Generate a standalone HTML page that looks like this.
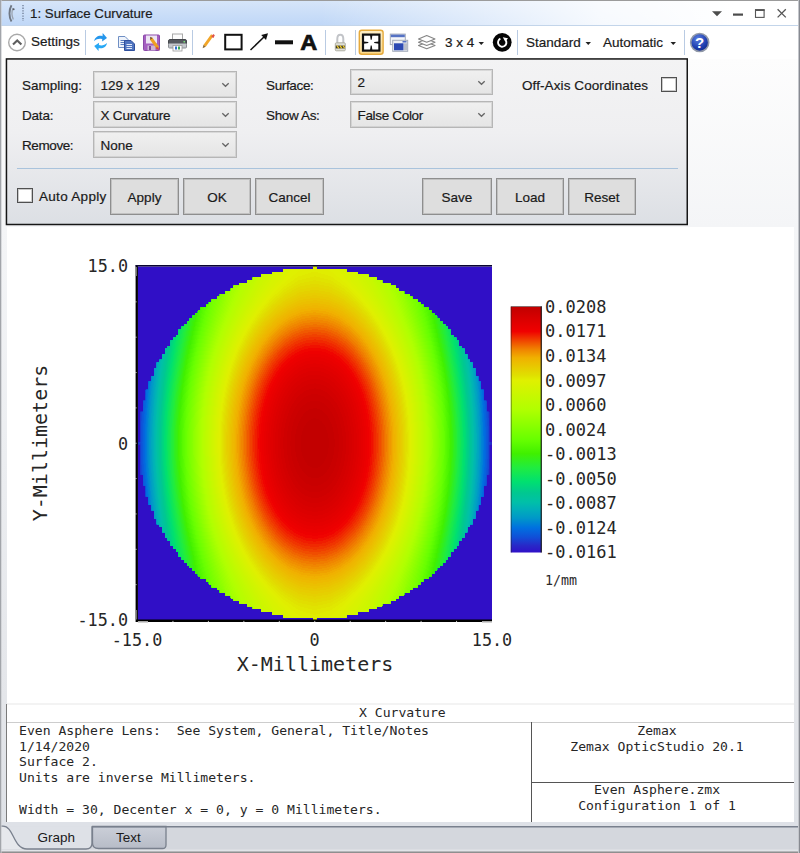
<!DOCTYPE html>
<html>
<head>
<meta charset="utf-8">
<title>1: Surface Curvature</title>
<style>
html,body{margin:0;padding:0;background:#fff;}
body{width:800px;height:853px;position:relative;overflow:hidden;font-family:"Liberation Sans",sans-serif;font-size:13.5px;color:#1a1a1a;-webkit-text-stroke:0.2px #1a1a1a;}
.abs{position:absolute;}
#win{position:absolute;left:0;top:0;width:800px;height:853px;background:#fff;overflow:hidden;}
#titlebar{left:1px;top:1px;width:797px;height:25px;background:linear-gradient(90deg,rgba(255,255,255,0) 0%,rgba(255,255,255,0) 40%,rgba(255,255,255,0.85) 75%,#ffffff 92%),linear-gradient(180deg,#d6e5f9 0%,#c9ddf8 55%,#bfd7f7 100%);}
#titleline{left:1px;top:25px;width:797px;height:1px;background:#c3d5ea;}
#title{left:30px;top:5.5px;line-height:16px;font-size:13.3px;color:#1e1e1e;white-space:nowrap;}
#toolbar{left:1px;top:26px;width:797px;height:32px;background:#fff;}
.tsep{position:absolute;width:1px;top:30px;height:25px;background:#b9cbe3;}
.tb{position:absolute;white-space:nowrap;font-size:13.5px;color:#1a1a1a;}
#sideband{left:1px;top:59px;width:798px;height:763px;background:linear-gradient(180deg,#fdfdfd 0px,#f4f5f7 168px,#eceef1 400px,#e4e6ea 640px,#dfe2e7 763px);}
#panel{left:6px;top:58px;width:682px;height:167px;background:linear-gradient(180deg,#f3f3f4 0%,#efeff1 45%,#dcdfe4 100%);}
.lbl{position:absolute;white-space:nowrap;font-size:13.5px;color:#1a1a1a;line-height:16px;}
.combo{position:absolute;height:27px;border:1px solid #b6b6b6;box-shadow:inset 0 0 0 1px rgba(175,175,175,.35);background:linear-gradient(180deg,#f0f0f0,#e5e5e5);box-sizing:border-box;font-size:13.5px;}
.combo span{position:absolute;left:6.5px;top:5.5px;line-height:16px;white-space:nowrap;}
.combo svg{position:absolute;right:6px;top:10px;}
.btn{position:absolute;height:37px;border:1px solid #8e8e8e;box-shadow:inset 0 0 0 1px rgba(140,140,140,.35);background:#dedede;box-sizing:border-box;font-size:13.5px;text-align:center;line-height:38px;}
.chk{position:absolute;width:14px;height:13px;border:1px solid #505050;box-shadow:inset 0 0 0 1px rgba(80,80,80,.3);background:#fff;box-sizing:content-box;}
#hr{left:17px;top:168px;width:661px;height:1px;background:#a9c3dc;}
#plot{left:7px;top:227px;width:787px;height:595px;background:#fff;}
.mono{font-family:"DejaVu Sans Mono","Liberation Mono",monospace;}
.info{font-size:13.1px;line-height:15.9px;white-space:pre;color:#262626;-webkit-text-stroke:0;}
#tabstrip{left:1px;top:822px;width:797px;height:31px;background:#d3d6dc;}
</style>
</head>
<body>
<div id="win">
  <div class="abs" id="titlebar"></div>
  <div class="abs" id="titleline"></div>
  <div class="abs" id="title">1: Surface Curvature</div>
  <div class="abs" id="toolbar"></div>
  <div class="abs" id="sideband"></div>
  <div class="abs" id="plot"></div>
<!--PLOT-->
<svg class="abs" style="left:0;top:225px" width="800" height="500" viewBox="0 225 800 500" shape-rendering="auto">
<defs>
<linearGradient id="cbg" x1="0" y1="0" x2="0" y2="1"><stop offset="0.000" stop-color="#c00000"/><stop offset="0.047" stop-color="#d80000"/><stop offset="0.101" stop-color="#f00000"/><stop offset="0.136" stop-color="#f04000"/><stop offset="0.172" stop-color="#f08000"/><stop offset="0.208" stop-color="#f0b000"/><stop offset="0.244" stop-color="#e8c800"/><stop offset="0.280" stop-color="#e0e000"/><stop offset="0.300" stop-color="#e0f000"/><stop offset="0.420" stop-color="#b0ff00"/><stop offset="0.540" stop-color="#68ff00"/><stop offset="0.598" stop-color="#40f000"/><stop offset="0.655" stop-color="#20ec40"/><stop offset="0.712" stop-color="#00e070"/><stop offset="0.757" stop-color="#00c890"/><stop offset="0.795" stop-color="#00c0a8"/><stop offset="0.823" stop-color="#00b0b8"/><stop offset="0.860" stop-color="#0098c8"/><stop offset="0.900" stop-color="#0070e0"/><stop offset="0.937" stop-color="#1050d8"/><stop offset="0.972" stop-color="#2828c8"/><stop offset="1.000" stop-color="#3010c8"/></linearGradient>
<clipPath id="circ"><path d="M313.38 266.50H316.12V269.29H313.38ZM283.15 269.24H346.35V272.03H283.15ZM272.16 271.98H357.34V274.77H272.16ZM261.16 274.72H368.34V277.51H261.16ZM252.92 277.46H376.58V280.25H252.92ZM247.42 280.20H382.08V282.99H247.42ZM239.18 282.94H390.32V285.73H239.18ZM233.68 285.68H395.82V288.47H233.68ZM230.93 288.42H398.57V291.21H230.93ZM225.44 291.16H404.06V293.95H225.44ZM219.94 293.90H409.56V296.69H219.94ZM217.19 296.64H412.31V299.43H217.19ZM211.70 299.38H417.80V302.17H211.70ZM208.95 302.12H420.55V304.91H208.95ZM206.20 304.86H423.30V307.65H206.20ZM200.71 307.60H428.79V310.39H200.71ZM197.96 310.34H431.54V313.14H197.96ZM195.21 313.09H434.29V315.88H195.21ZM192.46 315.83H437.04V318.62H192.46ZM189.71 318.57H439.79V321.36H189.71ZM186.97 321.31H442.53V324.10H186.97ZM184.22 324.05H445.28V326.84H184.22ZM181.47 326.79H448.03V329.58H181.47ZM178.72 329.53H450.78V332.32H178.72ZM178.72 332.27H450.78V335.06H178.72ZM175.97 335.01H453.53V337.80H175.97ZM173.22 337.75H456.28V340.54H173.22ZM170.48 340.49H459.02V343.28H170.48ZM170.48 343.23H459.02V346.02H170.48ZM167.73 345.97H461.77V348.76H167.73ZM164.98 348.71H464.52V351.50H164.98ZM164.98 351.45H464.52V354.24H164.98ZM162.23 354.19H467.27V356.98H162.23ZM162.23 356.93H467.27V359.72H162.23ZM159.48 359.67H470.02V362.46H159.48ZM156.74 362.41H472.76V365.20H156.74ZM156.74 365.15H472.76V367.94H156.74ZM153.99 367.89H475.51V370.68H153.99ZM153.99 370.63H475.51V373.42H153.99ZM153.99 373.37H475.51V376.16H153.99ZM151.24 376.11H478.26V378.90H151.24ZM151.24 378.85H478.26V381.64H151.24ZM148.49 381.59H481.01V384.38H148.49ZM148.49 384.33H481.01V387.12H148.49ZM148.49 387.07H481.01V389.86H148.49ZM145.74 389.81H483.76V392.60H145.74ZM145.74 392.55H483.76V395.34H145.74ZM145.74 395.29H483.76V398.08H145.74ZM145.74 398.03H483.76V400.83H145.74ZM143.00 400.78H486.50V403.57H143.00ZM143.00 403.52H486.50V406.31H143.00ZM143.00 406.26H486.50V409.05H143.00ZM143.00 409.00H486.50V411.79H143.00ZM140.25 411.74H489.25V414.53H140.25ZM140.25 414.48H489.25V417.27H140.25ZM140.25 417.22H489.25V420.01H140.25ZM140.25 419.96H489.25V422.75H140.25ZM140.25 422.70H489.25V425.49H140.25ZM140.25 425.44H489.25V428.23H140.25ZM140.25 428.18H489.25V430.97H140.25ZM140.25 430.92H489.25V433.71H140.25ZM140.25 433.66H489.25V436.45H140.25ZM140.25 436.40H489.25V439.19H140.25ZM140.25 439.14H489.25V441.93H140.25ZM137.50 441.88H492.00V444.67H137.50ZM140.25 444.62H489.25V447.41H140.25ZM140.25 447.36H489.25V450.15H140.25ZM140.25 450.10H489.25V452.89H140.25ZM140.25 452.84H489.25V455.63H140.25ZM140.25 455.58H489.25V458.37H140.25ZM140.25 458.32H489.25V461.11H140.25ZM140.25 461.06H489.25V463.85H140.25ZM140.25 463.80H489.25V466.59H140.25ZM140.25 466.54H489.25V469.33H140.25ZM140.25 469.28H489.25V472.07H140.25ZM140.25 472.02H489.25V474.81H140.25ZM143.00 474.76H486.50V477.55H143.00ZM143.00 477.50H486.50V480.29H143.00ZM143.00 480.24H486.50V483.03H143.00ZM143.00 482.98H486.50V485.77H143.00ZM145.74 485.72H483.76V488.52H145.74ZM145.74 488.47H483.76V491.26H145.74ZM145.74 491.21H483.76V494.00H145.74ZM145.74 493.95H483.76V496.74H145.74ZM148.49 496.69H481.01V499.48H148.49ZM148.49 499.43H481.01V502.22H148.49ZM148.49 502.17H481.01V504.96H148.49ZM151.24 504.91H478.26V507.70H151.24ZM151.24 507.65H478.26V510.44H151.24ZM153.99 510.39H475.51V513.18H153.99ZM153.99 513.13H475.51V515.92H153.99ZM153.99 515.87H475.51V518.66H153.99ZM156.74 518.61H472.76V521.40H156.74ZM156.74 521.35H472.76V524.14H156.74ZM159.48 524.09H470.02V526.88H159.48ZM162.23 526.83H467.27V529.62H162.23ZM162.23 529.57H467.27V532.36H162.23ZM164.98 532.31H464.52V535.10H164.98ZM164.98 535.05H464.52V537.84H164.98ZM167.73 537.79H461.77V540.58H167.73ZM170.48 540.53H459.02V543.32H170.48ZM170.48 543.27H459.02V546.06H170.48ZM173.22 546.01H456.28V548.80H173.22ZM175.97 548.75H453.53V551.54H175.97ZM178.72 551.49H450.78V554.28H178.72ZM178.72 554.23H450.78V557.02H178.72ZM181.47 556.97H448.03V559.76H181.47ZM184.22 559.71H445.28V562.50H184.22ZM186.97 562.45H442.53V565.24H186.97ZM189.71 565.19H439.79V567.98H189.71ZM192.46 567.93H437.04V570.72H192.46ZM195.21 570.67H434.29V573.46H195.21ZM197.96 573.41H431.54V576.21H197.96ZM200.71 576.16H428.79V578.95H200.71ZM206.20 578.90H423.30V581.69H206.20ZM208.95 581.64H420.55V584.43H208.95ZM211.70 584.38H417.80V587.17H211.70ZM217.19 587.12H412.31V589.91H217.19ZM219.94 589.86H409.56V592.65H219.94ZM225.44 592.60H404.06V595.39H225.44ZM230.93 595.34H398.57V598.13H230.93ZM233.68 598.08H395.82V600.87H233.68ZM239.18 600.82H390.32V603.61H239.18ZM247.42 603.56H382.08V606.35H247.42ZM252.92 606.30H376.58V609.09H252.92ZM261.16 609.04H368.34V611.83H261.16ZM272.16 611.78H357.34V614.57H272.16ZM283.15 614.52H346.35V617.31H283.15ZM313.38 617.26H316.12V620.05H313.38Z"/></clipPath>
</defs>
<rect x="137.5" y="266.5" width="354.5" height="353.5" fill="#300fc6"/>
<g clip-path="url(#circ)" shape-rendering="crispEdges">
<path d="M494.4 443.2L494.2 425.6L493.2 407.8L488.9 390.6L482.9 373.8L475.2 357.7L466.1 342.4L455.4 328.1L443.4 314.9L430.2 303.0L415.9 292.4L400.5 283.2L384.4 275.6L367.6 269.6L350.3 265.3L332.6 262.7L314.8 261.8L296.9 262.7L279.2 265.3L261.9 269.6L245.1 275.6L229.0 283.2L213.6 292.4L199.3 303.0L186.1 314.9L174.1 328.1L163.4 342.4L154.3 357.7L146.6 373.8L140.6 390.6L136.3 407.8L135.3 425.6L135.1 443.2L135.3 460.9L136.3 478.7L140.6 495.9L146.6 512.7L154.3 528.8L163.4 544.1L174.1 558.4L186.1 571.6L199.3 583.5L213.6 594.1L229.0 603.3L245.1 610.9L261.9 616.9L279.2 621.2L296.9 623.8L314.7 624.7L332.6 623.8L350.3 621.2L367.6 616.9L384.4 610.9L400.5 603.3L415.9 594.1L430.2 583.5L443.4 571.6L455.4 558.4L466.1 544.1L475.2 528.8L482.9 512.7L488.9 495.9L493.2 478.7L494.2 460.9Z" fill="#2f13c8"/>
<path d="M493.7 443.2L493.5 425.7L492.9 407.9L488.9 390.6L482.9 373.8L475.2 357.7L466.1 342.4L455.4 328.1L443.4 314.9L430.2 303.0L415.9 292.4L400.5 283.2L384.4 275.6L367.6 269.6L350.3 265.3L332.6 262.7L314.8 261.8L296.9 262.7L279.2 265.3L261.9 269.6L245.1 275.6L229.0 283.2L213.6 292.4L199.3 303.0L186.1 314.9L174.1 328.1L163.4 342.4L154.3 357.7L146.6 373.8L140.6 390.6L136.6 407.9L136.0 425.7L135.8 443.2L136.0 460.8L136.6 478.6L140.6 495.9L146.6 512.7L154.3 528.8L163.4 544.1L174.1 558.4L186.1 571.6L199.3 583.5L213.6 594.1L229.0 603.3L245.1 610.9L261.9 616.9L279.2 621.2L296.9 623.8L314.7 624.7L332.6 623.8L350.3 621.2L367.6 616.9L384.4 610.9L400.5 603.3L415.9 594.1L430.2 583.5L443.4 571.6L455.4 558.4L466.1 544.1L475.2 528.8L482.9 512.7L488.9 495.9L492.9 478.6L493.5 460.8Z" fill="#2d19c8"/>
<path d="M493.1 443.2L492.9 425.8L492.3 408.0L488.9 390.6L482.9 373.8L475.2 357.7L466.1 342.4L455.4 328.1L443.4 314.9L430.2 303.0L415.9 292.4L400.5 283.2L384.4 275.6L367.6 269.6L350.3 265.3L332.6 262.7L314.8 261.8L296.9 262.7L279.2 265.3L261.9 269.6L245.1 275.6L229.0 283.2L213.6 292.4L199.3 303.0L186.1 314.9L174.1 328.1L163.4 342.4L154.3 357.7L146.6 373.8L140.6 390.6L137.2 408.0L136.6 425.8L136.4 443.2L136.6 460.7L137.2 478.5L140.6 495.9L146.6 512.7L154.3 528.8L163.4 544.1L174.1 558.4L186.1 571.6L199.3 583.5L213.6 594.1L229.0 603.3L245.1 610.9L261.9 616.9L279.2 621.2L296.9 623.8L314.7 624.7L332.6 623.8L350.3 621.2L367.6 616.9L384.4 610.9L400.5 603.3L415.9 594.1L430.2 583.5L443.4 571.6L455.4 558.4L466.1 544.1L475.2 528.8L482.9 512.7L488.9 495.9L492.3 478.5L492.9 460.7Z" fill="#2b1ec8"/>
<path d="M492.4 443.2L492.2 425.8L491.6 408.2L488.9 390.6L482.9 373.8L475.2 357.7L466.1 342.4L455.4 328.1L443.4 314.9L430.2 303.0L415.9 292.4L400.5 283.2L384.4 275.6L367.6 269.6L350.3 265.3L332.6 262.7L314.8 261.8L296.9 262.7L279.2 265.3L261.9 269.6L245.1 275.6L229.0 283.2L213.6 292.4L199.3 303.0L186.1 314.9L174.1 328.1L163.4 342.4L154.3 357.7L146.6 373.8L140.6 390.6L137.9 408.2L137.3 425.8L137.1 443.2L137.3 460.7L137.9 478.3L140.6 495.9L146.6 512.7L154.3 528.8L163.4 544.1L174.1 558.4L186.1 571.6L199.3 583.5L213.6 594.1L229.0 603.3L245.1 610.9L261.9 616.9L279.2 621.2L296.9 623.8L314.7 624.7L332.6 623.8L350.3 621.2L367.6 616.9L384.4 610.9L400.5 603.3L415.9 594.1L430.2 583.5L443.4 571.6L455.4 558.4L466.1 544.1L475.2 528.8L482.9 512.7L488.9 495.9L491.6 478.3L492.2 460.7Z" fill="#2924c8"/>
<path d="M491.7 443.2L491.5 425.9L490.9 408.3L488.9 390.6L482.9 373.8L475.2 357.7L466.1 342.4L455.4 328.1L443.4 314.9L430.2 303.0L415.9 292.4L400.5 283.2L384.4 275.6L367.6 269.6L350.3 265.3L332.6 262.7L314.8 261.8L296.9 262.7L279.2 265.3L261.9 269.6L245.1 275.6L229.0 283.2L213.6 292.4L199.3 303.0L186.1 314.9L174.1 328.1L163.4 342.4L154.3 357.7L146.6 373.8L140.6 390.6L138.6 408.3L138.0 425.9L137.8 443.2L138.0 460.6L138.6 478.2L140.6 495.9L146.6 512.7L154.3 528.8L163.4 544.1L174.1 558.4L186.1 571.6L199.3 583.5L213.6 594.1L229.0 603.3L245.1 610.9L261.9 616.9L279.2 621.2L296.9 623.8L314.7 624.7L332.6 623.8L350.3 621.2L367.6 616.9L384.4 610.9L400.5 603.3L415.9 594.1L430.2 583.5L443.4 571.6L455.4 558.4L466.1 544.1L475.2 528.8L482.9 512.7L488.9 495.9L490.9 478.2L491.5 460.6Z" fill="#272ac9"/>
<path d="M491.1 443.2L490.9 426.0L490.3 408.4L488.9 390.6L482.9 373.8L475.2 357.7L466.1 342.4L455.4 328.1L443.4 314.9L430.2 303.0L415.9 292.4L400.5 283.2L384.4 275.6L367.6 269.6L350.3 265.3L332.6 262.7L314.8 261.8L296.9 262.7L279.2 265.3L261.9 269.6L245.1 275.6L229.0 283.2L213.6 292.4L199.3 303.0L186.1 314.9L174.1 328.1L163.4 342.4L154.3 357.7L146.6 373.8L140.6 390.6L139.2 408.4L138.6 426.0L138.4 443.2L138.6 460.5L139.2 478.1L140.6 495.9L146.6 512.7L154.3 528.8L163.4 544.1L174.1 558.4L186.1 571.6L199.3 583.5L213.6 594.1L229.0 603.3L245.1 610.9L261.9 616.9L279.2 621.2L296.9 623.8L314.7 624.7L332.6 623.8L350.3 621.2L367.6 616.9L384.4 610.9L400.5 603.3L415.9 594.1L430.2 583.5L443.4 571.6L455.4 558.4L466.1 544.1L475.2 528.8L482.9 512.7L488.9 495.9L490.3 478.1L490.9 460.5Z" fill="#2232cc"/>
<path d="M490.4 443.2L490.2 426.0L489.6 408.6L488.6 390.7L482.9 373.8L475.2 357.7L466.1 342.4L455.4 328.1L443.4 314.9L430.2 303.0L415.9 292.4L400.5 283.2L384.4 275.6L367.6 269.6L350.3 265.3L332.6 262.7L314.8 261.8L296.9 262.7L279.2 265.3L261.9 269.6L245.1 275.6L229.0 283.2L213.6 292.4L199.3 303.0L186.1 314.9L174.1 328.1L163.4 342.4L154.3 357.7L146.6 373.8L140.9 390.7L139.9 408.6L139.3 426.0L139.1 443.2L139.3 460.5L139.9 477.9L140.9 495.8L146.6 512.7L154.3 528.8L163.4 544.1L174.1 558.4L186.1 571.6L199.3 583.5L213.6 594.1L229.0 603.3L245.1 610.9L261.9 616.9L279.2 621.2L296.9 623.8L314.7 624.7L332.6 623.8L350.3 621.2L367.6 616.9L384.4 610.9L400.5 603.3L415.9 594.1L430.2 583.5L443.4 571.6L455.4 558.4L466.1 544.1L475.2 528.8L482.9 512.7L488.6 495.8L489.6 477.9L490.2 460.5Z" fill="#1d3acf"/>
<path d="M489.7 443.2L489.5 426.1L488.9 408.7L487.9 390.9L482.9 373.8L475.2 357.7L466.1 342.4L455.4 328.1L443.4 314.9L430.2 303.0L415.9 292.4L400.5 283.2L384.4 275.6L367.6 269.6L350.3 265.3L332.6 262.7L314.8 261.8L296.9 262.7L279.2 265.3L261.9 269.6L245.1 275.6L229.0 283.2L213.6 292.4L199.3 303.0L186.1 314.9L174.1 328.1L163.4 342.4L154.3 357.7L146.6 373.8L141.6 390.9L140.6 408.7L140.0 426.1L139.8 443.2L140.0 460.4L140.6 477.8L141.6 495.6L146.6 512.7L154.3 528.8L163.4 544.1L174.1 558.4L186.1 571.6L199.3 583.5L213.6 594.1L229.0 603.3L245.1 610.9L261.9 616.9L279.2 621.2L296.9 623.8L314.7 624.7L332.6 623.8L350.3 621.2L367.6 616.9L384.4 610.9L400.5 603.3L415.9 594.1L430.2 583.5L443.4 571.6L455.4 558.4L466.1 544.1L475.2 528.8L482.9 512.7L487.9 495.6L488.9 477.8L489.5 460.4Z" fill="#1941d2"/>
<path d="M489.0 443.2L488.8 426.2L488.2 408.8L487.2 391.1L482.9 373.8L475.2 357.7L466.1 342.4L455.4 328.1L443.4 314.9L430.2 303.0L415.9 292.4L400.5 283.2L384.4 275.6L367.6 269.6L350.3 265.3L332.6 262.7L314.8 261.8L296.9 262.7L279.2 265.3L261.9 269.6L245.1 275.6L229.0 283.2L213.6 292.4L199.3 303.0L186.1 314.9L174.1 328.1L163.4 342.4L154.3 357.7L146.6 373.8L142.3 391.1L141.3 408.8L140.7 426.2L140.5 443.2L140.7 460.3L141.3 477.7L142.3 495.4L146.6 512.7L154.3 528.8L163.4 544.1L174.1 558.4L186.1 571.6L199.3 583.5L213.6 594.1L229.0 603.3L245.1 610.9L261.9 616.9L279.2 621.2L296.9 623.8L314.7 624.7L332.6 623.8L350.3 621.2L367.6 616.9L384.4 610.9L400.5 603.3L415.9 594.1L430.2 583.5L443.4 571.6L455.4 558.4L466.1 544.1L475.2 528.8L482.9 512.7L487.2 495.4L488.2 477.7L488.8 460.3Z" fill="#1449d5"/>
<path d="M488.4 443.2L488.2 426.2L487.5 409.0L486.5 391.3L482.9 373.8L475.2 357.7L466.1 342.4L455.4 328.1L443.4 314.9L430.2 303.0L415.9 292.4L400.5 283.2L384.4 275.6L367.6 269.6L350.3 265.3L332.6 262.7L314.8 261.8L296.9 262.7L279.2 265.3L261.9 269.6L245.1 275.6L229.0 283.2L213.6 292.4L199.3 303.0L186.1 314.9L174.1 328.1L163.4 342.4L154.3 357.7L146.6 373.8L143.0 391.3L142.0 409.0L141.3 426.2L141.1 443.2L141.3 460.3L142.0 477.5L143.0 495.2L146.6 512.7L154.3 528.8L163.4 544.1L174.1 558.4L186.1 571.6L199.3 583.5L213.6 594.1L229.0 603.3L245.1 610.9L261.9 616.9L279.2 621.2L296.9 623.8L314.7 624.7L332.6 623.8L350.3 621.2L367.6 616.9L384.4 610.9L400.5 603.3L415.9 594.1L430.2 583.5L443.4 571.6L455.4 558.4L466.1 544.1L475.2 528.8L482.9 512.7L486.5 495.2L487.5 477.5L488.2 460.3Z" fill="#1050d8"/>
<path d="M487.7 443.2L487.5 426.3L486.9 409.1L485.9 391.5L482.9 373.8L475.2 357.7L466.1 342.4L455.4 328.1L443.4 314.9L430.2 303.0L415.9 292.4L400.5 283.2L384.4 275.6L367.6 269.6L350.3 265.3L332.6 262.7L314.8 261.8L296.9 262.7L279.2 265.3L261.9 269.6L245.1 275.6L229.0 283.2L213.6 292.4L199.3 303.0L186.1 314.9L174.1 328.1L163.4 342.4L154.3 357.7L146.6 373.8L143.6 391.5L142.6 409.1L142.0 426.3L141.8 443.2L142.0 460.2L142.6 477.4L143.6 495.0L146.6 512.7L154.3 528.8L163.4 544.1L174.1 558.4L186.1 571.6L199.3 583.5L213.6 594.1L229.0 603.3L245.1 610.9L261.9 616.9L279.2 621.2L296.9 623.8L314.7 624.7L332.6 623.8L350.3 621.2L367.6 616.9L384.4 610.9L400.5 603.3L415.9 594.1L430.2 583.5L443.4 571.6L455.4 558.4L466.1 544.1L475.2 528.8L482.9 512.7L485.9 495.0L486.9 477.4L487.5 460.2Z" fill="#0d56da"/>
<path d="M487.0 443.2L486.8 426.4L486.2 409.2L485.2 391.7L482.9 373.8L475.2 357.7L466.1 342.4L455.4 328.1L443.4 314.9L430.2 303.0L415.9 292.4L400.5 283.2L384.4 275.6L367.6 269.6L350.3 265.3L332.6 262.7L314.8 261.8L296.9 262.7L279.2 265.3L261.9 269.6L245.1 275.6L229.0 283.2L213.6 292.4L199.3 303.0L186.1 314.9L174.1 328.1L163.4 342.4L154.3 357.7L146.6 373.8L144.3 391.7L143.3 409.2L142.7 426.4L142.5 443.2L142.7 460.1L143.3 477.3L144.3 494.8L146.6 512.7L154.3 528.8L163.4 544.1L174.1 558.4L186.1 571.6L199.3 583.5L213.6 594.1L229.0 603.3L245.1 610.9L261.9 616.9L279.2 621.2L296.9 623.8L314.7 624.7L332.6 623.8L350.3 621.2L367.6 616.9L384.4 610.9L400.5 603.3L415.9 594.1L430.2 583.5L443.4 571.6L455.4 558.4L466.1 544.1L475.2 528.8L482.9 512.7L485.2 494.8L486.2 477.3L486.8 460.1Z" fill="#0a5cdb"/>
<path d="M486.3 443.2L486.1 426.4L485.5 409.4L484.5 391.9L482.9 373.8L475.2 357.7L466.1 342.4L455.4 328.1L443.4 314.9L430.2 303.0L415.9 292.4L400.5 283.2L384.4 275.6L367.6 269.6L350.3 265.3L332.6 262.7L314.8 261.8L296.9 262.7L279.2 265.3L261.9 269.6L245.1 275.6L229.0 283.2L213.6 292.4L199.3 303.0L186.1 314.9L174.1 328.1L163.4 342.4L154.3 357.7L146.6 373.8L145.0 391.9L144.0 409.4L143.4 426.4L143.2 443.2L143.4 460.1L144.0 477.1L145.0 494.6L146.6 512.7L154.3 528.8L163.4 544.1L174.1 558.4L186.1 571.6L199.3 583.5L213.6 594.1L229.0 603.3L245.1 610.9L261.9 616.9L279.2 621.2L296.9 623.8L314.7 624.7L332.6 623.8L350.3 621.2L367.6 616.9L384.4 610.9L400.5 603.3L415.9 594.1L430.2 583.5L443.4 571.6L455.4 558.4L466.1 544.1L475.2 528.8L482.9 512.7L484.5 494.6L485.5 477.1L486.1 460.1Z" fill="#0762dc"/>
<path d="M485.7 443.2L485.5 426.5L484.8 409.5L483.8 392.1L482.4 374.0L475.2 357.7L466.1 342.4L455.4 328.1L443.4 314.9L430.2 303.0L415.9 292.4L400.5 283.2L384.4 275.6L367.6 269.6L350.3 265.3L332.6 262.7L314.8 261.8L296.9 262.7L279.2 265.3L261.9 269.6L245.1 275.6L229.0 283.2L213.6 292.4L199.3 303.0L186.1 314.9L174.1 328.1L163.4 342.4L154.3 357.7L147.1 374.0L145.7 392.1L144.7 409.5L144.0 426.5L143.8 443.2L144.0 460.0L144.7 477.0L145.7 494.4L147.1 512.5L154.3 528.8L163.4 544.1L174.1 558.4L186.1 571.6L199.3 583.5L213.6 594.1L229.0 603.3L245.1 610.9L261.9 616.9L279.2 621.2L296.9 623.8L314.7 624.7L332.6 623.8L350.3 621.2L367.6 616.9L384.4 610.9L400.5 603.3L415.9 594.1L430.2 583.5L443.4 571.6L455.4 558.4L466.1 544.1L475.2 528.8L482.4 512.5L483.8 494.4L484.8 477.0L485.5 460.0Z" fill="#0467de"/>
<path d="M485.0 443.2L484.8 426.6L484.1 409.7L483.1 392.3L481.7 374.3L475.2 357.7L466.1 342.4L455.4 328.1L443.4 314.9L430.2 303.0L415.9 292.4L400.5 283.2L384.4 275.6L367.6 269.6L350.3 265.3L332.6 262.7L314.8 261.8L296.9 262.7L279.2 265.3L261.9 269.6L245.1 275.6L229.0 283.2L213.6 292.4L199.3 303.0L186.1 314.9L174.1 328.1L163.4 342.4L154.3 357.7L147.8 374.3L146.4 392.3L145.4 409.7L144.7 426.6L144.5 443.2L144.7 459.9L145.4 476.8L146.4 494.2L147.8 512.2L154.3 528.8L163.4 544.1L174.1 558.4L186.1 571.6L199.3 583.5L213.6 594.1L229.0 603.3L245.1 610.9L261.9 616.9L279.2 621.2L296.9 623.8L314.7 624.7L332.6 623.8L350.3 621.2L367.6 616.9L384.4 610.9L400.5 603.3L415.9 594.1L430.2 583.5L443.4 571.6L455.4 558.4L466.1 544.1L475.2 528.8L481.7 512.2L483.1 494.2L484.1 476.8L484.8 459.9Z" fill="#016ddf"/>
<path d="M484.3 443.2L484.1 426.6L483.4 409.8L482.4 392.5L481.0 374.6L475.2 357.7L466.1 342.4L455.4 328.1L443.4 314.9L430.2 303.0L415.9 292.4L400.5 283.2L384.4 275.6L367.6 269.6L350.3 265.3L332.6 262.7L314.8 261.8L296.9 262.7L279.2 265.3L261.9 269.6L245.1 275.6L229.0 283.2L213.6 292.4L199.3 303.0L186.1 314.9L174.1 328.1L163.4 342.4L154.3 357.7L148.5 374.6L147.1 392.5L146.1 409.8L145.4 426.6L145.2 443.2L145.4 459.9L146.1 476.7L147.1 494.0L148.5 511.9L154.3 528.8L163.4 544.1L174.1 558.4L186.1 571.6L199.3 583.5L213.6 594.1L229.0 603.3L245.1 610.9L261.9 616.9L279.2 621.2L296.9 623.8L314.7 624.7L332.6 623.8L350.3 621.2L367.6 616.9L384.4 610.9L400.5 603.3L415.9 594.1L430.2 583.5L443.4 571.6L455.4 558.4L466.1 544.1L475.2 528.8L481.0 511.9L482.4 494.0L483.4 476.7L484.1 459.9Z" fill="#0073de"/>
<path d="M483.6 443.2L483.4 426.7L482.8 409.9L481.7 392.7L480.3 374.9L475.2 357.7L466.1 342.4L455.4 328.1L443.4 314.9L430.2 303.0L415.9 292.4L400.5 283.2L384.4 275.6L367.6 269.6L350.3 265.3L332.6 262.7L314.8 261.8L296.9 262.7L279.2 265.3L261.9 269.6L245.1 275.6L229.0 283.2L213.6 292.4L199.3 303.0L186.1 314.9L174.1 328.1L163.4 342.4L154.3 357.7L149.2 374.9L147.8 392.7L146.7 409.9L146.1 426.7L145.9 443.2L146.1 459.8L146.7 476.6L147.8 493.8L149.2 511.6L154.3 528.8L163.4 544.1L174.1 558.4L186.1 571.6L199.3 583.5L213.6 594.1L229.0 603.3L245.1 610.9L261.9 616.9L279.2 621.2L296.9 623.8L314.7 624.7L332.6 623.8L350.3 621.2L367.6 616.9L384.4 610.9L400.5 603.3L415.9 594.1L430.2 583.5L443.4 571.6L455.4 558.4L466.1 544.1L475.2 528.8L480.3 511.6L481.7 493.8L482.8 476.6L483.4 459.8Z" fill="#007ada"/>
<path d="M482.9 443.2L482.7 426.8L482.1 410.1L481.0 393.0L479.6 375.2L475.2 357.7L466.1 342.4L455.4 328.1L443.4 314.9L430.2 303.0L415.9 292.4L400.5 283.2L384.4 275.6L367.6 269.6L350.3 265.3L332.6 262.7L314.8 261.8L296.9 262.7L279.2 265.3L261.9 269.6L245.1 275.6L229.0 283.2L213.6 292.4L199.3 303.0L186.1 314.9L174.1 328.1L163.4 342.4L154.3 357.7L149.9 375.2L148.5 393.0L147.4 410.1L146.8 426.8L146.6 443.2L146.8 459.7L147.4 476.4L148.5 493.5L149.9 511.3L154.3 528.8L163.4 544.1L174.1 558.4L186.1 571.6L199.3 583.5L213.6 594.1L229.0 603.3L245.1 610.9L261.9 616.9L279.2 621.2L296.9 623.8L314.7 624.7L332.6 623.8L350.3 621.2L367.6 616.9L384.4 610.9L400.5 603.3L415.9 594.1L430.2 583.5L443.4 571.6L455.4 558.4L466.1 544.1L475.2 528.8L479.6 511.3L481.0 493.5L482.1 476.4L482.7 459.7Z" fill="#0081d6"/>
<path d="M482.2 443.2L482.0 426.8L481.4 410.2L480.3 393.2L478.9 375.5L475.2 357.7L466.1 342.4L455.4 328.1L443.4 314.9L430.2 303.0L415.9 292.4L400.5 283.2L384.4 275.6L367.6 269.6L350.3 265.3L332.6 262.7L314.8 261.8L296.9 262.7L279.2 265.3L261.9 269.6L245.1 275.6L229.0 283.2L213.6 292.4L199.3 303.0L186.1 314.9L174.1 328.1L163.4 342.4L154.3 357.7L150.6 375.5L149.2 393.2L148.1 410.2L147.5 426.8L147.3 443.2L147.5 459.7L148.1 476.3L149.2 493.3L150.6 511.0L154.3 528.8L163.4 544.1L174.1 558.4L186.1 571.6L199.3 583.5L213.6 594.1L229.0 603.3L245.1 610.9L261.9 616.9L279.2 621.2L296.9 623.8L314.7 624.7L332.6 623.8L350.3 621.2L367.6 616.9L384.4 610.9L400.5 603.3L415.9 594.1L430.2 583.5L443.4 571.6L455.4 558.4L466.1 544.1L475.2 528.8L478.9 511.0L480.3 493.3L481.4 476.3L482.0 459.7Z" fill="#0087d2"/>
<path d="M481.5 443.2L481.3 426.9L480.7 410.3L479.6 393.4L478.1 375.8L475.2 357.7L466.1 342.4L455.4 328.1L443.4 314.9L430.2 303.0L415.9 292.4L400.5 283.2L384.4 275.6L367.6 269.6L350.3 265.3L332.6 262.7L314.8 261.8L296.9 262.7L279.2 265.3L261.9 269.6L245.1 275.6L229.0 283.2L213.6 292.4L199.3 303.0L186.1 314.9L174.1 328.1L163.4 342.4L154.3 357.7L151.4 375.8L149.9 393.4L148.8 410.3L148.2 426.9L148.0 443.2L148.2 459.6L148.8 476.2L149.9 493.1L151.4 510.7L154.3 528.8L163.4 544.1L174.1 558.4L186.1 571.6L199.3 583.5L213.6 594.1L229.0 603.3L245.1 610.9L261.9 616.9L279.2 621.2L296.9 623.8L314.7 624.7L332.6 623.8L350.3 621.2L367.6 616.9L384.4 610.9L400.5 603.3L415.9 594.1L430.2 583.5L443.4 571.6L455.4 558.4L466.1 544.1L475.2 528.8L478.1 510.7L479.6 493.1L480.7 476.2L481.3 459.6Z" fill="#008ece"/>
<path d="M480.9 443.2L480.6 427.0L480.0 410.5L478.9 393.6L477.4 376.1L475.2 357.7L466.1 342.4L455.4 328.1L443.4 314.9L430.2 303.0L415.9 292.4L400.5 283.2L384.4 275.6L367.6 269.6L350.3 265.3L332.6 262.7L314.8 261.8L296.9 262.7L279.2 265.3L261.9 269.6L245.1 275.6L229.0 283.2L213.6 292.4L199.3 303.0L186.1 314.9L174.1 328.1L163.4 342.4L154.3 357.7L152.1 376.1L150.6 393.6L149.5 410.5L148.9 427.0L148.6 443.2L148.9 459.5L149.5 476.0L150.6 492.9L152.1 510.4L154.3 528.8L163.4 544.1L174.1 558.4L186.1 571.6L199.3 583.5L213.6 594.1L229.0 603.3L245.1 610.9L261.9 616.9L279.2 621.2L296.9 623.8L314.7 624.7L332.6 623.8L350.3 621.2L367.6 616.9L384.4 610.9L400.5 603.3L415.9 594.1L430.2 583.5L443.4 571.6L455.4 558.4L466.1 544.1L475.2 528.8L477.4 510.4L478.9 492.9L480.0 476.0L480.6 459.5Z" fill="#0095ca"/>
<path d="M480.2 443.2L479.9 427.0L479.3 410.6L478.2 393.8L476.7 376.4L474.9 357.9L466.1 342.4L455.4 328.1L443.4 314.9L430.2 303.0L415.9 292.4L400.5 283.2L384.4 275.6L367.6 269.6L350.3 265.3L332.6 262.7L314.8 261.8L296.9 262.7L279.2 265.3L261.9 269.6L245.1 275.6L229.0 283.2L213.6 292.4L199.3 303.0L186.1 314.9L174.1 328.1L163.4 342.4L154.6 357.9L152.8 376.4L151.3 393.8L150.2 410.6L149.6 427.0L149.3 443.2L149.6 459.5L150.2 475.9L151.3 492.7L152.8 510.1L154.6 528.6L163.4 544.1L174.1 558.4L186.1 571.6L199.3 583.5L213.6 594.1L229.0 603.3L245.1 610.9L261.9 616.9L279.2 621.2L296.9 623.8L314.7 624.7L332.6 623.8L350.3 621.2L367.6 616.9L384.4 610.9L400.5 603.3L415.9 594.1L430.2 583.5L443.4 571.6L455.4 558.4L466.1 544.1L474.9 528.6L476.7 510.1L478.2 492.7L479.3 475.9L479.9 459.5Z" fill="#009ac7"/>
<path d="M479.5 443.2L479.2 427.1L478.6 410.8L477.5 394.0L476.0 376.6L474.2 358.3L466.1 342.4L455.4 328.1L443.4 314.9L430.2 303.0L415.9 292.4L400.5 283.2L384.4 275.6L367.6 269.6L350.3 265.3L332.6 262.7L314.8 261.8L296.9 262.7L279.2 265.3L261.9 269.6L245.1 275.6L229.0 283.2L213.6 292.4L199.3 303.0L186.1 314.9L174.1 328.1L163.4 342.4L155.3 358.3L153.5 376.6L152.0 394.0L150.9 410.8L150.3 427.1L150.0 443.2L150.3 459.4L150.9 475.7L152.0 492.5L153.5 509.9L155.3 528.2L163.4 544.1L174.1 558.4L186.1 571.6L199.3 583.5L213.6 594.1L229.0 603.3L245.1 610.9L261.9 616.9L279.2 621.2L296.9 623.8L314.7 624.7L332.6 623.8L350.3 621.2L367.6 616.9L384.4 610.9L400.5 603.3L415.9 594.1L430.2 583.5L443.4 571.6L455.4 558.4L466.1 544.1L474.2 528.2L476.0 509.9L477.5 492.5L478.6 475.7L479.2 459.4Z" fill="#009ec4"/>
<path d="M478.8 443.2L478.5 427.2L477.9 410.9L476.8 394.2L475.3 376.9L473.4 358.7L466.1 342.4L455.4 328.1L443.4 314.9L430.2 303.0L415.9 292.4L400.5 283.2L384.4 275.6L367.6 269.6L350.3 265.3L332.6 262.7L314.8 261.8L296.9 262.7L279.2 265.3L261.9 269.6L245.1 275.6L229.0 283.2L213.6 292.4L199.3 303.0L186.1 314.9L174.1 328.1L163.4 342.4L156.1 358.7L154.2 376.9L152.7 394.2L151.6 410.9L151.0 427.2L150.7 443.2L151.0 459.3L151.6 475.6L152.7 492.3L154.2 509.6L156.1 527.8L163.4 544.1L174.1 558.4L186.1 571.6L199.3 583.5L213.6 594.1L229.0 603.3L245.1 610.9L261.9 616.9L279.2 621.2L296.9 623.8L314.7 624.7L332.6 623.8L350.3 621.2L367.6 616.9L384.4 610.9L400.5 603.3L415.9 594.1L430.2 583.5L443.4 571.6L455.4 558.4L466.1 544.1L473.4 527.8L475.3 509.6L476.8 492.3L477.9 475.6L478.5 459.3Z" fill="#00a3c1"/>
<path d="M478.1 443.2L477.8 427.2L477.2 411.0L476.1 394.4L474.6 377.2L472.7 359.1L466.1 342.4L455.4 328.1L443.4 314.9L430.2 303.0L415.9 292.4L400.5 283.2L384.4 275.6L367.6 269.6L350.3 265.3L332.6 262.7L314.8 261.8L296.9 262.7L279.2 265.3L261.9 269.6L245.1 275.6L229.0 283.2L213.6 292.4L199.3 303.0L186.1 314.9L174.1 328.1L163.4 342.4L156.8 359.1L154.9 377.2L153.4 394.4L152.3 411.0L151.7 427.2L151.4 443.2L151.7 459.3L152.3 475.5L153.4 492.1L154.9 509.3L156.8 527.4L163.4 544.1L174.1 558.4L186.1 571.6L199.3 583.5L213.6 594.1L229.0 603.3L245.1 610.9L261.9 616.9L279.2 621.2L296.9 623.8L314.7 624.7L332.6 623.8L350.3 621.2L367.6 616.9L384.4 610.9L400.5 603.3L415.9 594.1L430.2 583.5L443.4 571.6L455.4 558.4L466.1 544.1L472.7 527.4L474.6 509.3L476.1 492.1L477.2 475.5L477.8 459.3Z" fill="#00a7be"/>
<path d="M477.4 443.2L477.1 427.3L476.5 411.2L475.4 394.7L473.8 377.5L472.0 359.5L466.1 342.4L455.4 328.1L443.4 314.9L430.2 303.0L415.9 292.4L400.5 283.2L384.4 275.6L367.6 269.6L350.3 265.3L332.6 262.7L314.8 261.8L296.9 262.7L279.2 265.3L261.9 269.6L245.1 275.6L229.0 283.2L213.6 292.4L199.3 303.0L186.1 314.9L174.1 328.1L163.4 342.4L157.5 359.5L155.7 377.5L154.1 394.7L153.0 411.2L152.4 427.3L152.1 443.2L152.4 459.2L153.0 475.3L154.1 491.8L155.7 509.0L157.5 527.0L163.4 544.1L174.1 558.4L186.1 571.6L199.3 583.5L213.6 594.1L229.0 603.3L245.1 610.9L261.9 616.9L279.2 621.2L296.9 623.8L314.7 624.7L332.6 623.8L350.3 621.2L367.6 616.9L384.4 610.9L400.5 603.3L415.9 594.1L430.2 583.5L443.4 571.6L455.4 558.4L466.1 544.1L472.0 527.0L473.8 509.0L475.4 491.8L476.5 475.3L477.1 459.2Z" fill="#00abbb"/>
<path d="M476.7 443.2L476.4 427.4L475.8 411.3L474.7 394.9L473.1 377.8L471.2 359.9L466.1 342.4L455.4 328.1L443.4 314.9L430.2 303.0L415.9 292.4L400.5 283.2L384.4 275.6L367.6 269.6L350.3 265.3L332.6 262.7L314.8 261.8L296.9 262.7L279.2 265.3L261.9 269.6L245.1 275.6L229.0 283.2L213.6 292.4L199.3 303.0L186.1 314.9L174.1 328.1L163.4 342.4L158.3 359.9L156.4 377.8L154.8 394.9L153.7 411.3L153.1 427.4L152.8 443.2L153.1 459.1L153.7 475.2L154.8 491.6L156.4 508.7L158.3 526.6L163.4 544.1L174.1 558.4L186.1 571.6L199.3 583.5L213.6 594.1L229.0 603.3L245.1 610.9L261.9 616.9L279.2 621.2L296.9 623.8L314.7 624.7L332.6 623.8L350.3 621.2L367.6 616.9L384.4 610.9L400.5 603.3L415.9 594.1L430.2 583.5L443.4 571.6L455.4 558.4L466.1 544.1L471.2 526.6L473.1 508.7L474.7 491.6L475.8 475.2L476.4 459.1Z" fill="#00b0b8"/>
<path d="M475.9 443.2L475.7 427.4L475.1 411.5L474.0 395.1L472.4 378.1L470.5 360.2L466.1 342.4L455.4 328.1L443.4 314.9L430.2 303.0L415.9 292.4L400.5 283.2L384.4 275.6L367.6 269.6L350.3 265.3L332.6 262.7L314.8 261.8L296.9 262.7L279.2 265.3L261.9 269.6L245.1 275.6L229.0 283.2L213.6 292.4L199.3 303.0L186.1 314.9L174.1 328.1L163.4 342.4L159.0 360.2L157.1 378.1L155.5 395.1L154.4 411.5L153.8 427.4L153.6 443.2L153.8 459.1L154.4 475.0L155.5 491.4L157.1 508.4L159.0 526.3L163.4 544.1L174.1 558.4L186.1 571.6L199.3 583.5L213.6 594.1L229.0 603.3L245.1 610.9L261.9 616.9L279.2 621.2L296.9 623.8L314.7 624.7L332.6 623.8L350.3 621.2L367.6 616.9L384.4 610.9L400.5 603.3L415.9 594.1L430.2 583.5L443.4 571.6L455.4 558.4L466.1 544.1L470.5 526.3L472.4 508.4L474.0 491.4L475.1 475.0L475.7 459.1Z" fill="#00b4b4"/>
<path d="M475.2 443.2L475.0 427.5L474.4 411.6L473.2 395.3L471.7 378.4L469.7 360.6L466.1 342.4L455.4 328.1L443.4 314.9L430.2 303.0L415.9 292.4L400.5 283.2L384.4 275.6L367.6 269.6L350.3 265.3L332.6 262.7L314.8 261.8L296.9 262.7L279.2 265.3L261.9 269.6L245.1 275.6L229.0 283.2L213.6 292.4L199.3 303.0L186.1 314.9L174.1 328.1L163.4 342.4L159.8 360.6L157.8 378.4L156.3 395.3L155.1 411.6L154.5 427.5L154.3 443.2L154.5 459.0L155.1 474.9L156.3 491.2L157.8 508.1L159.8 525.9L163.4 544.1L174.1 558.4L186.1 571.6L199.3 583.5L213.6 594.1L229.0 603.3L245.1 610.9L261.9 616.9L279.2 621.2L296.9 623.8L314.7 624.7L332.6 623.8L350.3 621.2L367.6 616.9L384.4 610.9L400.5 603.3L415.9 594.1L430.2 583.5L443.4 571.6L455.4 558.4L466.1 544.1L469.7 525.9L471.7 508.1L473.2 491.2L474.4 474.9L475.0 459.0Z" fill="#00b7b1"/>
<path d="M474.5 443.2L474.3 427.6L473.6 411.7L472.5 395.5L471.0 378.7L469.0 361.0L466.1 342.4L455.4 328.1L443.4 314.9L430.2 303.0L415.9 292.4L400.5 283.2L384.4 275.6L367.6 269.6L350.3 265.3L332.6 262.7L314.8 261.8L296.9 262.7L279.2 265.3L261.9 269.6L245.1 275.6L229.0 283.2L213.6 292.4L199.3 303.0L186.1 314.9L174.1 328.1L163.4 342.4L160.5 361.0L158.5 378.7L157.0 395.5L155.9 411.7L155.2 427.6L155.0 443.2L155.2 458.9L155.9 474.8L157.0 491.0L158.5 507.8L160.5 525.5L163.4 544.1L174.1 558.4L186.1 571.6L199.3 583.5L213.6 594.1L229.0 603.3L245.1 610.9L261.9 616.9L279.2 621.2L296.9 623.8L314.7 624.7L332.6 623.8L350.3 621.2L367.6 616.9L384.4 610.9L400.5 603.3L415.9 594.1L430.2 583.5L443.4 571.6L455.4 558.4L466.1 544.1L469.0 525.5L471.0 507.8L472.5 491.0L473.6 474.8L474.3 458.9Z" fill="#00bbad"/>
<path d="M473.8 443.2L473.6 427.6L472.9 411.9L471.8 395.7L470.2 379.0L468.2 361.4L466.0 342.5L455.4 328.1L443.4 314.9L430.2 303.0L415.9 292.4L400.5 283.2L384.4 275.6L367.6 269.6L350.3 265.3L332.6 262.7L314.8 261.8L296.9 262.7L279.2 265.3L261.9 269.6L245.1 275.6L229.0 283.2L213.6 292.4L199.3 303.0L186.1 314.9L174.1 328.1L163.5 342.5L161.3 361.4L159.3 379.0L157.7 395.7L156.6 411.9L155.9 427.6L155.7 443.2L155.9 458.9L156.6 474.6L157.7 490.8L159.3 507.5L161.3 525.1L163.5 544.0L174.1 558.4L186.1 571.6L199.3 583.5L213.6 594.1L229.0 603.3L245.1 610.9L261.9 616.9L279.2 621.2L296.9 623.8L314.7 624.7L332.6 623.8L350.3 621.2L367.6 616.9L384.4 610.9L400.5 603.3L415.9 594.1L430.2 583.5L443.4 571.6L455.4 558.4L466.0 544.0L468.2 525.1L470.2 507.5L471.8 490.8L472.9 474.6L473.6 458.9Z" fill="#00bfa9"/>
<path d="M473.1 443.2L472.9 427.7L472.2 412.0L471.1 396.0L469.5 379.3L467.5 361.8L465.2 343.0L455.4 328.1L443.4 314.9L430.2 303.0L415.9 292.4L400.5 283.2L384.4 275.6L367.6 269.6L350.3 265.3L332.6 262.7L314.8 261.8L296.9 262.7L279.2 265.3L261.9 269.6L245.1 275.6L229.0 283.2L213.6 292.4L199.3 303.0L186.1 314.9L174.1 328.1L164.3 343.0L162.0 361.8L160.0 379.3L158.4 396.0L157.3 412.0L156.6 427.7L156.4 443.2L156.6 458.8L157.3 474.5L158.4 490.5L160.0 507.2L162.0 524.7L164.3 543.5L174.1 558.4L186.1 571.6L199.3 583.5L213.6 594.1L229.0 603.3L245.1 610.9L261.9 616.9L279.2 621.2L296.9 623.8L314.7 624.7L332.6 623.8L350.3 621.2L367.6 616.9L384.4 610.9L400.5 603.3L415.9 594.1L430.2 583.5L443.4 571.6L455.4 558.4L465.2 543.5L467.5 524.7L469.5 507.2L471.1 490.5L472.2 474.5L472.9 458.8Z" fill="#00c1a5"/>
<path d="M472.4 443.2L472.2 427.8L471.5 412.2L470.4 396.2L468.8 379.6L466.8 362.2L464.5 343.5L455.4 328.1L443.4 314.9L430.2 303.0L415.9 292.4L400.5 283.2L384.4 275.6L367.6 269.6L350.3 265.3L332.6 262.7L314.8 261.8L296.9 262.7L279.2 265.3L261.9 269.6L245.1 275.6L229.0 283.2L213.6 292.4L199.3 303.0L186.1 314.9L174.1 328.1L165.0 343.5L162.7 362.2L160.7 379.6L159.1 396.2L158.0 412.2L157.3 427.8L157.1 443.2L157.3 458.7L158.0 474.3L159.1 490.3L160.7 506.9L162.7 524.3L165.0 543.0L174.1 558.4L186.1 571.6L199.3 583.5L213.6 594.1L229.0 603.3L245.1 610.9L261.9 616.9L279.2 621.2L296.9 623.8L314.7 624.7L332.6 623.8L350.3 621.2L367.6 616.9L384.4 610.9L400.5 603.3L415.9 594.1L430.2 583.5L443.4 571.6L455.4 558.4L464.5 543.0L466.8 524.3L468.8 506.9L470.4 490.3L471.5 474.3L472.2 458.7Z" fill="#00c2a1"/>
<path d="M471.7 443.2L471.4 427.9L470.8 412.3L469.6 396.4L468.1 379.9L466.0 362.6L463.7 344.0L455.4 328.1L443.4 314.9L430.2 303.0L415.9 292.4L400.5 283.2L384.4 275.6L367.6 269.6L350.3 265.3L332.6 262.7L314.8 261.8L296.9 262.7L279.2 265.3L261.9 269.6L245.1 275.6L229.0 283.2L213.6 292.4L199.3 303.0L186.1 314.9L174.1 328.1L165.8 344.0L163.5 362.6L161.4 379.9L159.9 396.4L158.7 412.3L158.1 427.9L157.8 443.2L158.1 458.6L158.7 474.2L159.9 490.1L161.4 506.6L163.5 523.9L165.8 542.5L174.1 558.4L186.1 571.6L199.3 583.5L213.6 594.1L229.0 603.3L245.1 610.9L261.9 616.9L279.2 621.2L296.9 623.8L314.7 624.7L332.6 623.8L350.3 621.2L367.6 616.9L384.4 610.9L400.5 603.3L415.9 594.1L430.2 583.5L443.4 571.6L455.4 558.4L463.7 542.5L466.0 523.9L468.1 506.6L469.6 490.1L470.8 474.2L471.4 458.6Z" fill="#00c49c"/>
<path d="M470.9 443.2L470.7 427.9L470.0 412.4L468.9 396.6L467.3 380.2L465.3 363.0L462.9 344.5L455.4 328.1L443.4 314.9L430.2 303.0L415.9 292.4L400.5 283.2L384.4 275.6L367.6 269.6L350.3 265.3L332.6 262.7L314.8 261.8L296.9 262.7L279.2 265.3L261.9 269.6L245.1 275.6L229.0 283.2L213.6 292.4L199.3 303.0L186.1 314.9L174.1 328.1L166.6 344.5L164.2 363.0L162.2 380.2L160.6 396.6L159.5 412.4L158.8 427.9L158.6 443.2L158.8 458.6L159.5 474.1L160.6 489.9L162.2 506.3L164.2 523.5L166.6 542.0L174.1 558.4L186.1 571.6L199.3 583.5L213.6 594.1L229.0 603.3L245.1 610.9L261.9 616.9L279.2 621.2L296.9 623.8L314.7 624.7L332.6 623.8L350.3 621.2L367.6 616.9L384.4 610.9L400.5 603.3L415.9 594.1L430.2 583.5L443.4 571.6L455.4 558.4L462.9 542.0L465.3 523.5L467.3 506.3L468.9 489.9L470.0 474.1L470.7 458.6Z" fill="#00c598"/>
<path d="M470.2 443.2L470.0 428.0L469.3 412.6L468.2 396.8L466.6 380.5L464.5 363.4L462.1 345.1L455.4 328.1L443.4 314.9L430.2 303.0L415.9 292.4L400.5 283.2L384.4 275.6L367.6 269.6L350.3 265.3L332.6 262.7L314.8 261.8L296.9 262.7L279.2 265.3L261.9 269.6L245.1 275.6L229.0 283.2L213.6 292.4L199.3 303.0L186.1 314.9L174.1 328.1L167.4 345.1L165.0 363.4L162.9 380.5L161.3 396.8L160.2 412.6L159.5 428.0L159.3 443.2L159.5 458.5L160.2 473.9L161.3 489.7L162.9 506.0L165.0 523.1L167.4 541.4L174.1 558.4L186.1 571.6L199.3 583.5L213.6 594.1L229.0 603.3L245.1 610.9L261.9 616.9L279.2 621.2L296.9 623.8L314.7 624.7L332.6 623.8L350.3 621.2L367.6 616.9L384.4 610.9L400.5 603.3L415.9 594.1L430.2 583.5L443.4 571.6L455.4 558.4L462.1 541.4L464.5 523.1L466.6 506.0L468.2 489.7L469.3 473.9L470.0 458.5Z" fill="#00c794"/>
<path d="M469.5 443.2L469.3 428.1L468.6 412.7L467.5 397.1L465.9 380.8L463.8 363.8L461.3 345.6L455.4 328.1L443.4 314.9L430.2 303.0L415.9 292.4L400.5 283.2L384.4 275.6L367.6 269.6L350.3 265.3L332.6 262.7L314.8 261.8L296.9 262.7L279.2 265.3L261.9 269.6L245.1 275.6L229.0 283.2L213.6 292.4L199.3 303.0L186.1 314.9L174.1 328.1L168.2 345.6L165.7 363.8L163.6 380.8L162.0 397.1L160.9 412.7L160.2 428.1L160.0 443.2L160.2 458.4L160.9 473.8L162.0 489.4L163.6 505.7L165.7 522.7L168.2 540.9L174.1 558.4L186.1 571.6L199.3 583.5L213.6 594.1L229.0 603.3L245.1 610.9L261.9 616.9L279.2 621.2L296.9 623.8L314.7 624.7L332.6 623.8L350.3 621.2L367.6 616.9L384.4 610.9L400.5 603.3L415.9 594.1L430.2 583.5L443.4 571.6L455.4 558.4L461.3 540.9L463.8 522.7L465.9 505.7L467.5 489.4L468.6 473.8L469.3 458.4Z" fill="#00c890"/>
<path d="M468.8 443.2L468.5 428.1L467.9 412.9L466.7 397.3L465.1 381.1L463.0 364.2L460.6 346.1L455.4 328.1L443.4 314.9L430.2 303.0L415.9 292.4L400.5 283.2L384.4 275.6L367.6 269.6L350.3 265.3L332.6 262.7L314.8 261.8L296.9 262.7L279.2 265.3L261.9 269.6L245.1 275.6L229.0 283.2L213.6 292.4L199.3 303.0L186.1 314.9L174.1 328.1L168.9 346.1L166.5 364.2L164.4 381.1L162.8 397.3L161.6 412.9L161.0 428.1L160.7 443.2L161.0 458.4L161.6 473.6L162.8 489.2L164.4 505.4L166.5 522.3L168.9 540.4L174.1 558.4L186.1 571.6L199.3 583.5L213.6 594.1L229.0 603.3L245.1 610.9L261.9 616.9L279.2 621.2L296.9 623.8L314.7 624.7L332.6 623.8L350.3 621.2L367.6 616.9L384.4 610.9L400.5 603.3L415.9 594.1L430.2 583.5L443.4 571.6L455.4 558.4L460.6 540.4L463.0 522.3L465.1 505.4L466.7 489.2L467.9 473.6L468.5 458.4Z" fill="#00cc8b"/>
<path d="M468.0 443.2L467.8 428.2L467.1 413.0L466.0 397.5L464.4 381.4L462.3 364.6L459.8 346.6L455.4 328.1L443.4 314.9L430.2 303.0L415.9 292.4L400.5 283.2L384.4 275.6L367.6 269.6L350.3 265.3L332.6 262.7L314.8 261.8L296.9 262.7L279.2 265.3L261.9 269.6L245.1 275.6L229.0 283.2L213.6 292.4L199.3 303.0L186.1 314.9L174.1 328.1L169.7 346.6L167.2 364.6L165.1 381.4L163.5 397.5L162.4 413.0L161.7 428.2L161.5 443.2L161.7 458.3L162.4 473.5L163.5 489.0L165.1 505.1L167.2 521.9L169.7 539.9L174.1 558.4L186.1 571.6L199.3 583.5L213.6 594.1L229.0 603.3L245.1 610.9L261.9 616.9L279.2 621.2L296.9 623.8L314.7 624.7L332.6 623.8L350.3 621.2L367.6 616.9L384.4 610.9L400.5 603.3L415.9 594.1L430.2 583.5L443.4 571.6L455.4 558.4L459.8 539.9L462.3 521.9L464.4 505.1L466.0 489.0L467.1 473.5L467.8 458.3Z" fill="#00cf86"/>
<path d="M467.3 443.2L467.1 428.3L466.4 413.2L465.3 397.7L463.6 381.7L461.5 365.0L459.0 347.1L455.4 328.1L443.4 314.9L430.2 303.0L415.9 292.4L400.5 283.2L384.4 275.6L367.6 269.6L350.3 265.3L332.6 262.7L314.8 261.8L296.9 262.7L279.2 265.3L261.9 269.6L245.1 275.6L229.0 283.2L213.6 292.4L199.3 303.0L186.1 314.9L174.1 328.1L170.5 347.1L168.0 365.0L165.9 381.7L164.2 397.7L163.1 413.2L162.4 428.3L162.2 443.2L162.4 458.2L163.1 473.3L164.2 488.8L165.9 504.8L168.0 521.5L170.5 539.4L174.1 558.4L186.1 571.6L199.3 583.5L213.6 594.1L229.0 603.3L245.1 610.9L261.9 616.9L279.2 621.2L296.9 623.8L314.7 624.7L332.6 623.8L350.3 621.2L367.6 616.9L384.4 610.9L400.5 603.3L415.9 594.1L430.2 583.5L443.4 571.6L455.4 558.4L459.0 539.4L461.5 521.5L463.6 504.8L465.3 488.8L466.4 473.3L467.1 458.2Z" fill="#00d382"/>
<path d="M466.6 443.2L466.3 428.4L465.7 413.3L464.5 397.9L462.9 382.1L460.8 365.4L458.2 347.6L455.4 328.1L443.4 314.9L430.2 303.0L415.9 292.4L400.5 283.2L384.4 275.6L367.6 269.6L350.3 265.3L332.6 262.7L314.8 261.8L296.9 262.7L279.2 265.3L261.9 269.6L245.1 275.6L229.0 283.2L213.6 292.4L199.3 303.0L186.1 314.9L174.1 328.1L171.3 347.6L168.7 365.4L166.6 382.1L165.0 397.9L163.8 413.3L163.2 428.4L162.9 443.2L163.2 458.1L163.8 473.2L165.0 488.6L166.6 504.4L168.7 521.1L171.3 538.9L174.1 558.4L186.1 571.6L199.3 583.5L213.6 594.1L229.0 603.3L245.1 610.9L261.9 616.9L279.2 621.2L296.9 623.8L314.7 624.7L332.6 623.8L350.3 621.2L367.6 616.9L384.4 610.9L400.5 603.3L415.9 594.1L430.2 583.5L443.4 571.6L455.4 558.4L458.2 538.9L460.8 521.1L462.9 504.4L464.5 488.6L465.7 473.2L466.3 458.1Z" fill="#00d67d"/>
<path d="M465.8 443.2L465.6 428.4L464.9 413.5L463.8 398.2L462.2 382.4L460.0 365.8L457.5 348.2L454.7 328.7L443.4 314.9L430.2 303.0L415.9 292.4L400.5 283.2L384.4 275.6L367.6 269.6L350.3 265.3L332.6 262.7L314.8 261.8L296.9 262.7L279.2 265.3L261.9 269.6L245.1 275.6L229.0 283.2L213.6 292.4L199.3 303.0L186.1 314.9L174.8 328.7L172.0 348.2L169.5 365.8L167.3 382.4L165.7 398.2L164.6 413.5L163.9 428.4L163.7 443.2L163.9 458.1L164.6 473.0L165.7 488.3L167.3 504.1L169.5 520.7L172.0 538.3L174.8 557.8L186.1 571.6L199.3 583.5L213.6 594.1L229.0 603.3L245.1 610.9L261.9 616.9L279.2 621.2L296.9 623.8L314.7 624.7L332.6 623.8L350.3 621.2L367.6 616.9L384.4 610.9L400.5 603.3L415.9 594.1L430.2 583.5L443.4 571.6L454.7 557.8L457.5 538.3L460.0 520.7L462.2 504.1L463.8 488.3L464.9 473.0L465.6 458.1Z" fill="#00da78"/>
<path d="M465.1 443.2L464.9 428.5L464.2 413.6L463.0 398.4L461.4 382.7L459.3 366.2L456.7 348.7L453.9 329.4L443.4 314.9L430.2 303.0L415.9 292.4L400.5 283.2L384.4 275.6L367.6 269.6L350.3 265.3L332.6 262.7L314.8 261.8L296.9 262.7L279.2 265.3L261.9 269.6L245.1 275.6L229.0 283.2L213.6 292.4L199.3 303.0L186.1 314.9L175.6 329.4L172.8 348.7L170.2 366.2L168.1 382.7L166.5 398.4L165.3 413.6L164.6 428.5L164.4 443.2L164.6 458.0L165.3 472.9L166.5 488.1L168.1 503.8L170.2 520.3L172.8 537.8L175.6 557.1L186.1 571.6L199.3 583.5L213.6 594.1L229.0 603.3L245.1 610.9L261.9 616.9L279.2 621.2L296.9 623.8L314.7 624.7L332.6 623.8L350.3 621.2L367.6 616.9L384.4 610.9L400.5 603.3L415.9 594.1L430.2 583.5L443.4 571.6L453.9 557.1L456.7 537.8L459.3 520.3L461.4 503.8L463.0 488.1L464.2 472.9L464.9 458.0Z" fill="#00de73"/>
<path d="M464.3 443.2L464.1 428.6L463.4 413.8L462.3 398.6L460.7 383.0L458.5 366.6L455.9 349.2L453.0 330.1L443.4 314.9L430.2 303.0L415.9 292.4L400.5 283.2L384.4 275.6L367.6 269.6L350.3 265.3L332.6 262.7L314.8 261.8L296.9 262.7L279.2 265.3L261.9 269.6L245.1 275.6L229.0 283.2L213.6 292.4L199.3 303.0L186.1 314.9L176.5 330.1L173.6 349.2L171.0 366.6L168.8 383.0L167.2 398.6L166.1 413.8L165.4 428.6L165.2 443.2L165.4 457.9L166.1 472.7L167.2 487.9L168.8 503.5L171.0 519.9L173.6 537.3L176.5 556.4L186.1 571.6L199.3 583.5L213.6 594.1L229.0 603.3L245.1 610.9L261.9 616.9L279.2 621.2L296.9 623.8L314.7 624.7L332.6 623.8L350.3 621.2L367.6 616.9L384.4 610.9L400.5 603.3L415.9 594.1L430.2 583.5L443.4 571.6L453.0 556.4L455.9 537.3L458.5 519.9L460.7 503.5L462.3 487.9L463.4 472.7L464.1 457.9Z" fill="#01e06e"/>
<path d="M463.6 443.2L463.4 428.7L462.7 413.9L461.6 398.8L459.9 383.3L457.8 367.0L455.1 349.7L452.2 330.8L443.4 314.9L430.2 303.0L415.9 292.4L400.5 283.2L384.4 275.6L367.6 269.6L350.3 265.3L332.6 262.7L314.8 261.8L296.9 262.7L279.2 265.3L261.9 269.6L245.1 275.6L229.0 283.2L213.6 292.4L199.3 303.0L186.1 314.9L177.3 330.8L174.4 349.7L171.7 367.0L169.6 383.3L167.9 398.8L166.8 413.9L166.1 428.7L165.9 443.2L166.1 457.8L166.8 472.6L167.9 487.7L169.6 503.2L171.7 519.5L174.4 536.8L177.3 555.7L186.1 571.6L199.3 583.5L213.6 594.1L229.0 603.3L245.1 610.9L261.9 616.9L279.2 621.2L296.9 623.8L314.7 624.7L332.6 623.8L350.3 621.2L367.6 616.9L384.4 610.9L400.5 603.3L415.9 594.1L430.2 583.5L443.4 571.6L452.2 555.7L455.1 536.8L457.8 519.5L459.9 503.2L461.6 487.7L462.7 472.6L463.4 457.8Z" fill="#05e269"/>
<path d="M462.8 443.2L462.6 428.7L461.9 414.1L460.8 399.1L459.2 383.6L457.0 367.4L454.4 350.2L451.4 331.4L443.4 314.9L430.2 303.0L415.9 292.4L400.5 283.2L384.4 275.6L367.6 269.6L350.3 265.3L332.6 262.7L314.8 261.8L296.9 262.7L279.2 265.3L261.9 269.6L245.1 275.6L229.0 283.2L213.6 292.4L199.3 303.0L186.1 314.9L178.1 331.4L175.1 350.2L172.5 367.4L170.3 383.6L168.7 399.1L167.6 414.1L166.9 428.7L166.7 443.2L166.9 457.8L167.6 472.4L168.7 487.4L170.3 502.9L172.5 519.1L175.1 536.3L178.1 555.1L186.1 571.6L199.3 583.5L213.6 594.1L229.0 603.3L245.1 610.9L261.9 616.9L279.2 621.2L296.9 623.8L314.7 624.7L332.6 623.8L350.3 621.2L367.6 616.9L384.4 610.9L400.5 603.3L415.9 594.1L430.2 583.5L443.4 571.6L451.4 555.1L454.4 536.3L457.0 519.1L459.2 502.9L460.8 487.4L461.9 472.4L462.6 457.8Z" fill="#09e363"/>
<path d="M462.1 443.2L461.9 428.8L461.2 414.2L460.1 399.3L458.4 383.9L456.3 367.8L453.6 350.7L450.6 332.1L443.4 314.9L430.2 303.0L415.9 292.4L400.5 283.2L384.4 275.6L367.6 269.6L350.3 265.3L332.6 262.7L314.8 261.8L296.9 262.7L279.2 265.3L261.9 269.6L245.1 275.6L229.0 283.2L213.6 292.4L199.3 303.0L186.1 314.9L178.9 332.1L175.9 350.7L173.2 367.8L171.1 383.9L169.4 399.3L168.3 414.2L167.6 428.8L167.4 443.2L167.6 457.7L168.3 472.3L169.4 487.2L171.1 502.6L173.2 518.7L175.9 535.8L178.9 554.4L186.1 571.6L199.3 583.5L213.6 594.1L229.0 603.3L245.1 610.9L261.9 616.9L279.2 621.2L296.9 623.8L314.7 624.7L332.6 623.8L350.3 621.2L367.6 616.9L384.4 610.9L400.5 603.3L415.9 594.1L430.2 583.5L443.4 571.6L450.6 554.4L453.6 535.8L456.3 518.7L458.4 502.6L460.1 487.2L461.2 472.3L461.9 457.7Z" fill="#0ce55d"/>
<path d="M461.3 443.2L461.1 428.9L460.4 414.4L459.3 399.5L457.7 384.2L455.5 368.2L452.8 351.3L449.7 332.8L443.4 314.9L430.2 303.0L415.9 292.4L400.5 283.2L384.4 275.6L367.6 269.6L350.3 265.3L332.6 262.7L314.8 261.8L296.9 262.7L279.2 265.3L261.9 269.6L245.1 275.6L229.0 283.2L213.6 292.4L199.3 303.0L186.1 314.9L179.8 332.8L176.7 351.3L174.0 368.2L171.8 384.2L170.2 399.5L169.1 414.4L168.4 428.9L168.2 443.2L168.4 457.6L169.1 472.1L170.2 487.0L171.8 502.3L174.0 518.3L176.7 535.2L179.8 553.7L186.1 571.6L199.3 583.5L213.6 594.1L229.0 603.3L245.1 610.9L261.9 616.9L279.2 621.2L296.9 623.8L314.7 624.7L332.6 623.8L350.3 621.2L367.6 616.9L384.4 610.9L400.5 603.3L415.9 594.1L430.2 583.5L443.4 571.6L449.7 553.7L452.8 535.2L455.5 518.3L457.7 502.3L459.3 487.0L460.4 472.1L461.1 457.6Z" fill="#10e658"/>
<path d="M460.6 443.2L460.3 429.0L459.7 414.5L458.5 399.8L456.9 384.5L454.7 368.6L452.0 351.8L448.9 333.4L443.4 314.9L430.2 303.0L415.9 292.4L400.5 283.2L384.4 275.6L367.6 269.6L350.3 265.3L332.6 262.7L314.8 261.8L296.9 262.7L279.2 265.3L261.9 269.6L245.1 275.6L229.0 283.2L213.6 292.4L199.3 303.0L186.1 314.9L180.6 333.4L177.5 351.8L174.8 368.6L172.6 384.5L171.0 399.8L169.8 414.5L169.2 429.0L168.9 443.2L169.2 457.5L169.8 472.0L171.0 486.7L172.6 502.0L174.8 517.9L177.5 534.7L180.6 553.1L186.1 571.6L199.3 583.5L213.6 594.1L229.0 603.3L245.1 610.9L261.9 616.9L279.2 621.2L296.9 623.8L314.7 624.7L332.6 623.8L350.3 621.2L367.6 616.9L384.4 610.9L400.5 603.3L415.9 594.1L430.2 583.5L443.4 571.6L448.9 553.1L452.0 534.7L454.7 517.9L456.9 502.0L458.5 486.7L459.7 472.0L460.3 457.5Z" fill="#14e752"/>
<path d="M459.8 443.2L459.6 429.0L458.9 414.7L457.8 400.0L456.2 384.8L454.0 369.0L451.3 352.3L448.1 334.1L443.4 314.9L430.2 303.0L415.9 292.4L400.5 283.2L384.4 275.6L367.6 269.6L350.3 265.3L332.6 262.7L314.8 261.8L296.9 262.7L279.2 265.3L261.9 269.6L245.1 275.6L229.0 283.2L213.6 292.4L199.3 303.0L186.1 314.9L181.4 334.1L178.2 352.3L175.5 369.0L173.3 384.8L171.7 400.0L170.6 414.7L169.9 429.0L169.7 443.2L169.9 457.5L170.6 471.8L171.7 486.5L173.3 501.7L175.5 517.5L178.2 534.2L181.4 552.4L186.1 571.6L199.3 583.5L213.6 594.1L229.0 603.3L245.1 610.9L261.9 616.9L279.2 621.2L296.9 623.8L314.7 624.7L332.6 623.8L350.3 621.2L367.6 616.9L384.4 610.9L400.5 603.3L415.9 594.1L430.2 583.5L443.4 571.6L448.1 552.4L451.3 534.2L454.0 517.5L456.2 501.7L457.8 486.5L458.9 471.8L459.6 457.5Z" fill="#18e94d"/>
<path d="M459.0 443.2L458.8 429.1L458.2 414.8L457.0 400.2L455.4 385.2L453.2 369.4L450.5 352.8L447.3 334.8L443.4 314.9L430.2 303.0L415.9 292.4L400.5 283.2L384.4 275.6L367.6 269.6L350.3 265.3L332.6 262.7L314.8 261.8L296.9 262.7L279.2 265.3L261.9 269.6L245.1 275.6L229.0 283.2L213.6 292.4L199.3 303.0L186.1 314.9L182.2 334.8L179.0 352.8L176.3 369.4L174.1 385.2L172.5 400.2L171.3 414.8L170.7 429.1L170.5 443.2L170.7 457.4L171.3 471.7L172.5 486.3L174.1 501.3L176.3 517.1L179.0 533.7L182.2 551.7L186.1 571.6L199.3 583.5L213.6 594.1L229.0 603.3L245.1 610.9L261.9 616.9L279.2 621.2L296.9 623.8L314.7 624.7L332.6 623.8L350.3 621.2L367.6 616.9L384.4 610.9L400.5 603.3L415.9 594.1L430.2 583.5L443.4 571.6L447.3 551.7L450.5 533.7L453.2 517.1L455.4 501.3L457.0 486.3L458.2 471.7L458.8 457.4Z" fill="#1bea47"/>
<path d="M458.3 443.2L458.1 429.2L457.4 415.0L456.3 400.4L454.6 385.5L452.5 369.9L449.7 353.3L446.5 335.4L443.2 315.2L430.2 303.0L415.9 292.4L400.5 283.2L384.4 275.6L367.6 269.6L350.3 265.3L332.6 262.7L314.8 261.8L296.9 262.7L279.2 265.3L261.9 269.6L245.1 275.6L229.0 283.2L213.6 292.4L199.3 303.0L186.3 315.2L183.0 335.4L179.8 353.3L177.0 369.9L174.9 385.5L173.2 400.4L172.1 415.0L171.4 429.2L171.2 443.2L171.4 457.3L172.1 471.5L173.2 486.1L174.9 501.0L177.0 516.6L179.8 533.2L183.0 551.1L186.3 571.3L199.3 583.5L213.6 594.1L229.0 603.3L245.1 610.9L261.9 616.9L279.2 621.2L296.9 623.8L314.7 624.7L332.6 623.8L350.3 621.2L367.6 616.9L384.4 610.9L400.5 603.3L415.9 594.1L430.2 583.5L443.2 571.3L446.5 551.1L449.7 533.2L452.5 516.6L454.6 501.0L456.3 486.1L457.4 471.5L458.1 457.3Z" fill="#1fec41"/>
<path d="M457.5 443.2L457.3 429.3L456.6 415.1L455.5 400.7L453.9 385.8L451.7 370.3L448.9 353.8L445.7 336.1L442.3 316.1L430.2 303.0L415.9 292.4L400.5 283.2L384.4 275.6L367.6 269.6L350.3 265.3L332.6 262.7L314.8 261.8L296.9 262.7L279.2 265.3L261.9 269.6L245.1 275.6L229.0 283.2L213.6 292.4L199.3 303.0L187.2 316.1L183.8 336.1L180.6 353.8L177.8 370.3L175.6 385.8L174.0 400.7L172.9 415.1L172.2 429.3L172.0 443.2L172.2 457.2L172.9 471.4L174.0 485.8L175.6 500.7L177.8 516.2L180.6 532.7L183.8 550.4L187.2 570.4L199.3 583.5L213.6 594.1L229.0 603.3L245.1 610.9L261.9 616.9L279.2 621.2L296.9 623.8L314.7 624.7L332.6 623.8L350.3 621.2L367.6 616.9L384.4 610.9L400.5 603.3L415.9 594.1L430.2 583.5L442.3 570.4L445.7 550.4L448.9 532.7L451.7 516.2L453.9 500.7L455.5 485.8L456.6 471.4L457.3 457.2Z" fill="#23ec3a"/>
<path d="M456.7 443.2L456.5 429.3L455.8 415.3L454.7 400.9L453.1 386.1L450.9 370.7L448.2 354.4L444.9 336.8L441.4 317.0L430.2 303.0L415.9 292.4L400.5 283.2L384.4 275.6L367.6 269.6L350.3 265.3L332.6 262.7L314.8 261.8L296.9 262.7L279.2 265.3L261.9 269.6L245.1 275.6L229.0 283.2L213.6 292.4L199.3 303.0L188.1 317.0L184.6 336.8L181.3 354.4L178.6 370.7L176.4 386.1L174.8 400.9L173.7 415.3L173.0 429.3L172.8 443.2L173.0 457.2L173.7 471.2L174.8 485.6L176.4 500.4L178.6 515.8L181.3 532.1L184.6 549.7L188.1 569.5L199.3 583.5L213.6 594.1L229.0 603.3L245.1 610.9L261.9 616.9L279.2 621.2L296.9 623.8L314.7 624.7L332.6 623.8L350.3 621.2L367.6 616.9L384.4 610.9L400.5 603.3L415.9 594.1L430.2 583.5L441.4 569.5L444.9 549.7L448.2 532.1L450.9 515.8L453.1 500.4L454.7 485.6L455.8 471.2L456.5 457.2Z" fill="#27ed33"/>
<path d="M455.9 443.2L455.7 429.4L455.1 415.4L454.0 401.1L452.3 386.4L450.1 371.1L447.4 354.9L444.1 337.4L440.5 317.9L430.2 303.0L415.9 292.4L400.5 283.2L384.4 275.6L367.6 269.6L350.3 265.3L332.6 262.7L314.8 261.8L296.9 262.7L279.2 265.3L261.9 269.6L245.1 275.6L229.0 283.2L213.6 292.4L199.3 303.0L189.0 317.9L185.4 337.4L182.1 354.9L179.4 371.1L177.2 386.4L175.5 401.1L174.4 415.4L173.8 429.4L173.6 443.2L173.8 457.1L174.4 471.1L175.5 485.4L177.2 500.1L179.4 515.4L182.1 531.6L185.4 549.1L189.0 568.6L199.3 583.5L213.6 594.1L229.0 603.3L245.1 610.9L261.9 616.9L279.2 621.2L296.9 623.8L314.7 624.7L332.6 623.8L350.3 621.2L367.6 616.9L384.4 610.9L400.5 603.3L415.9 594.1L430.2 583.5L440.5 568.6L444.1 549.1L447.4 531.6L450.1 515.4L452.3 500.1L454.0 485.4L455.1 471.1L455.7 457.1Z" fill="#2aed2b"/>
<path d="M455.2 443.2L455.0 429.5L454.3 415.6L453.2 401.4L451.5 386.7L449.4 371.5L446.6 355.4L443.3 338.1L439.6 318.8L430.2 303.0L415.9 292.4L400.5 283.2L384.4 275.6L367.6 269.6L350.3 265.3L332.6 262.7L314.8 261.8L296.9 262.7L279.2 265.3L261.9 269.6L245.1 275.6L229.0 283.2L213.6 292.4L199.3 303.0L189.9 318.8L186.2 338.1L182.9 355.4L180.1 371.5L178.0 386.7L176.3 401.4L175.2 415.6L174.5 429.5L174.3 443.2L174.5 457.0L175.2 470.9L176.3 485.1L178.0 499.8L180.1 515.0L182.9 531.1L186.2 548.4L189.9 567.7L199.3 583.5L213.6 594.1L229.0 603.3L245.1 610.9L261.9 616.9L279.2 621.2L296.9 623.8L314.7 624.7L332.6 623.8L350.3 621.2L367.6 616.9L384.4 610.9L400.5 603.3L415.9 594.1L430.2 583.5L439.6 567.7L443.3 548.4L446.6 531.1L449.4 515.0L451.5 499.8L453.2 485.1L454.3 470.9L455.0 457.0Z" fill="#2eee24"/>
<path d="M454.4 443.2L454.2 429.6L453.5 415.7L452.4 401.6L450.8 387.1L448.6 371.9L445.8 355.9L442.5 338.7L438.7 319.6L430.2 303.0L415.9 292.4L400.5 283.2L384.4 275.6L367.6 269.6L350.3 265.3L332.6 262.7L314.8 261.8L296.9 262.7L279.2 265.3L261.9 269.6L245.1 275.6L229.0 283.2L213.6 292.4L199.3 303.0L190.8 319.6L187.0 338.7L183.7 355.9L180.9 371.9L178.7 387.1L177.1 401.6L176.0 415.7L175.3 429.6L175.1 443.2L175.3 456.9L176.0 470.8L177.1 484.9L178.7 499.4L180.9 514.6L183.7 530.6L187.0 547.8L190.8 566.9L199.3 583.5L213.6 594.1L229.0 603.3L245.1 610.9L261.9 616.9L279.2 621.2L296.9 623.8L314.7 624.7L332.6 623.8L350.3 621.2L367.6 616.9L384.4 610.9L400.5 603.3L415.9 594.1L430.2 583.5L438.7 566.9L442.5 547.8L445.8 530.6L448.6 514.6L450.8 499.4L452.4 484.9L453.5 470.8L454.2 456.9Z" fill="#32ee1c"/>
<path d="M453.6 443.2L453.4 429.6L452.7 415.9L451.6 401.8L450.0 387.4L447.8 372.3L445.0 356.4L441.7 339.4L437.9 320.5L430.2 303.0L415.9 292.4L400.5 283.2L384.4 275.6L367.6 269.6L350.3 265.3L332.6 262.7L314.8 261.8L296.9 262.7L279.2 265.3L261.9 269.6L245.1 275.6L229.0 283.2L213.6 292.4L199.3 303.0L191.6 320.5L187.8 339.4L184.5 356.4L181.7 372.3L179.5 387.4L177.9 401.8L176.8 415.9L176.1 429.6L175.9 443.2L176.1 456.9L176.8 470.6L177.9 484.7L179.5 499.1L181.7 514.2L184.5 530.1L187.8 547.1L191.6 566.0L199.3 583.5L213.6 594.1L229.0 603.3L245.1 610.9L261.9 616.9L279.2 621.2L296.9 623.8L314.7 624.7L332.6 623.8L350.3 621.2L367.6 616.9L384.4 610.9L400.5 603.3L415.9 594.1L430.2 583.5L437.9 566.0L441.7 547.1L445.0 530.1L447.8 514.2L450.0 499.1L451.6 484.7L452.7 470.6L453.4 456.9Z" fill="#36ef15"/>
<path d="M452.8 443.2L452.6 429.7L451.9 416.0L450.8 402.1L449.2 387.7L447.0 372.7L444.3 357.0L440.9 340.1L437.0 321.4L430.2 303.0L415.9 292.4L400.5 283.2L384.4 275.6L367.6 269.6L350.3 265.3L332.6 262.7L314.8 261.8L296.9 262.7L279.2 265.3L261.9 269.6L245.1 275.6L229.0 283.2L213.6 292.4L199.3 303.0L192.5 321.4L188.6 340.1L185.2 357.0L182.5 372.7L180.3 387.7L178.7 402.1L177.6 416.0L176.9 429.7L176.7 443.2L176.9 456.8L177.6 470.5L178.7 484.4L180.3 498.8L182.5 513.8L185.2 529.5L188.6 546.4L192.5 565.1L199.3 583.5L213.6 594.1L229.0 603.3L245.1 610.9L261.9 616.9L279.2 621.2L296.9 623.8L314.7 624.7L332.6 623.8L350.3 621.2L367.6 616.9L384.4 610.9L400.5 603.3L415.9 594.1L430.2 583.5L437.0 565.1L440.9 546.4L444.3 529.5L447.0 513.8L449.2 498.8L450.8 484.4L451.9 470.5L452.6 456.8Z" fill="#39ef0d"/>
<path d="M452.0 443.2L451.8 429.8L451.1 416.2L450.0 402.3L448.4 388.0L446.3 373.2L443.5 357.5L440.0 340.7L436.1 322.2L430.2 303.0L415.9 292.4L400.5 283.2L384.4 275.6L367.6 269.6L350.3 265.3L332.6 262.7L314.8 261.8L296.9 262.7L279.2 265.3L261.9 269.6L245.1 275.6L229.0 283.2L213.6 292.4L199.3 303.0L193.4 322.2L189.5 340.7L186.0 357.5L183.2 373.2L181.1 388.0L179.5 402.3L178.4 416.2L177.7 429.8L177.5 443.2L177.7 456.7L178.4 470.3L179.5 484.2L181.1 498.5L183.2 513.3L186.0 529.0L189.5 545.8L193.4 564.3L199.3 583.5L213.6 594.1L229.0 603.3L245.1 610.9L261.9 616.9L279.2 621.2L296.9 623.8L314.7 624.7L332.6 623.8L350.3 621.2L367.6 616.9L384.4 610.9L400.5 603.3L415.9 594.1L430.2 583.5L436.1 564.3L440.0 545.8L443.5 529.0L446.3 513.3L448.4 498.5L450.0 484.2L451.1 470.3L451.8 456.7Z" fill="#3df006"/>
<path d="M451.2 443.2L451.0 429.9L450.4 416.4L449.2 402.6L447.6 388.4L445.5 373.6L442.7 358.0L439.2 341.4L435.3 323.1L430.2 303.0L415.9 292.4L400.5 283.2L384.4 275.6L367.6 269.6L350.3 265.3L332.6 262.7L314.8 261.8L296.9 262.7L279.2 265.3L261.9 269.6L245.1 275.6L229.0 283.2L213.6 292.4L199.3 303.0L194.2 323.1L190.3 341.4L186.8 358.0L184.0 373.6L181.9 388.4L180.3 402.6L179.1 416.4L178.5 429.9L178.3 443.2L178.5 456.6L179.1 470.1L180.3 483.9L181.9 498.1L184.0 512.9L186.8 528.5L190.3 545.1L194.2 563.4L199.3 583.5L213.6 594.1L229.0 603.3L245.1 610.9L261.9 616.9L279.2 621.2L296.9 623.8L314.7 624.7L332.6 623.8L350.3 621.2L367.6 616.9L384.4 610.9L400.5 603.3L415.9 594.1L430.2 583.5L435.3 563.4L439.2 545.1L442.7 528.5L445.5 512.9L447.6 498.1L449.2 483.9L450.4 470.1L451.0 456.6Z" fill="#41f000"/>
<path d="M450.4 443.2L450.2 429.9L449.6 416.5L448.5 402.8L446.8 388.7L444.7 374.0L441.9 358.5L438.4 342.0L434.4 323.9L430.2 303.0L415.9 292.4L400.5 283.2L384.4 275.6L367.6 269.6L350.3 265.3L332.6 262.7L314.8 261.8L296.9 262.7L279.2 265.3L261.9 269.6L245.1 275.6L229.0 283.2L213.6 292.4L199.3 303.0L195.1 323.9L191.1 342.0L187.6 358.5L184.8 374.0L182.7 388.7L181.0 402.8L179.9 416.5L179.3 429.9L179.1 443.2L179.3 456.6L179.9 470.0L181.0 483.7L182.7 497.8L184.8 512.5L187.6 528.0L191.1 544.5L195.1 562.6L199.3 583.5L213.6 594.1L229.0 603.3L245.1 610.9L261.9 616.9L279.2 621.2L296.9 623.8L314.7 624.7L332.6 623.8L350.3 621.2L367.6 616.9L384.4 610.9L400.5 603.3L415.9 594.1L430.2 583.5L434.4 562.6L438.4 544.5L441.9 528.0L444.7 512.5L446.8 497.8L448.5 483.7L449.6 470.0L450.2 456.6Z" fill="#46f200"/>
<path d="M449.6 443.2L449.4 430.0L448.8 416.7L447.7 403.0L446.1 389.0L443.9 374.4L441.1 359.1L437.6 342.7L433.6 324.7L429.5 303.8L415.9 292.4L400.5 283.2L384.4 275.6L367.6 269.6L350.3 265.3L332.6 262.7L314.8 261.8L296.9 262.7L279.2 265.3L261.9 269.6L245.1 275.6L229.0 283.2L213.6 292.4L200.0 303.8L195.9 324.7L191.9 342.7L188.4 359.1L185.6 374.4L183.4 389.0L181.8 403.0L180.7 416.7L180.1 430.0L179.9 443.2L180.1 456.5L180.7 469.8L181.8 483.5L183.4 497.5L185.6 512.1L188.4 527.4L191.9 543.8L195.9 561.8L200.0 582.7L213.6 594.1L229.0 603.3L245.1 610.9L261.9 616.9L279.2 621.2L296.9 623.8L314.7 624.7L332.6 623.8L350.3 621.2L367.6 616.9L384.4 610.9L400.5 603.3L415.9 594.1L429.5 582.7L433.6 561.8L437.6 543.8L441.1 527.4L443.9 512.1L446.1 497.5L447.7 483.5L448.8 469.8L449.4 456.5Z" fill="#4af400"/>
<path d="M448.8 443.2L448.6 430.1L447.9 416.8L446.9 403.3L445.3 389.3L443.1 374.8L440.3 359.6L436.8 343.3L432.8 325.6L428.5 305.0L415.9 292.4L400.5 283.2L384.4 275.6L367.6 269.6L350.3 265.3L332.6 262.7L314.8 261.8L296.9 262.7L279.2 265.3L261.9 269.6L245.1 275.6L229.0 283.2L213.6 292.4L201.0 305.0L196.7 325.6L192.7 343.3L189.2 359.6L186.4 374.8L184.2 389.3L182.6 403.3L181.6 416.8L180.9 430.1L180.7 443.2L180.9 456.4L181.6 469.7L182.6 483.2L184.2 497.2L186.4 511.7L189.2 526.9L192.7 543.2L196.7 560.9L201.0 581.5L213.6 594.1L229.0 603.3L245.1 610.9L261.9 616.9L279.2 621.2L296.9 623.8L314.7 624.7L332.6 623.8L350.3 621.2L367.6 616.9L384.4 610.9L400.5 603.3L415.9 594.1L428.5 581.5L432.8 560.9L436.8 543.2L440.3 526.9L443.1 511.7L445.3 497.2L446.9 483.2L447.9 469.7L448.6 456.4Z" fill="#4ff600"/>
<path d="M448.0 443.2L447.8 430.2L447.1 417.0L446.0 403.5L444.5 389.7L442.3 375.3L439.5 360.1L436.0 344.0L431.9 326.4L427.6 306.2L415.9 292.4L400.5 283.2L384.4 275.6L367.6 269.6L350.3 265.3L332.6 262.7L314.8 261.8L296.9 262.7L279.2 265.3L261.9 269.6L245.1 275.6L229.0 283.2L213.6 292.4L201.9 306.2L197.6 326.4L193.5 344.0L190.0 360.1L187.2 375.3L185.0 389.7L183.5 403.5L182.4 417.0L181.7 430.2L181.5 443.2L181.7 456.3L182.4 469.5L183.5 483.0L185.0 496.8L187.2 511.2L190.0 526.4L193.5 542.5L197.6 560.1L201.9 580.3L213.6 594.1L229.0 603.3L245.1 610.9L261.9 616.9L279.2 621.2L296.9 623.8L314.7 624.7L332.6 623.8L350.3 621.2L367.6 616.9L384.4 610.9L400.5 603.3L415.9 594.1L427.6 580.3L431.9 560.1L436.0 542.5L439.5 526.4L442.3 511.2L444.5 496.8L446.0 483.0L447.1 469.5L447.8 456.3Z" fill="#53f700"/>
<path d="M447.2 443.2L447.0 430.3L446.3 417.2L445.2 403.8L443.6 390.0L441.5 375.7L438.7 360.7L435.2 344.6L431.1 327.2L426.6 307.3L415.9 292.4L400.5 283.2L384.4 275.6L367.6 269.6L350.3 265.3L332.6 262.7L314.8 261.8L296.9 262.7L279.2 265.3L261.9 269.6L245.1 275.6L229.0 283.2L213.6 292.4L202.9 307.3L198.4 327.2L194.3 344.6L190.8 360.7L188.0 375.7L185.9 390.0L184.3 403.8L183.2 417.2L182.5 430.3L182.3 443.2L182.5 456.2L183.2 469.3L184.3 482.7L185.9 496.5L188.0 510.8L190.8 525.8L194.3 541.9L198.4 559.3L202.9 579.2L213.6 594.1L229.0 603.3L245.1 610.9L261.9 616.9L279.2 621.2L296.9 623.8L314.7 624.7L332.6 623.8L350.3 621.2L367.6 616.9L384.4 610.9L400.5 603.3L415.9 594.1L426.6 579.2L431.1 559.3L435.2 541.9L438.7 525.8L441.5 510.8L443.6 496.5L445.2 482.7L446.3 469.3L447.0 456.2Z" fill="#58f900"/>
<path d="M446.3 443.2L446.1 430.3L445.5 417.3L444.4 404.0L442.8 390.3L440.7 376.1L437.9 361.2L434.4 345.3L430.2 328.1L425.7 308.5L415.9 292.4L400.5 283.2L384.4 275.6L367.6 269.6L350.3 265.3L332.6 262.7L314.8 261.8L296.9 262.7L279.2 265.3L261.9 269.6L245.1 275.6L229.0 283.2L213.6 292.4L203.8 308.5L199.3 328.1L195.1 345.3L191.6 361.2L188.8 376.1L186.7 390.3L185.1 404.0L184.0 417.3L183.4 430.3L183.2 443.2L183.4 456.2L184.0 469.2L185.1 482.5L186.7 496.2L188.8 510.4L191.6 525.3L195.1 541.2L199.3 558.4L203.8 578.0L213.6 594.1L229.0 603.3L245.1 610.9L261.9 616.9L279.2 621.2L296.9 623.8L314.7 624.7L332.6 623.8L350.3 621.2L367.6 616.9L384.4 610.9L400.5 603.3L415.9 594.1L425.7 578.0L430.2 558.4L434.4 541.2L437.9 525.3L440.7 510.4L442.8 496.2L444.4 482.5L445.5 469.2L446.1 456.2Z" fill="#5dfb00"/>
<path d="M445.5 443.2L445.3 430.4L444.7 417.5L443.6 404.3L442.0 390.7L439.9 376.6L437.1 361.7L433.6 346.0L429.4 328.9L424.7 309.6L415.9 292.4L400.5 283.2L384.4 275.6L367.6 269.6L350.3 265.3L332.6 262.7L314.8 261.8L296.9 262.7L279.2 265.3L261.9 269.6L245.1 275.6L229.0 283.2L213.6 292.4L204.8 309.6L200.1 328.9L195.9 346.0L192.4 361.7L189.6 376.6L187.5 390.7L185.9 404.3L184.8 417.5L184.2 430.4L184.0 443.2L184.2 456.1L184.8 469.0L185.9 482.2L187.5 495.8L189.6 509.9L192.4 524.8L195.9 540.5L200.1 557.6L204.8 576.9L213.6 594.1L229.0 603.3L245.1 610.9L261.9 616.9L279.2 621.2L296.9 623.8L314.7 624.7L332.6 623.8L350.3 621.2L367.6 616.9L384.4 610.9L400.5 603.3L415.9 594.1L424.7 576.9L429.4 557.6L433.6 540.5L437.1 524.8L439.9 509.9L442.0 495.8L443.6 482.2L444.7 469.0L445.3 456.1Z" fill="#61fc00"/>
<path d="M444.7 443.2L444.5 430.5L443.9 417.6L442.8 404.5L441.2 391.0L439.1 377.0L436.3 362.3L432.8 346.6L428.6 329.7L423.8 310.7L415.9 292.4L400.5 283.2L384.4 275.6L367.6 269.6L350.3 265.3L332.6 262.7L314.8 261.8L296.9 262.7L279.2 265.3L261.9 269.6L245.1 275.6L229.0 283.2L213.6 292.4L205.7 310.7L200.9 329.7L196.7 346.6L193.2 362.3L190.4 377.0L188.3 391.0L186.7 404.5L185.6 417.6L185.0 430.5L184.8 443.2L185.0 456.0L185.6 468.9L186.7 482.0L188.3 495.5L190.4 509.5L193.2 524.2L196.7 539.9L200.9 556.8L205.7 575.8L213.6 594.1L229.0 603.3L245.1 610.9L261.9 616.9L279.2 621.2L296.9 623.8L314.7 624.7L332.6 623.8L350.3 621.2L367.6 616.9L384.4 610.9L400.5 603.3L415.9 594.1L423.8 575.8L428.6 556.8L432.8 539.9L436.3 524.2L439.1 509.5L441.2 495.5L442.8 482.0L443.9 468.9L444.5 456.0Z" fill="#66fe00"/>
<path d="M443.9 443.2L443.7 430.6L443.0 417.8L442.0 404.8L440.4 391.4L438.3 377.4L435.5 362.8L432.0 347.3L427.8 330.6L422.9 311.8L415.9 292.4L400.5 283.2L384.4 275.6L367.6 269.6L350.3 265.3L332.6 262.7L314.8 261.8L296.9 262.7L279.2 265.3L261.9 269.6L245.1 275.6L229.0 283.2L213.6 292.4L206.6 311.8L201.7 330.6L197.5 347.3L194.0 362.8L191.2 377.4L189.1 391.4L187.5 404.8L186.5 417.8L185.8 430.6L185.6 443.2L185.8 455.9L186.5 468.7L187.5 481.7L189.1 495.1L191.2 509.1L194.0 523.7L197.5 539.2L201.7 555.9L206.6 574.7L213.6 594.1L229.0 603.3L245.1 610.9L261.9 616.9L279.2 621.2L296.9 623.8L314.7 624.7L332.6 623.8L350.3 621.2L367.6 616.9L384.4 610.9L400.5 603.3L415.9 594.1L422.9 574.7L427.8 555.9L432.0 539.2L435.5 523.7L438.3 509.1L440.4 495.1L442.0 481.7L443.0 468.7L443.7 455.9Z" fill="#6aff00"/>
<path d="M443.0 443.2L442.8 430.7L442.2 418.0L441.1 405.0L439.6 391.7L437.5 377.8L434.7 363.3L431.2 347.9L426.9 331.4L422.0 312.9L415.9 292.4L400.5 283.2L384.4 275.6L367.6 269.6L350.3 265.3L332.6 262.7L314.8 261.8L296.9 262.7L279.2 265.3L261.9 269.6L245.1 275.6L229.0 283.2L213.6 292.4L207.5 312.9L202.6 331.4L198.3 347.9L194.8 363.3L192.0 377.8L189.9 391.7L188.4 405.0L187.3 418.0L186.7 430.7L186.5 443.2L186.7 455.8L187.3 468.5L188.4 481.5L189.9 494.8L192.0 508.7L194.8 523.2L198.3 538.6L202.6 555.1L207.5 573.6L213.6 594.1L229.0 603.3L245.1 610.9L261.9 616.9L279.2 621.2L296.9 623.8L314.7 624.7L332.6 623.8L350.3 621.2L367.6 616.9L384.4 610.9L400.5 603.3L415.9 594.1L422.0 573.6L426.9 555.1L431.2 538.6L434.7 523.2L437.5 508.7L439.6 494.8L441.1 481.5L442.2 468.5L442.8 455.8Z" fill="#6eff00"/>
<path d="M442.2 443.2L442.0 430.8L441.4 418.1L440.3 405.3L438.7 392.0L436.6 378.3L433.9 363.9L430.4 348.6L426.1 332.2L421.1 314.0L415.9 292.4L400.5 283.2L384.4 275.6L367.6 269.6L350.3 265.3L332.6 262.7L314.8 261.8L296.9 262.7L279.2 265.3L261.9 269.6L245.1 275.6L229.0 283.2L213.6 292.4L208.4 314.0L203.4 332.2L199.1 348.6L195.6 363.9L192.9 378.3L190.8 392.0L189.2 405.3L188.1 418.1L187.5 430.8L187.3 443.2L187.5 455.7L188.1 468.4L189.2 481.2L190.8 494.5L192.9 508.2L195.6 522.6L199.1 537.9L203.4 554.3L208.4 572.5L213.6 594.1L229.0 603.3L245.1 610.9L261.9 616.9L279.2 621.2L296.9 623.8L314.7 624.7L332.6 623.8L350.3 621.2L367.6 616.9L384.4 610.9L400.5 603.3L415.9 594.1L421.1 572.5L426.1 554.3L430.4 537.9L433.9 522.6L436.6 508.2L438.7 494.5L440.3 481.2L441.4 468.4L442.0 455.7Z" fill="#72ff00"/>
<path d="M441.3 443.2L441.1 430.8L440.5 418.3L439.5 405.5L437.9 392.4L435.8 378.7L433.1 364.4L429.6 349.3L425.3 333.0L420.3 315.0L415.3 293.2L400.5 283.2L384.4 275.6L367.6 269.6L350.3 265.3L332.6 262.7L314.8 261.8L296.9 262.7L279.2 265.3L261.9 269.6L245.1 275.6L229.0 283.2L214.2 293.2L209.2 315.0L204.2 333.0L199.9 349.3L196.4 364.4L193.7 378.7L191.6 392.4L190.0 405.5L189.0 418.3L188.4 430.8L188.2 443.2L188.4 455.7L189.0 468.2L190.0 481.0L191.6 494.1L193.7 507.8L196.4 522.1L199.9 537.2L204.2 553.5L209.2 571.5L214.2 593.3L229.0 603.3L245.1 610.9L261.9 616.9L279.2 621.2L296.9 623.8L314.7 624.7L332.6 623.8L350.3 621.2L367.6 616.9L384.4 610.9L400.5 603.3L415.3 593.3L420.3 571.5L425.3 553.5L429.6 537.2L433.1 522.1L435.8 507.8L437.9 494.1L439.5 481.0L440.5 468.2L441.1 455.7Z" fill="#76ff00"/>
<path d="M440.5 443.2L440.3 430.9L439.7 418.5L438.6 405.8L437.1 392.7L435.0 379.2L432.2 365.0L428.8 349.9L424.5 333.8L419.4 316.1L414.2 294.8L400.5 283.2L384.4 275.6L367.6 269.6L350.3 265.3L332.6 262.7L314.8 261.8L296.9 262.7L279.2 265.3L261.9 269.6L245.1 275.6L229.0 283.2L215.3 294.8L210.1 316.1L205.0 333.8L200.7 349.9L197.3 365.0L194.5 379.2L192.4 392.7L190.9 405.8L189.8 418.5L189.2 430.9L189.0 443.2L189.2 455.6L189.8 468.0L190.9 480.7L192.4 493.8L194.5 507.3L197.3 521.5L200.7 536.6L205.0 552.7L210.1 570.4L215.3 591.7L229.0 603.3L245.1 610.9L261.9 616.9L279.2 621.2L296.9 623.8L314.7 624.7L332.6 623.8L350.3 621.2L367.6 616.9L384.4 610.9L400.5 603.3L414.2 591.7L419.4 570.4L424.5 552.7L428.8 536.6L432.2 521.5L435.0 507.3L437.1 493.8L438.6 480.7L439.7 468.0L440.3 455.6Z" fill="#7aff00"/>
<path d="M439.6 443.2L439.4 431.0L438.8 418.6L437.8 406.0L436.2 393.1L434.2 379.6L431.4 365.5L427.9 350.6L423.7 334.7L418.5 317.1L413.1 296.4L400.5 283.2L384.4 275.6L367.6 269.6L350.3 265.3L332.6 262.7L314.8 261.8L296.9 262.7L279.2 265.3L261.9 269.6L245.1 275.6L229.0 283.2L216.4 296.4L211.0 317.1L205.8 334.7L201.6 350.6L198.1 365.5L195.3 379.6L193.3 393.1L191.7 406.0L190.7 418.6L190.1 431.0L189.9 443.2L190.1 455.5L190.7 467.9L191.7 480.5L193.3 493.4L195.3 506.9L198.1 521.0L201.6 535.9L205.8 551.8L211.0 569.4L216.4 590.1L229.0 603.3L245.1 610.9L261.9 616.9L279.2 621.2L296.9 623.8L314.7 624.7L332.6 623.8L350.3 621.2L367.6 616.9L384.4 610.9L400.5 603.3L413.1 590.1L418.5 569.4L423.7 551.8L427.9 535.9L431.4 521.0L434.2 506.9L436.2 493.4L437.8 480.5L438.8 467.9L439.4 455.5Z" fill="#7eff00"/>
<path d="M438.8 443.2L438.6 431.1L438.0 418.8L436.9 406.3L435.4 393.4L433.3 380.1L430.6 366.1L427.1 351.3L422.8 335.5L417.7 318.2L412.1 297.9L400.5 283.2L384.4 275.6L367.6 269.6L350.3 265.3L332.6 262.7L314.8 261.8L296.9 262.7L279.2 265.3L261.9 269.6L245.1 275.6L229.0 283.2L217.4 297.9L211.8 318.2L206.7 335.5L202.4 351.3L198.9 366.1L196.2 380.1L194.1 393.4L192.6 406.3L191.5 418.8L190.9 431.1L190.7 443.2L190.9 455.4L191.5 467.7L192.6 480.2L194.1 493.1L196.2 506.4L198.9 520.4L202.4 535.2L206.7 551.0L211.8 568.3L217.4 588.6L229.0 603.3L245.1 610.9L261.9 616.9L279.2 621.2L296.9 623.8L314.7 624.7L332.6 623.8L350.3 621.2L367.6 616.9L384.4 610.9L400.5 603.3L412.1 588.6L417.7 568.3L422.8 551.0L427.1 535.2L430.6 520.4L433.3 506.4L435.4 493.1L436.9 480.2L438.0 467.7L438.6 455.4Z" fill="#82ff00"/>
<path d="M437.9 443.2L437.7 431.2L437.1 419.0L436.1 406.6L434.5 393.8L432.5 380.5L429.8 366.6L426.3 352.0L422.0 336.3L416.8 319.2L411.1 299.4L400.5 283.2L384.4 275.6L367.6 269.6L350.3 265.3L332.6 262.7L314.8 261.8L296.9 262.7L279.2 265.3L261.9 269.6L245.1 275.6L229.0 283.2L218.4 299.4L212.7 319.2L207.5 336.3L203.2 352.0L199.7 366.6L197.0 380.5L195.0 393.8L193.4 406.6L192.4 419.0L191.8 431.2L191.6 443.2L191.8 455.3L192.4 467.5L193.4 479.9L195.0 492.7L197.0 506.0L199.7 519.9L203.2 534.5L207.5 550.2L212.7 567.3L218.4 587.1L229.0 603.3L245.1 610.9L261.9 616.9L279.2 621.2L296.9 623.8L314.7 624.7L332.6 623.8L350.3 621.2L367.6 616.9L384.4 610.9L400.5 603.3L411.1 587.1L416.8 567.3L422.0 550.2L426.3 534.5L429.8 519.9L432.5 506.0L434.5 492.7L436.1 479.9L437.1 467.5L437.7 455.3Z" fill="#86ff00"/>
<path d="M437.0 443.2L436.8 431.3L436.2 419.2L435.2 406.8L433.7 394.1L431.6 381.0L428.9 367.2L425.5 352.6L421.2 337.1L416.0 320.2L410.1 300.9L400.5 283.2L384.4 275.6L367.6 269.6L350.3 265.3L332.6 262.7L314.8 261.8L296.9 262.7L279.2 265.3L261.9 269.6L245.1 275.6L229.0 283.2L219.4 300.9L213.5 320.2L208.3 337.1L204.0 352.6L200.6 367.2L197.9 381.0L195.8 394.1L194.3 406.8L193.3 419.2L192.7 431.3L192.5 443.2L192.7 455.2L193.3 467.3L194.3 479.7L195.8 492.4L197.9 505.5L200.6 519.3L204.0 533.9L208.3 549.4L213.5 566.3L219.4 585.6L229.0 603.3L245.1 610.9L261.9 616.9L279.2 621.2L296.9 623.8L314.7 624.7L332.6 623.8L350.3 621.2L367.6 616.9L384.4 610.9L400.5 603.3L410.1 585.6L416.0 566.3L421.2 549.4L425.5 533.9L428.9 519.3L431.6 505.5L433.7 492.4L435.2 479.7L436.2 467.3L436.8 455.2Z" fill="#8aff00"/>
<path d="M436.1 443.2L436.0 431.3L435.4 419.3L434.3 407.1L432.8 394.5L430.8 381.4L428.1 367.7L424.7 353.3L420.4 337.9L415.1 321.3L409.2 302.3L400.5 283.2L384.4 275.6L367.6 269.6L350.3 265.3L332.6 262.7L314.8 261.8L296.9 262.7L279.2 265.3L261.9 269.6L245.1 275.6L229.0 283.2L220.3 302.3L214.4 321.3L209.1 337.9L204.8 353.3L201.4 367.7L198.7 381.4L196.7 394.5L195.2 407.1L194.1 419.3L193.5 431.3L193.4 443.2L193.5 455.2L194.1 467.2L195.2 479.4L196.7 492.0L198.7 505.1L201.4 518.8L204.8 533.2L209.1 548.6L214.4 565.2L220.3 584.2L229.0 603.3L245.1 610.9L261.9 616.9L279.2 621.2L296.9 623.8L314.7 624.7L332.6 623.8L350.3 621.2L367.6 616.9L384.4 610.9L400.5 603.3L409.2 584.2L415.1 565.2L420.4 548.6L424.7 533.2L428.1 518.8L430.8 505.1L432.8 492.0L434.3 479.4L435.4 467.2L436.0 455.2Z" fill="#8eff00"/>
<path d="M435.3 443.2L435.1 431.4L434.5 419.5L433.5 407.3L432.0 394.8L429.9 381.9L427.3 368.3L423.8 354.0L419.5 338.8L414.3 322.3L408.3 303.7L400.5 283.2L384.4 275.6L367.6 269.6L350.3 265.3L332.6 262.7L314.8 261.8L296.9 262.7L279.2 265.3L261.9 269.6L245.1 275.6L229.0 283.2L221.2 303.7L215.2 322.3L210.0 338.8L205.7 354.0L202.2 368.3L199.6 381.9L197.5 394.8L196.0 407.3L195.0 419.5L194.4 431.4L194.2 443.2L194.4 455.1L195.0 467.0L196.0 479.2L197.5 491.7L199.6 504.6L202.2 518.2L205.7 532.5L210.0 547.7L215.2 564.2L221.2 582.8L229.0 603.3L245.1 610.9L261.9 616.9L279.2 621.2L296.9 623.8L314.7 624.7L332.6 623.8L350.3 621.2L367.6 616.9L384.4 610.9L400.5 603.3L408.3 582.8L414.3 564.2L419.5 547.7L423.8 532.5L427.3 518.2L429.9 504.6L432.0 491.7L433.5 479.2L434.5 467.0L435.1 455.1Z" fill="#92ff00"/>
<path d="M434.4 443.2L434.2 431.5L433.6 419.7L432.6 407.6L431.1 395.2L429.1 382.3L426.4 368.8L423.0 354.7L418.7 339.6L413.5 323.3L407.4 305.0L400.5 283.2L384.4 275.6L367.6 269.6L350.3 265.3L332.6 262.7L314.8 261.8L296.9 262.7L279.2 265.3L261.9 269.6L245.1 275.6L229.0 283.2L222.1 305.0L216.0 323.3L210.8 339.6L206.5 354.7L203.1 368.8L200.4 382.3L198.4 395.2L196.9 407.6L195.9 419.7L195.3 431.5L195.1 443.2L195.3 455.0L195.9 466.8L196.9 478.9L198.4 491.3L200.4 504.2L203.1 517.7L206.5 531.8L210.8 546.9L216.0 563.2L222.1 581.5L229.0 603.3L245.1 610.9L261.9 616.9L279.2 621.2L296.9 623.8L314.7 624.7L332.6 623.8L350.3 621.2L367.6 616.9L384.4 610.9L400.5 603.3L407.4 581.5L413.5 563.2L418.7 546.9L423.0 531.8L426.4 517.7L429.1 504.2L431.1 491.3L432.6 478.9L433.6 466.8L434.2 455.0Z" fill="#96ff00"/>
<path d="M433.5 443.2L433.3 431.6L432.7 419.9L431.7 407.9L430.2 395.5L428.2 382.8L425.6 369.4L422.2 355.3L417.9 340.4L412.6 324.3L406.5 306.4L400.4 283.4L384.4 275.6L367.6 269.6L350.3 265.3L332.6 262.7L314.8 261.8L296.9 262.7L279.2 265.3L261.9 269.6L245.1 275.6L229.1 283.4L223.0 306.4L216.9 324.3L211.6 340.4L207.3 355.3L203.9 369.4L201.3 382.8L199.3 395.5L197.8 407.9L196.8 419.9L196.2 431.6L196.0 443.2L196.2 454.9L196.8 466.6L197.8 478.6L199.3 491.0L201.3 503.7L203.9 517.1L207.3 531.2L211.6 546.1L216.9 562.2L223.0 580.1L229.1 603.1L245.1 610.9L261.9 616.9L279.2 621.2L296.9 623.8L314.7 624.7L332.6 623.8L350.3 621.2L367.6 616.9L384.4 610.9L400.4 603.1L406.5 580.1L412.6 562.2L417.9 546.1L422.2 531.2L425.6 517.1L428.2 503.7L430.2 491.0L431.7 478.6L432.7 466.6L433.3 454.9Z" fill="#9aff00"/>
<path d="M432.6 443.2L432.4 431.7L431.8 420.0L430.8 408.1L429.4 395.9L427.4 383.2L424.7 370.0L421.3 356.0L417.1 341.2L411.8 325.3L405.6 307.7L399.1 285.8L384.4 275.6L367.6 269.6L350.3 265.3L332.6 262.7L314.8 261.8L296.9 262.7L279.2 265.3L261.9 269.6L245.1 275.6L230.4 285.8L223.9 307.7L217.7 325.3L212.4 341.2L208.2 356.0L204.8 370.0L202.1 383.2L200.1 395.9L198.7 408.1L197.7 420.0L197.1 431.7L196.9 443.2L197.1 454.8L197.7 466.5L198.7 478.4L200.1 490.6L202.1 503.3L204.8 516.5L208.2 530.5L212.4 545.3L217.7 561.2L223.9 578.8L230.4 600.7L245.1 610.9L261.9 616.9L279.2 621.2L296.9 623.8L314.7 624.7L332.6 623.8L350.3 621.2L367.6 616.9L384.4 610.9L399.1 600.7L405.6 578.8L411.8 561.2L417.1 545.3L421.3 530.5L424.7 516.5L427.4 503.3L429.4 490.6L430.8 478.4L431.8 466.5L432.4 454.8Z" fill="#9eff00"/>
<path d="M431.7 443.2L431.5 431.8L430.9 420.2L429.9 408.4L428.5 396.3L426.5 383.7L423.9 370.6L420.5 356.7L416.2 342.1L411.0 326.3L404.7 309.0L398.0 288.0L384.4 275.6L367.6 269.6L350.3 265.3L332.6 262.7L314.8 261.8L296.9 262.7L279.2 265.3L261.9 269.6L245.1 275.6L231.5 288.0L224.8 309.0L218.5 326.3L213.3 342.1L209.0 356.7L205.6 370.6L203.0 383.7L201.0 396.3L199.6 408.4L198.6 420.2L198.0 431.8L197.8 443.2L198.0 454.7L198.6 466.3L199.6 478.1L201.0 490.2L203.0 502.8L205.6 515.9L209.0 529.8L213.3 544.4L218.5 560.2L224.8 577.5L231.5 598.5L245.1 610.9L261.9 616.9L279.2 621.2L296.9 623.8L314.7 624.7L332.6 623.8L350.3 621.2L367.6 616.9L384.4 610.9L398.0 598.5L404.7 577.5L411.0 560.2L416.2 544.4L420.5 529.8L423.9 515.9L426.5 502.8L428.5 490.2L429.9 478.1L430.9 466.3L431.5 454.7Z" fill="#a2ff00"/>
<path d="M430.8 443.2L430.6 431.9L430.0 420.4L429.0 408.7L427.6 396.6L425.6 384.2L423.0 371.1L419.6 357.4L415.4 342.9L410.1 327.3L403.8 310.3L396.9 290.0L384.4 275.6L367.6 269.6L350.3 265.3L332.6 262.7L314.8 261.8L296.9 262.7L279.2 265.3L261.9 269.6L245.1 275.6L232.6 290.0L225.7 310.3L219.4 327.3L214.1 342.9L209.9 357.4L206.5 371.1L203.9 384.2L201.9 396.6L200.5 408.7L199.5 420.4L198.9 431.9L198.7 443.2L198.9 454.6L199.5 466.1L200.5 477.8L201.9 489.9L203.9 502.3L206.5 515.4L209.9 529.1L214.1 543.6L219.4 559.2L225.7 576.2L232.6 596.5L245.1 610.9L261.9 616.9L279.2 621.2L296.9 623.8L314.7 624.7L332.6 623.8L350.3 621.2L367.6 616.9L384.4 610.9L396.9 596.5L403.8 576.2L410.1 559.2L415.4 543.6L419.6 529.1L423.0 515.4L425.6 502.3L427.6 489.9L429.0 477.8L430.0 466.1L430.6 454.6Z" fill="#a6ff00"/>
<path d="M429.9 443.2L429.7 432.0L429.1 420.6L428.1 409.0L426.7 397.0L424.7 384.6L422.1 371.7L418.8 358.1L414.6 343.7L409.3 328.4L403.0 311.6L395.8 292.0L384.4 275.6L367.6 269.6L350.3 265.3L332.6 262.7L314.8 261.8L296.9 262.7L279.2 265.3L261.9 269.6L245.1 275.6L233.7 292.0L226.5 311.6L220.2 328.4L214.9 343.7L210.7 358.1L207.4 371.7L204.8 384.6L202.8 397.0L201.4 409.0L200.4 420.6L199.8 432.0L199.6 443.2L199.8 454.5L200.4 465.9L201.4 477.5L202.8 489.5L204.8 501.9L207.4 514.8L210.7 528.4L214.9 542.8L220.2 558.1L226.5 574.9L233.7 594.5L245.1 610.9L261.9 616.9L279.2 621.2L296.9 623.8L314.7 624.7L332.6 623.8L350.3 621.2L367.6 616.9L384.4 610.9L395.8 594.5L403.0 574.9L409.3 558.1L414.6 542.8L418.8 528.4L422.1 514.8L424.7 501.9L426.7 489.5L428.1 477.5L429.1 465.9L429.7 454.5Z" fill="#aaff00"/>
<path d="M428.9 443.2L428.8 432.1L428.2 420.7L427.2 409.2L425.8 397.4L423.8 385.1L421.3 372.3L417.9 358.8L413.7 344.6L408.5 329.4L402.1 312.8L394.9 293.8L384.4 275.6L367.6 269.6L350.3 265.3L332.6 262.7L314.8 261.8L296.9 262.7L279.2 265.3L261.9 269.6L245.1 275.6L234.6 293.8L227.4 312.8L221.0 329.4L215.8 344.6L211.6 358.8L208.2 372.3L205.7 385.1L203.7 397.4L202.3 409.2L201.3 420.7L200.7 432.1L200.6 443.2L200.7 454.4L201.3 465.8L202.3 477.3L203.7 489.1L205.7 501.4L208.2 514.2L211.6 527.7L215.8 541.9L221.0 557.1L227.4 573.7L234.6 592.7L245.1 610.9L261.9 616.9L279.2 621.2L296.9 623.8L314.7 624.7L332.6 623.8L350.3 621.2L367.6 616.9L384.4 610.9L394.9 592.7L402.1 573.7L408.5 557.1L413.7 541.9L417.9 527.7L421.3 514.2L423.8 501.4L425.8 489.1L427.2 477.3L428.2 465.8L428.8 454.4Z" fill="#aeff00"/>
<path d="M428.0 443.2L427.8 432.1L427.3 420.9L426.3 409.5L424.9 397.8L422.9 385.6L420.4 372.9L417.1 359.5L412.9 345.4L407.7 330.4L401.3 314.1L393.9 295.6L384.4 275.6L367.6 269.6L350.3 265.3L332.6 262.7L314.8 261.8L296.9 262.7L279.2 265.3L261.9 269.6L245.1 275.6L235.6 295.6L228.2 314.1L221.8 330.4L216.6 345.4L212.4 359.5L209.1 372.9L206.6 385.6L204.6 397.8L203.2 409.5L202.2 420.9L201.7 432.1L201.5 443.2L201.7 454.4L202.2 465.6L203.2 477.0L204.6 488.7L206.6 500.9L209.1 513.6L212.4 527.0L216.6 541.1L221.8 556.1L228.2 572.4L235.6 590.9L245.1 610.9L261.9 616.9L279.2 621.2L296.9 623.8L314.7 624.7L332.6 623.8L350.3 621.2L367.6 616.9L384.4 610.9L393.9 590.9L401.3 572.4L407.7 556.1L412.9 541.1L417.1 527.0L420.4 513.6L422.9 500.9L424.9 488.7L426.3 477.0L427.3 465.6L427.8 454.4Z" fill="#b1ff00"/>
<path d="M427.1 443.2L426.9 432.2L426.3 421.1L425.4 409.8L424.0 398.1L422.0 386.1L419.5 373.5L416.2 360.2L412.0 346.2L406.8 331.4L400.4 315.4L393.0 297.3L384.4 275.6L367.6 269.6L350.3 265.3L332.6 262.7L314.8 261.8L296.9 262.7L279.2 265.3L261.9 269.6L245.1 275.6L236.5 297.3L229.1 315.4L222.7 331.4L217.5 346.2L213.3 360.2L210.0 373.5L207.5 386.1L205.5 398.1L204.1 409.8L203.2 421.1L202.6 432.2L202.4 443.2L202.6 454.3L203.2 465.4L204.1 476.7L205.5 488.4L207.5 500.4L210.0 513.0L213.3 526.3L217.5 540.3L222.7 555.1L229.1 571.1L236.5 589.2L245.1 610.9L261.9 616.9L279.2 621.2L296.9 623.8L314.7 624.7L332.6 623.8L350.3 621.2L367.6 616.9L384.4 610.9L393.0 589.2L400.4 571.1L406.8 555.1L412.0 540.3L416.2 526.3L419.5 513.0L422.0 500.4L424.0 488.4L425.4 476.7L426.3 465.4L426.9 454.3Z" fill="#b4fe00"/>
<path d="M426.1 443.2L426.0 432.3L425.4 421.3L424.5 410.1L423.1 398.5L421.1 386.5L418.6 374.0L415.3 360.9L411.2 347.1L406.0 332.4L399.6 316.6L392.1 299.0L384.4 275.6L367.6 269.6L350.3 265.3L332.6 262.7L314.8 261.8L296.9 262.7L279.2 265.3L261.9 269.6L245.1 275.6L237.4 299.0L229.9 316.6L223.5 332.4L218.3 347.1L214.2 360.9L210.9 374.0L208.4 386.5L206.4 398.5L205.0 410.1L204.1 421.3L203.5 432.3L203.4 443.2L203.5 454.2L204.1 465.2L205.0 476.4L206.4 488.0L208.4 500.0L210.9 512.5L214.2 525.6L218.3 539.4L223.5 554.1L229.9 569.9L237.4 587.5L245.1 610.9L261.9 616.9L279.2 621.2L296.9 623.8L314.7 624.7L332.6 623.8L350.3 621.2L367.6 616.9L384.4 610.9L392.1 587.5L399.6 569.9L406.0 554.1L411.2 539.4L415.3 525.6L418.6 512.5L421.1 500.0L423.1 488.0L424.5 476.4L425.4 465.2L426.0 454.2Z" fill="#b7fd00"/>
<path d="M425.2 443.2L425.0 432.4L424.5 421.5L423.5 410.3L422.1 398.9L420.2 387.0L417.7 374.6L414.5 361.6L410.3 347.9L405.2 333.4L398.8 317.8L391.2 300.7L383.1 278.6L367.6 269.6L350.3 265.3L332.6 262.7L314.8 261.8L296.9 262.7L279.2 265.3L261.9 269.6L246.4 278.6L238.3 300.7L230.7 317.8L224.3 333.4L219.2 347.9L215.0 361.6L211.8 374.6L209.3 387.0L207.4 398.9L206.0 410.3L205.0 421.5L204.5 432.4L204.3 443.2L204.5 454.1L205.0 465.0L206.0 476.2L207.4 487.6L209.3 499.5L211.8 511.9L215.0 524.9L219.2 538.6L224.3 553.1L230.7 568.7L238.3 585.8L246.4 607.9L261.9 616.9L279.2 621.2L296.9 623.8L314.7 624.7L332.6 623.8L350.3 621.2L367.6 616.9L383.1 607.9L391.2 585.8L398.8 568.7L405.2 553.1L410.3 538.6L414.5 524.9L417.7 511.9L420.2 499.5L422.1 487.6L423.5 476.2L424.5 465.0L425.0 454.1Z" fill="#b9fc00"/>
<path d="M424.2 443.2L424.1 432.5L423.5 421.7L422.6 410.6L421.2 399.3L419.3 387.5L416.8 375.2L413.6 362.4L409.5 348.8L404.3 334.4L398.0 319.1L390.3 302.3L381.9 281.6L367.6 269.6L350.3 265.3L332.6 262.7L314.8 261.8L296.9 262.7L279.2 265.3L261.9 269.6L247.6 281.6L239.2 302.3L231.5 319.1L225.2 334.4L220.0 348.8L215.9 362.4L212.7 375.2L210.2 387.5L208.3 399.3L206.9 410.6L206.0 421.7L205.4 432.5L205.3 443.2L205.4 454.0L206.0 464.8L206.9 475.9L208.3 487.2L210.2 499.0L212.7 511.3L215.9 524.1L220.0 537.7L225.2 552.1L231.5 567.4L239.2 584.2L247.6 604.9L261.9 616.9L279.2 621.2L296.9 623.8L314.7 624.7L332.6 623.8L350.3 621.2L367.6 616.9L381.9 604.9L390.3 584.2L398.0 567.4L404.3 552.1L409.5 537.7L413.6 524.1L416.8 511.3L419.3 499.0L421.2 487.2L422.6 475.9L423.5 464.8L424.1 454.0Z" fill="#bcfb00"/>
<path d="M423.3 443.2L423.1 432.6L422.6 421.9L421.6 410.9L420.3 399.7L418.4 388.0L415.9 375.8L412.7 363.1L408.6 349.6L403.5 335.4L397.1 320.3L389.5 303.9L380.8 284.3L367.6 269.6L350.3 265.3L332.6 262.7L314.8 261.8L296.9 262.7L279.2 265.3L261.9 269.6L248.7 284.3L240.0 303.9L232.4 320.3L226.0 335.4L220.9 349.6L216.8 363.1L213.6 375.8L211.1 388.0L209.2 399.7L207.9 410.9L206.9 421.9L206.4 432.6L206.2 443.2L206.4 453.9L206.9 464.6L207.9 475.6L209.2 486.8L211.1 498.5L213.6 510.7L216.8 523.4L220.9 536.9L226.0 551.1L232.4 566.2L240.0 582.6L248.7 602.2L261.9 616.9L279.2 621.2L296.9 623.8L314.7 624.7L332.6 623.8L350.3 621.2L367.6 616.9L380.8 602.2L389.5 582.6L397.1 566.2L403.5 551.1L408.6 536.9L412.7 523.4L415.9 510.7L418.4 498.5L420.3 486.8L421.6 475.6L422.6 464.6L423.1 453.9Z" fill="#bffa00"/>
<path d="M422.3 443.2L422.1 432.7L421.6 422.1L420.7 411.2L419.3 400.1L417.5 388.5L415.0 376.5L411.8 363.8L407.8 350.5L402.6 336.4L396.3 321.5L388.6 305.4L379.7 286.8L367.6 269.6L350.3 265.3L332.6 262.7L314.8 261.8L296.9 262.7L279.2 265.3L261.9 269.6L249.8 286.8L240.9 305.4L233.2 321.5L226.9 336.4L221.7 350.5L217.7 363.8L214.5 376.5L212.0 388.5L210.2 400.1L208.8 411.2L207.9 422.1L207.4 432.7L207.2 443.2L207.4 453.8L207.9 464.4L208.8 475.3L210.2 486.4L212.0 498.0L214.5 510.0L217.7 522.7L221.7 536.0L226.9 550.1L233.2 565.0L240.9 581.1L249.8 599.7L261.9 616.9L279.2 621.2L296.9 623.8L314.7 624.7L332.6 623.8L350.3 621.2L367.6 616.9L379.7 599.7L388.6 581.1L396.3 565.0L402.6 550.1L407.8 536.0L411.8 522.7L415.0 510.0L417.5 498.0L419.3 486.4L420.7 475.3L421.6 464.4L422.1 453.8Z" fill="#c1fa00"/>
<path d="M421.3 443.2L421.1 432.8L420.6 422.3L419.7 411.5L418.4 400.5L416.5 389.0L414.1 377.1L410.9 364.5L406.9 351.4L401.8 337.5L395.5 322.7L387.8 307.0L378.8 289.1L367.6 269.6L350.3 265.3L332.6 262.7L314.8 261.8L296.9 262.7L279.2 265.3L261.9 269.6L250.7 289.1L241.7 307.0L234.0 322.7L227.7 337.5L222.6 351.4L218.6 364.5L215.4 377.1L213.0 389.0L211.1 400.5L209.8 411.5L208.9 422.3L208.4 432.8L208.2 443.2L208.4 453.7L208.9 464.2L209.8 475.0L211.1 486.0L213.0 497.5L215.4 509.4L218.6 522.0L222.6 535.1L227.7 549.0L234.0 563.8L241.7 579.5L250.7 597.4L261.9 616.9L279.2 621.2L296.9 623.8L314.7 624.7L332.6 623.8L350.3 621.2L367.6 616.9L378.8 597.4L387.8 579.5L395.5 563.8L401.8 549.0L406.9 535.1L410.9 522.0L414.1 509.4L416.5 497.5L418.4 486.0L419.7 475.0L420.6 464.2L421.1 453.7Z" fill="#c4f900"/>
<path d="M420.3 443.2L420.2 432.9L419.6 422.4L418.7 411.8L417.4 400.8L415.6 389.5L413.2 377.7L410.0 365.3L406.0 352.2L401.0 338.5L394.7 324.0L387.0 308.5L377.9 291.2L367.6 269.6L350.3 265.3L332.6 262.7L314.8 261.8L296.9 262.7L279.2 265.3L261.9 269.6L251.6 291.2L242.5 308.5L234.8 324.0L228.5 338.5L223.5 352.2L219.5 365.3L216.3 377.7L213.9 389.5L212.1 400.8L210.8 411.8L209.9 422.4L209.3 432.9L209.2 443.2L209.3 453.6L209.9 464.1L210.8 474.7L212.1 485.7L213.9 497.0L216.3 508.8L219.5 521.2L223.5 534.3L228.5 548.0L234.8 562.5L242.5 578.0L251.6 595.3L261.9 616.9L279.2 621.2L296.9 623.8L314.7 624.7L332.6 623.8L350.3 621.2L367.6 616.9L377.9 595.3L387.0 578.0L394.7 562.5L401.0 548.0L406.0 534.3L410.0 521.2L413.2 508.8L415.6 497.0L417.4 485.7L418.7 474.7L419.6 464.1L420.2 453.6Z" fill="#c7f800"/>
<path d="M419.3 443.2L419.2 433.0L418.7 422.6L417.8 412.1L416.4 401.2L414.6 390.0L412.2 378.3L409.1 366.0L405.1 353.1L400.1 339.5L393.9 325.2L386.2 310.0L377.0 293.3L367.4 270.3L350.3 265.3L332.6 262.7L314.8 261.8L296.9 262.7L279.2 265.3L262.1 270.3L252.5 293.3L243.3 310.0L235.6 325.2L229.4 339.5L224.4 353.1L220.4 366.0L217.3 378.3L214.9 390.0L213.1 401.2L211.7 412.1L210.8 422.6L210.3 433.0L210.2 443.2L210.3 453.5L210.8 463.9L211.7 474.4L213.1 485.3L214.9 496.5L217.3 508.2L220.4 520.5L224.4 533.4L229.4 547.0L235.6 561.3L243.3 576.5L252.5 593.2L262.1 616.2L279.2 621.2L296.9 623.8L314.7 624.7L332.6 623.8L350.3 621.2L367.4 616.2L377.0 593.2L386.2 576.5L393.9 561.3L400.1 547.0L405.1 533.4L409.1 520.5L412.2 508.2L414.6 496.5L416.4 485.3L417.8 474.4L418.7 463.9L419.2 453.5Z" fill="#c9f700"/>
<path d="M418.3 443.2L418.2 433.1L417.7 422.8L416.8 412.4L415.5 401.6L413.7 390.5L411.3 378.9L408.2 366.8L404.3 354.0L399.3 340.6L393.0 326.4L385.4 311.5L376.2 295.3L365.9 275.2L350.3 265.3L332.6 262.7L314.8 261.8L296.9 262.7L279.2 265.3L263.6 275.2L253.3 295.3L244.1 311.5L236.5 326.4L230.2 340.6L225.2 354.0L221.3 366.8L218.2 378.9L215.8 390.5L214.0 401.6L212.7 412.4L211.8 422.8L211.3 433.1L211.2 443.2L211.3 453.4L211.8 463.7L212.7 474.1L214.0 484.9L215.8 496.0L218.2 507.6L221.3 519.7L225.2 532.5L230.2 545.9L236.5 560.1L244.1 575.0L253.3 591.2L263.6 611.3L279.2 621.2L296.9 623.8L314.7 624.7L332.6 623.8L350.3 621.2L365.9 611.3L376.2 591.2L385.4 575.0L393.0 560.1L399.3 545.9L404.3 532.5L408.2 519.7L411.3 507.6L413.7 496.0L415.5 484.9L416.8 474.1L417.7 463.7L418.2 453.4Z" fill="#ccf600"/>
<path d="M417.3 443.2L417.2 433.2L416.6 423.0L415.8 412.7L414.5 402.1L412.7 391.0L410.3 379.6L407.3 367.5L403.4 354.9L398.4 341.6L392.2 327.6L384.6 313.0L375.4 297.3L364.7 278.9L350.3 265.3L332.6 262.7L314.8 261.8L296.9 262.7L279.2 265.3L264.8 278.9L254.1 297.3L244.9 313.0L237.3 327.6L231.1 341.6L226.1 354.9L222.2 367.5L219.2 379.6L216.8 391.0L215.0 402.1L213.7 412.7L212.9 423.0L212.3 433.2L212.2 443.2L212.3 453.3L212.9 463.5L213.7 473.8L215.0 484.4L216.8 495.5L219.2 506.9L222.2 519.0L226.1 531.6L231.1 544.9L237.3 558.9L244.9 573.5L254.1 589.2L264.8 607.6L279.2 621.2L296.9 623.8L314.7 624.7L332.6 623.8L350.3 621.2L364.7 607.6L375.4 589.2L384.6 573.5L392.2 558.9L398.4 544.9L403.4 531.6L407.3 519.0L410.3 506.9L412.7 495.5L414.5 484.4L415.8 473.8L416.6 463.5L417.2 453.3Z" fill="#cff500"/>
<path d="M416.3 443.2L416.1 433.3L415.6 423.2L414.8 413.0L413.5 402.5L411.7 391.6L409.4 380.2L406.4 368.3L402.5 355.8L397.5 342.6L391.4 328.9L383.8 314.4L374.6 299.2L363.8 282.0L350.3 265.3L332.6 262.7L314.8 261.8L296.9 262.7L279.2 265.3L265.7 282.0L254.9 299.2L245.7 314.4L238.1 328.9L232.0 342.6L227.0 355.8L223.1 368.3L220.1 380.2L217.8 391.6L216.0 402.5L214.7 413.0L213.9 423.2L213.4 433.3L213.2 443.2L213.4 453.2L213.9 463.3L214.7 473.5L216.0 484.0L217.8 494.9L220.1 506.3L223.1 518.2L227.0 530.7L232.0 543.9L238.1 557.6L245.7 572.1L254.9 587.3L265.7 604.5L279.2 621.2L296.9 623.8L314.7 624.7L332.6 623.8L350.3 621.2L363.8 604.5L374.6 587.3L383.8 572.1L391.4 557.6L397.5 543.9L402.5 530.7L406.4 518.2L409.4 506.3L411.7 494.9L413.5 484.0L414.8 473.5L415.6 463.3L416.1 453.2Z" fill="#d1f500"/>
<path d="M415.3 443.2L415.1 433.4L414.6 423.4L413.8 413.3L412.5 402.9L410.7 392.1L408.4 380.8L405.4 369.0L401.6 356.7L396.7 343.7L390.6 330.1L383.0 315.9L373.8 301.1L362.9 284.9L350.3 265.3L332.6 262.7L314.8 261.8L296.9 262.7L279.2 265.3L266.6 284.9L255.7 301.1L246.5 315.9L238.9 330.1L232.8 343.7L227.9 356.7L224.1 369.0L221.1 380.8L218.8 392.1L217.0 402.9L215.7 413.3L214.9 423.4L214.4 433.4L214.2 443.2L214.4 453.1L214.9 463.1L215.7 473.2L217.0 483.6L218.8 494.4L221.1 505.7L224.1 517.5L227.9 529.8L232.8 542.8L238.9 556.4L246.5 570.6L255.7 585.4L266.6 601.6L279.2 621.2L296.9 623.8L314.7 624.7L332.6 623.8L350.3 621.2L362.9 601.6L373.8 585.4L383.0 570.6L390.6 556.4L396.7 542.8L401.6 529.8L405.4 517.5L408.4 505.7L410.7 494.4L412.5 483.6L413.8 473.2L414.6 463.1L415.1 453.1Z" fill="#d4f400"/>
<path d="M414.2 443.2L414.1 433.5L413.6 423.6L412.7 413.6L411.5 403.3L409.8 392.6L407.5 381.5L404.5 369.8L400.7 357.6L395.8 344.7L389.7 331.3L382.2 317.4L373.1 302.9L362.1 287.5L350.0 266.3L332.6 262.7L314.8 261.8L296.9 262.7L279.5 266.3L267.4 287.5L256.4 302.9L247.3 317.4L239.8 331.3L233.7 344.7L228.8 357.6L225.0 369.8L222.0 381.5L219.7 392.6L218.0 403.3L216.8 413.6L215.9 423.6L215.4 433.5L215.3 443.2L215.4 453.0L215.9 462.9L216.8 472.9L218.0 483.2L219.7 493.9L222.0 505.0L225.0 516.7L228.8 528.9L233.7 541.8L239.8 555.2L247.3 569.1L256.4 583.6L267.4 599.0L279.5 620.2L296.9 623.8L314.7 624.7L332.6 623.8L350.0 620.2L362.1 599.0L373.1 583.6L382.2 569.1L389.7 555.2L395.8 541.8L400.7 528.9L404.5 516.7L407.5 505.0L409.8 493.9L411.5 483.2L412.7 472.9L413.6 462.9L414.1 453.0Z" fill="#d7f300"/>
<path d="M413.2 443.2L413.0 433.6L412.5 423.9L411.7 413.9L410.5 403.7L408.8 393.1L406.5 382.1L403.5 370.6L399.8 358.5L394.9 345.8L388.9 332.6L381.4 318.8L372.3 304.7L361.4 290.0L348.7 273.0L332.6 262.7L314.8 261.8L296.9 262.7L280.8 273.0L268.1 290.0L257.2 304.7L248.1 318.8L240.6 332.6L234.6 345.8L229.7 358.5L226.0 370.6L223.0 382.1L220.7 393.1L219.0 403.7L217.8 413.9L217.0 423.9L216.5 433.6L216.3 443.2L216.5 452.9L217.0 462.6L217.8 472.6L219.0 482.8L220.7 493.4L223.0 504.4L226.0 515.9L229.7 528.0L234.6 540.7L240.6 553.9L248.1 567.7L257.2 581.8L268.1 596.5L280.8 613.5L296.9 623.8L314.7 624.7L332.6 623.8L348.7 613.5L361.4 596.5L372.3 581.8L381.4 567.7L388.9 553.9L394.9 540.7L399.8 528.0L403.5 515.9L406.5 504.4L408.8 493.4L410.5 482.8L411.7 472.6L412.5 462.6L413.0 452.9Z" fill="#d9f200"/>
<path d="M412.1 443.2L412.0 433.7L411.5 424.1L410.7 414.2L409.4 404.1L407.7 393.7L405.5 382.8L402.6 371.4L398.8 359.4L394.1 346.9L388.1 333.8L380.6 320.3L371.6 306.5L360.7 292.3L347.9 277.3L332.6 262.7L314.8 261.8L296.9 262.7L281.6 277.3L268.8 292.3L257.9 306.5L248.9 320.3L241.4 333.8L235.4 346.9L230.7 359.4L226.9 371.4L224.0 382.8L221.8 393.7L220.1 404.1L218.8 414.2L218.0 424.1L217.5 433.7L217.4 443.2L217.5 452.8L218.0 462.4L218.8 472.3L220.1 482.4L221.8 492.8L224.0 503.7L226.9 515.1L230.7 527.1L235.4 539.6L241.4 552.7L248.9 566.2L257.9 580.0L268.8 594.2L281.6 609.2L296.9 623.8L314.7 624.7L332.6 623.8L347.9 609.2L360.7 594.2L371.6 580.0L380.6 566.2L388.1 552.7L394.1 539.6L398.8 527.1L402.6 515.1L405.5 503.7L407.7 492.8L409.4 482.4L410.7 472.3L411.5 462.4L412.0 452.8Z" fill="#dcf100"/>
<path d="M411.1 443.2L410.9 433.8L410.4 424.3L409.6 414.6L408.4 404.6L406.7 394.2L404.5 383.4L401.6 372.2L397.9 360.3L393.2 348.0L387.2 335.1L379.9 321.8L370.8 308.2L360.0 294.6L347.1 280.8L332.6 262.7L314.8 261.8L296.9 262.7L282.4 280.8L269.5 294.6L258.7 308.2L249.6 321.8L242.3 335.1L236.3 348.0L231.6 360.3L227.9 372.2L225.0 383.4L222.8 394.2L221.1 404.6L219.9 414.6L219.1 424.3L218.6 433.8L218.4 443.2L218.6 452.7L219.1 462.2L219.9 471.9L221.1 481.9L222.8 492.3L225.0 503.1L227.9 514.3L231.6 526.2L236.3 538.5L242.3 551.4L249.6 564.7L258.7 578.3L269.5 591.9L282.4 605.7L296.9 623.8L314.7 624.7L332.6 623.8L347.1 605.7L360.0 591.9L370.8 578.3L379.9 564.7L387.2 551.4L393.2 538.5L397.9 526.2L401.6 514.3L404.5 503.1L406.7 492.3L408.4 481.9L409.6 471.9L410.4 462.2L410.9 452.7Z" fill="#dff000"/>
<path d="M410.0 443.2L409.8 433.9L409.4 424.5L408.5 414.9L407.3 405.0L405.7 394.8L403.5 384.1L400.6 373.0L397.0 361.3L392.3 349.0L386.4 336.3L379.1 323.2L370.1 310.0L359.3 296.8L346.5 284.0L331.7 271.8L314.8 261.8L297.8 271.8L283.0 284.0L270.2 296.8L259.4 310.0L250.4 323.2L243.1 336.3L237.2 349.0L232.5 361.3L228.9 373.0L226.0 384.1L223.8 394.8L222.2 405.0L221.0 414.9L220.1 424.5L219.7 433.9L219.5 443.2L219.7 452.6L220.1 462.0L221.0 471.6L222.2 481.5L223.8 491.7L226.0 502.4L228.9 513.5L232.5 525.2L237.2 537.5L243.1 550.2L250.4 563.3L259.4 576.5L270.2 589.7L283.0 602.5L297.8 614.7L314.7 624.7L331.7 614.7L346.5 602.5L359.3 589.7L370.1 576.5L379.1 563.3L386.4 550.2L392.3 537.5L397.0 525.2L400.6 513.5L403.5 502.4L405.7 491.7L407.3 481.5L408.5 471.6L409.4 462.0L409.8 452.6Z" fill="#e0ed00"/>
<path d="M408.9 443.2L408.7 434.0L408.3 424.7L407.5 415.2L406.3 405.4L404.7 395.3L402.5 384.8L399.7 373.8L396.0 362.2L391.4 350.1L385.6 337.6L378.3 324.7L369.4 311.7L358.7 298.9L345.9 286.9L331.2 276.5L314.8 271.5L298.3 276.5L283.6 286.9L270.8 298.9L260.1 311.7L251.2 324.7L243.9 337.6L238.1 350.1L233.5 362.2L229.8 373.8L227.0 384.8L224.8 395.3L223.2 405.4L222.0 415.2L221.2 424.7L220.8 434.0L220.6 443.2L220.8 452.5L221.2 461.8L222.0 471.3L223.2 481.1L224.8 491.2L227.0 501.7L229.8 512.7L233.5 524.3L238.1 536.4L243.9 548.9L251.2 561.8L260.1 574.8L270.8 587.6L283.6 599.6L298.3 610.0L314.7 615.0L331.2 610.0L345.9 599.6L358.7 587.6L369.4 574.8L378.3 561.8L385.6 548.9L391.4 536.4L396.0 524.3L399.7 512.7L402.5 501.7L404.7 491.2L406.3 481.1L407.5 471.3L408.3 461.8L408.7 452.5Z" fill="#e0e800"/>
<path d="M407.8 443.2L407.6 434.1L407.2 424.9L406.4 415.5L405.2 405.9L403.6 395.9L401.5 385.5L398.7 374.6L395.1 363.2L390.5 351.2L384.7 338.9L377.5 326.2L368.7 313.4L358.0 301.0L345.4 289.6L330.8 280.3L314.8 276.3L298.7 280.3L284.1 289.6L271.5 301.0L260.8 313.4L252.0 326.2L244.8 338.9L239.0 351.2L234.4 363.2L230.8 374.6L228.0 385.5L225.9 395.9L224.3 405.9L223.1 415.5L222.3 424.9L221.9 434.1L221.7 443.2L221.9 452.4L222.3 461.6L223.1 471.0L224.3 480.6L225.9 490.6L228.0 501.0L230.8 511.9L234.4 523.3L239.0 535.3L244.8 547.6L252.0 560.3L260.8 573.1L271.5 585.5L284.1 596.9L298.7 606.2L314.7 610.2L330.8 606.2L345.4 596.9L358.0 585.5L368.7 573.1L377.5 560.3L384.7 547.6L390.5 535.3L395.1 523.3L398.7 511.9L401.5 501.0L403.6 490.6L405.2 480.6L406.4 471.0L407.2 461.6L407.6 452.4Z" fill="#e0e300"/>
<path d="M406.7 443.2L406.5 434.2L406.1 425.1L405.3 415.9L404.1 406.3L402.5 396.5L400.4 386.2L397.7 375.4L394.1 364.1L389.6 352.3L383.8 340.1L376.7 327.6L368.0 315.2L357.4 303.1L344.9 292.2L330.5 283.7L314.8 280.2L299.0 283.7L284.6 292.2L272.1 303.1L261.5 315.2L252.8 327.6L245.7 340.1L239.9 352.3L235.4 364.1L231.8 375.4L229.1 386.2L227.0 396.5L225.4 406.3L224.2 415.9L223.4 425.1L223.0 434.2L222.8 443.2L223.0 452.3L223.4 461.4L224.2 470.6L225.4 480.2L227.0 490.0L229.1 500.3L231.8 511.1L235.4 522.4L239.9 534.2L245.7 546.4L252.8 558.9L261.5 571.3L272.1 583.4L284.6 594.3L299.0 602.8L314.7 606.3L330.5 602.8L344.9 594.3L357.4 583.4L368.0 571.3L376.7 558.9L383.8 546.4L389.6 534.2L394.1 522.4L397.7 511.1L400.4 500.3L402.5 490.0L404.1 480.2L405.3 470.6L406.1 461.4L406.5 452.3Z" fill="#e1de00"/>
<path d="M405.5 443.2L405.4 434.3L405.0 425.4L404.2 416.2L403.0 406.8L401.5 397.0L399.4 386.9L396.6 376.2L393.1 365.1L388.6 353.5L383.0 341.4L375.9 329.1L367.2 316.9L356.8 305.1L344.4 294.6L330.2 286.7L314.8 283.6L299.3 286.7L285.1 294.6L272.7 305.1L262.3 316.9L253.6 329.1L246.5 341.4L240.9 353.5L236.4 365.1L232.9 376.2L230.1 386.9L228.0 397.0L226.5 406.8L225.3 416.2L224.5 425.4L224.1 434.3L224.0 443.2L224.1 452.2L224.5 461.1L225.3 470.3L226.5 479.7L228.0 489.5L230.1 499.6L232.9 510.3L236.4 521.4L240.9 533.0L246.5 545.1L253.6 557.4L262.3 569.6L272.7 581.4L285.1 591.9L299.3 599.8L314.7 602.9L330.2 599.8L344.4 591.9L356.8 581.4L367.2 569.6L375.9 557.4L383.0 545.1L388.6 533.0L393.1 521.4L396.6 510.3L399.4 499.6L401.5 489.5L403.0 479.7L404.2 470.3L405.0 461.1L405.4 452.2Z" fill="#e2d900"/>
<path d="M404.4 443.2L404.3 434.5L403.8 425.6L403.1 416.5L401.9 407.2L400.4 397.6L398.3 387.6L395.6 377.1L392.1 366.1L387.7 354.6L382.1 342.7L375.1 330.6L366.5 318.6L356.2 307.1L343.9 297.0L329.9 289.6L314.8 286.8L299.6 289.6L285.6 297.0L273.3 307.1L263.0 318.6L254.4 330.6L247.4 342.7L241.8 354.6L237.4 366.1L233.9 377.1L231.2 387.6L229.1 397.6L227.6 407.2L226.4 416.5L225.7 425.6L225.2 434.5L225.1 443.2L225.2 452.0L225.7 460.9L226.4 470.0L227.6 479.3L229.1 488.9L231.2 498.9L233.9 509.4L237.4 520.4L241.8 531.9L247.4 543.8L254.4 555.9L263.0 567.9L273.3 579.4L285.6 589.5L299.6 596.9L314.7 599.7L329.9 596.9L343.9 589.5L356.2 579.4L366.5 567.9L375.1 555.9L382.1 543.8L387.7 531.9L392.1 520.4L395.6 509.4L398.3 498.9L400.4 488.9L401.9 479.3L403.1 470.0L403.8 460.9L404.3 452.0Z" fill="#e4d500"/>
<path d="M403.3 443.2L403.1 434.6L402.7 425.8L401.9 416.9L400.8 407.7L399.3 398.2L397.2 388.3L394.6 377.9L391.2 367.1L386.8 355.7L381.2 344.0L374.3 332.1L365.8 320.3L355.6 309.1L343.5 299.4L329.7 292.3L314.8 289.7L299.8 292.3L286.0 299.4L273.9 309.1L263.7 320.3L255.2 332.1L248.3 344.0L242.7 355.7L238.3 367.1L234.9 377.9L232.3 388.3L230.2 398.2L228.7 407.7L227.6 416.9L226.8 425.8L226.4 434.6L226.2 443.2L226.4 451.9L226.8 460.7L227.6 469.6L228.7 478.8L230.2 488.3L232.3 498.2L234.9 508.6L238.3 519.4L242.7 530.8L248.3 542.5L255.2 554.4L263.7 566.2L273.9 577.4L286.0 587.1L299.8 594.2L314.8 596.8L329.7 594.2L343.5 587.1L355.6 577.4L365.8 566.2L374.3 554.4L381.2 542.5L386.8 530.8L391.2 519.4L394.6 508.6L397.2 498.2L399.3 488.3L400.8 478.8L401.9 469.6L402.7 460.7L403.1 451.9Z" fill="#e5d000"/>
<path d="M402.1 443.2L402.0 434.7L401.5 426.0L400.8 417.2L399.7 408.2L398.2 398.8L396.2 389.0L393.5 378.8L390.2 368.1L385.8 356.9L380.4 345.3L373.5 333.6L365.1 322.0L355.0 311.1L343.0 301.7L329.4 294.9L314.8 292.4L300.1 294.9L286.5 301.7L274.5 311.1L264.4 322.0L256.0 333.6L249.1 345.3L243.7 356.9L239.3 368.1L236.0 378.8L233.3 389.0L231.3 398.8L229.8 408.2L228.7 417.2L228.0 426.0L227.5 434.7L227.4 443.2L227.5 451.8L228.0 460.5L228.7 469.3L229.8 478.3L231.3 487.7L233.3 497.5L236.0 507.7L239.3 518.4L243.7 529.6L249.1 541.2L256.0 552.9L264.4 564.5L274.5 575.4L286.5 584.8L300.1 591.6L314.8 594.1L329.4 591.6L343.0 584.8L355.0 575.4L365.1 564.5L373.5 552.9L380.4 541.2L385.8 529.6L390.2 518.4L393.5 507.7L396.2 497.5L398.2 487.7L399.7 478.3L400.8 469.3L401.5 460.5L402.0 451.8Z" fill="#e7cc00"/>
<path d="M400.9 443.2L400.8 434.8L400.3 426.3L399.6 417.6L398.5 408.6L397.0 399.4L395.1 389.7L392.5 379.6L389.1 369.1L384.9 358.1L379.5 346.7L372.7 335.1L364.4 323.7L354.4 313.1L342.5 303.9L329.1 297.5L314.8 295.1L300.4 297.5L287.0 303.9L275.1 313.1L265.1 323.7L256.8 335.1L250.0 346.7L244.6 358.1L240.4 369.1L237.0 379.6L234.4 389.7L232.5 399.4L231.0 408.6L229.9 417.6L229.2 426.3L228.7 434.8L228.6 443.2L228.7 451.7L229.2 460.2L229.9 468.9L231.0 477.9L232.5 487.1L234.4 496.8L237.0 506.9L240.4 517.4L244.6 528.4L250.0 539.8L256.8 551.4L265.1 562.8L275.1 573.4L287.0 582.6L300.4 589.0L314.8 591.4L329.1 589.0L342.5 582.6L354.4 573.4L364.4 562.8L372.7 551.4L379.5 539.8L384.9 528.4L389.1 517.4L392.5 506.9L395.1 496.8L397.0 487.1L398.5 477.9L399.6 468.9L400.3 460.2L400.8 451.7Z" fill="#e8c800"/>
<path d="M399.7 443.2L399.6 434.9L399.2 426.5L398.4 417.9L397.4 409.1L395.9 400.0L394.0 390.5L391.4 380.5L388.1 370.1L383.9 359.2L378.6 348.0L371.9 336.6L363.7 325.5L353.8 315.0L342.1 306.1L328.9 299.9L314.8 297.7L300.6 299.9L287.4 306.1L275.7 315.0L265.8 325.5L257.6 336.6L250.9 348.0L245.6 359.2L241.4 370.1L238.1 380.5L235.5 390.5L233.6 400.0L232.1 409.1L231.1 417.9L230.3 426.5L229.9 434.9L229.8 443.2L229.9 451.6L230.3 460.0L231.1 468.6L232.1 477.4L233.6 486.5L235.5 496.0L238.1 506.0L241.4 516.4L245.6 527.3L250.9 538.5L257.6 549.9L265.8 561.0L275.7 571.5L287.4 580.4L300.6 586.6L314.8 588.8L328.9 586.6L342.1 580.4L353.8 571.5L363.7 561.0L371.9 549.9L378.6 538.5L383.9 527.3L388.1 516.4L391.4 506.0L394.0 496.0L395.9 486.5L397.4 477.4L398.4 468.6L399.2 460.0L399.6 451.6Z" fill="#eac300"/>
<path d="M398.5 443.2L398.4 435.0L398.0 426.7L397.2 418.3L396.2 409.6L394.8 400.6L392.8 391.2L390.3 381.4L387.1 371.1L382.9 360.4L377.7 349.4L371.1 338.2L363.0 327.2L353.2 317.0L341.7 308.3L328.7 302.4L314.8 300.2L300.8 302.4L287.8 308.3L276.3 317.0L266.5 327.2L258.4 338.2L251.8 349.4L246.6 360.4L242.4 371.1L239.2 381.4L236.7 391.2L234.7 400.6L233.3 409.6L232.3 418.3L231.5 426.7L231.1 435.0L231.0 443.2L231.1 451.5L231.5 459.8L232.3 468.2L233.3 476.9L234.7 485.9L236.7 495.3L239.2 505.1L242.4 515.4L246.6 526.1L251.8 537.1L258.4 548.3L266.5 559.3L276.3 569.5L287.8 578.2L300.8 584.1L314.8 586.3L328.7 584.1L341.7 578.2L353.2 569.5L363.0 559.3L371.1 548.3L377.7 537.1L382.9 526.1L387.1 515.4L390.3 505.1L392.8 495.3L394.8 485.9L396.2 476.9L397.2 468.2L398.0 459.8L398.4 451.5Z" fill="#ebbf00"/>
<path d="M397.3 443.2L397.1 435.2L396.7 427.0L396.0 418.7L395.0 410.1L393.6 401.2L391.7 392.0L389.2 382.3L386.0 372.2L381.9 361.6L376.7 350.7L370.2 339.7L362.2 328.9L352.6 318.9L341.2 310.5L328.4 304.8L314.8 302.7L301.1 304.8L288.3 310.5L276.9 318.9L267.3 328.9L259.3 339.7L252.8 350.7L247.6 361.6L243.5 372.2L240.3 382.3L237.8 392.0L235.9 401.2L234.5 410.1L233.5 418.7L232.8 427.0L232.4 435.2L232.2 443.2L232.4 451.3L232.8 459.5L233.5 467.8L234.5 476.4L235.9 485.3L237.8 494.5L240.3 504.2L243.5 514.3L247.6 524.9L252.8 535.8L259.3 546.8L267.3 557.6L276.9 567.6L288.3 576.0L301.1 581.7L314.8 583.8L328.4 581.7L341.2 576.0L352.6 567.6L362.2 557.6L370.2 546.8L376.7 535.8L381.9 524.9L386.0 514.3L389.2 504.2L391.7 494.5L393.6 485.3L395.0 476.4L396.0 467.8L396.7 459.5L397.1 451.3Z" fill="#edba00"/>
<path d="M396.0 443.2L395.9 435.3L395.5 427.2L394.8 419.0L393.8 410.6L392.4 401.9L390.5 392.8L388.1 383.2L384.9 373.2L380.9 362.9L375.8 352.1L369.4 341.3L361.5 330.7L352.0 320.9L340.8 312.7L328.2 307.1L314.8 305.1L301.3 307.1L288.7 312.7L277.5 320.9L268.0 330.7L260.1 341.3L253.7 352.1L248.6 362.9L244.6 373.2L241.4 383.2L239.0 392.8L237.1 401.9L235.7 410.6L234.7 419.0L234.0 427.2L233.6 435.3L233.5 443.2L233.6 451.2L234.0 459.3L234.7 467.5L235.7 475.9L237.1 484.6L239.0 493.7L241.4 503.3L244.6 513.3L248.6 523.6L253.7 534.4L260.1 545.2L268.0 555.8L277.5 565.6L288.7 573.8L301.3 579.4L314.8 581.4L328.2 579.4L340.8 573.8L352.0 565.6L361.5 555.8L369.4 545.2L375.8 534.4L380.9 523.6L384.9 513.3L388.1 503.3L390.5 493.7L392.4 484.6L393.8 475.9L394.8 467.5L395.5 459.3L395.9 451.2Z" fill="#eeb600"/>
<path d="M394.8 443.2L394.6 435.4L394.2 427.5L393.6 419.4L392.6 411.1L391.2 402.5L389.4 393.5L387.0 384.2L383.9 374.3L379.9 364.1L374.9 353.5L368.6 342.9L360.8 332.5L351.4 322.9L340.4 314.9L328.0 309.5L314.8 307.5L301.5 309.5L289.1 314.9L278.1 322.9L268.7 332.5L260.9 342.9L254.6 353.5L249.6 364.1L245.6 374.3L242.5 384.2L240.1 393.5L238.3 402.5L236.9 411.1L235.9 419.4L235.3 427.5L234.9 435.4L234.7 443.2L234.9 451.1L235.3 459.0L235.9 467.1L236.9 475.4L238.3 484.0L240.1 493.0L242.5 502.3L245.6 512.2L249.6 522.4L254.6 533.0L260.9 543.6L268.7 554.0L278.1 563.6L289.1 571.6L301.5 577.0L314.8 579.0L328.0 577.0L340.4 571.6L351.4 563.6L360.8 554.0L368.6 543.6L374.9 533.0L379.9 522.4L383.9 512.2L387.0 502.3L389.4 493.0L391.2 484.0L392.6 475.4L393.6 467.1L394.2 459.0L394.6 451.1Z" fill="#f0b100"/>
<path d="M393.5 443.2L393.4 435.5L393.0 427.7L392.3 419.8L391.3 411.6L390.0 403.2L388.2 394.3L385.8 385.1L382.8 375.4L378.9 365.3L373.9 355.0L367.7 344.5L360.0 334.3L350.8 324.9L339.9 317.1L327.7 311.8L314.8 309.9L301.8 311.8L289.6 317.1L278.7 324.9L269.5 334.3L261.8 344.5L255.6 355.0L250.6 365.3L246.7 375.4L243.7 385.1L241.3 394.3L239.5 403.2L238.2 411.6L237.2 419.8L236.5 427.7L236.1 435.5L236.0 443.2L236.1 451.0L236.5 458.8L237.2 466.7L238.2 474.9L239.5 483.3L241.3 492.2L243.7 501.4L246.7 511.1L250.6 521.2L255.6 531.5L261.8 542.0L269.5 552.2L278.7 561.6L289.6 569.4L301.8 574.7L314.8 576.6L327.7 574.7L339.9 569.4L350.8 561.6L360.0 552.2L367.7 542.0L373.9 531.5L378.9 521.2L382.8 511.1L385.8 501.4L388.2 492.2L390.0 483.3L391.3 474.9L392.3 466.7L393.0 458.8L393.4 451.0Z" fill="#f0aa00"/>
<path d="M392.2 443.2L392.1 435.7L391.7 428.0L391.0 420.2L390.1 412.1L388.7 403.8L387.0 395.1L384.6 386.0L381.7 376.5L377.8 366.6L372.9 356.4L366.8 346.1L359.3 336.1L350.2 326.9L339.5 319.2L327.5 314.1L314.8 312.3L302.0 314.1L290.0 319.2L279.3 326.9L270.2 336.1L262.7 346.1L256.6 356.4L251.7 366.6L247.8 376.5L244.9 386.0L242.5 395.1L240.8 403.8L239.4 412.1L238.5 420.2L237.8 428.0L237.4 435.7L237.3 443.2L237.4 450.8L237.8 458.5L238.5 466.3L239.4 474.4L240.8 482.7L242.5 491.4L244.9 500.5L247.8 510.0L251.7 519.9L256.6 530.1L262.7 540.4L270.2 550.4L279.3 559.6L290.0 567.3L302.0 572.4L314.8 574.2L327.5 572.4L339.5 567.3L350.2 559.6L359.3 550.4L366.8 540.4L372.9 530.1L377.8 519.9L381.7 510.0L384.6 500.5L387.0 491.4L388.7 482.7L390.1 474.4L391.0 466.3L391.7 458.5L392.1 450.8Z" fill="#f0a100"/>
<path d="M390.9 443.2L390.7 435.8L390.4 428.3L389.7 420.6L388.8 412.7L387.5 404.5L385.7 396.0L383.5 387.0L380.5 377.7L376.8 367.9L372.0 357.9L365.9 347.7L358.5 337.9L349.5 328.9L339.0 321.4L327.3 316.4L314.8 314.7L302.2 316.4L290.5 321.4L280.0 328.9L271.0 337.9L263.6 347.7L257.5 357.9L252.7 367.9L249.0 377.7L246.0 387.0L243.8 396.0L242.0 404.5L240.7 412.7L239.8 420.6L239.1 428.3L238.8 435.8L238.6 443.2L238.8 450.7L239.1 458.2L239.8 465.9L240.7 473.8L242.0 482.0L243.8 490.5L246.0 499.5L249.0 508.8L252.7 518.6L257.5 528.6L263.6 538.8L271.0 548.6L280.0 557.6L290.5 565.1L302.2 570.1L314.8 571.8L327.3 570.1L339.0 565.1L349.5 557.6L358.5 548.6L365.9 538.8L372.0 528.6L376.8 518.6L380.5 508.8L383.5 499.5L385.7 490.5L387.5 482.0L388.8 473.8L389.7 465.9L390.4 458.2L390.7 450.7Z" fill="#f09800"/>
<path d="M389.5 443.2L389.4 435.9L389.0 428.5L388.4 421.0L387.5 413.2L386.2 405.2L384.5 396.8L382.3 388.0L379.4 378.8L375.7 369.2L371.0 359.4L365.1 349.4L357.7 339.7L348.9 330.9L338.6 323.6L327.0 318.8L314.8 317.0L302.5 318.8L290.9 323.6L280.6 330.9L271.8 339.7L264.4 349.4L258.5 359.4L253.8 369.2L250.1 378.8L247.2 388.0L245.0 396.8L243.3 405.2L242.0 413.2L241.1 421.0L240.5 428.5L240.1 435.9L240.0 443.2L240.1 450.6L240.5 458.0L241.1 465.5L242.0 473.3L243.3 481.3L245.0 489.7L247.2 498.5L250.1 507.7L253.8 517.3L258.5 527.1L264.4 537.1L271.8 546.8L280.6 555.6L290.9 562.9L302.5 567.7L314.8 569.5L327.0 567.7L338.6 562.9L348.9 555.6L357.7 546.8L365.1 537.1L371.0 527.1L375.7 517.3L379.4 507.7L382.3 498.5L384.5 489.7L386.2 481.3L387.5 473.3L388.4 465.5L389.0 458.0L389.4 450.6Z" fill="#f08f00"/>
<path d="M388.1 443.2L388.0 436.1L387.7 428.8L387.1 421.4L386.1 413.8L384.9 405.9L383.2 397.6L381.0 389.0L378.2 380.0L374.6 370.6L370.0 360.9L364.1 351.1L357.0 341.6L348.3 333.0L338.2 325.8L326.8 321.1L314.8 319.4L302.7 321.1L291.3 325.8L281.2 333.0L272.5 341.6L265.4 351.1L259.5 360.9L254.9 370.6L251.3 380.0L248.5 389.0L246.3 397.6L244.6 405.9L243.4 413.8L242.4 421.4L241.8 428.8L241.5 436.1L241.4 443.2L241.5 450.4L241.8 457.7L242.4 465.1L243.4 472.7L244.6 480.6L246.3 488.9L248.5 497.5L251.3 506.5L254.9 515.9L259.5 525.6L265.4 535.4L272.5 544.9L281.2 553.5L291.3 560.7L302.7 565.4L314.8 567.1L326.8 565.4L338.2 560.7L348.3 553.5L357.0 544.9L364.1 535.4L370.0 525.6L374.6 515.9L378.2 506.5L381.0 497.5L383.2 488.9L384.9 480.6L386.1 472.7L387.1 465.1L387.7 457.7L388.0 450.4Z" fill="#f08600"/>
<path d="M386.8 443.2L386.6 436.2L386.3 429.1L385.7 421.8L384.8 414.3L383.6 406.6L381.9 398.5L379.8 390.0L377.0 381.2L373.5 371.9L368.9 362.4L363.2 352.8L356.2 343.5L347.7 335.0L337.7 328.1L326.6 323.4L314.8 321.8L302.9 323.4L291.8 328.1L281.8 335.0L273.3 343.5L266.3 352.8L260.6 362.4L256.0 371.9L252.5 381.2L249.7 390.0L247.6 398.5L245.9 406.6L244.7 414.3L243.8 421.8L243.2 429.1L242.9 436.2L242.7 443.2L242.9 450.3L243.2 457.4L243.8 464.7L244.7 472.2L245.9 479.9L247.6 488.0L249.7 496.5L252.5 505.3L256.0 514.6L260.6 524.1L266.3 533.7L273.3 543.0L281.8 551.5L291.8 558.4L302.9 563.1L314.8 564.7L326.6 563.1L337.7 558.4L347.7 551.5L356.2 543.0L363.2 533.7L368.9 524.1L373.5 514.6L377.0 505.3L379.8 496.5L381.9 488.0L383.6 479.9L384.8 472.2L385.7 464.7L386.3 457.4L386.6 450.3Z" fill="#f07c00"/>
<path d="M385.3 443.2L385.2 436.3L384.9 429.3L384.3 422.2L383.4 414.9L382.2 407.3L380.6 399.4L378.5 391.1L375.8 382.4L372.3 373.3L367.9 364.0L362.3 354.6L355.4 345.4L347.0 337.1L337.3 330.3L326.3 325.8L314.8 324.2L303.2 325.8L292.2 330.3L282.5 337.1L274.1 345.4L267.2 354.6L261.6 364.0L257.2 373.3L253.7 382.4L251.0 391.1L248.9 399.4L247.3 407.3L246.1 414.9L245.2 422.2L244.6 429.3L244.3 436.3L244.2 443.2L244.3 450.2L244.6 457.2L245.2 464.3L246.1 471.6L247.3 479.2L248.9 487.1L251.0 495.4L253.7 504.1L257.2 513.2L261.6 522.5L267.2 531.9L274.1 541.1L282.5 549.4L292.2 556.2L303.2 560.7L314.8 562.3L326.3 560.7L337.3 556.2L347.0 549.4L355.4 541.1L362.3 531.9L367.9 522.5L372.3 513.2L375.8 504.1L378.5 495.4L380.6 487.1L382.2 479.2L383.4 471.6L384.3 464.3L384.9 457.2L385.2 450.2Z" fill="#f07100"/>
<path d="M383.9 443.2L383.8 436.5L383.5 429.6L382.9 422.6L382.0 415.5L380.8 408.0L379.3 400.3L377.2 392.1L374.6 383.6L371.2 374.7L366.8 365.6L361.3 356.3L354.6 347.4L346.4 339.3L336.8 332.6L326.1 328.2L314.8 326.7L303.4 328.2L292.7 332.6L283.1 339.3L274.9 347.4L268.2 356.3L262.7 365.6L258.3 374.7L254.9 383.6L252.3 392.1L250.2 400.3L248.7 408.0L247.5 415.5L246.6 422.6L246.0 429.6L245.7 436.5L245.6 443.2L245.7 450.0L246.0 456.9L246.6 463.9L247.5 471.0L248.7 478.5L250.2 486.2L252.3 494.4L254.9 502.9L258.3 511.8L262.7 520.9L268.2 530.2L274.9 539.1L283.1 547.2L292.7 553.9L303.4 558.3L314.8 559.8L326.1 558.3L336.8 553.9L346.4 547.2L354.6 539.1L361.3 530.2L366.8 520.9L371.2 511.8L374.6 502.9L377.2 494.4L379.3 486.2L380.8 478.5L382.0 471.0L382.9 463.9L383.5 456.9L383.8 450.0Z" fill="#f06500"/>
<path d="M382.4 443.2L382.3 436.6L382.0 429.9L381.4 423.1L380.6 416.1L379.4 408.8L377.9 401.2L375.9 393.2L373.3 384.9L370.0 376.2L365.7 367.2L360.4 358.2L353.7 349.4L345.7 341.4L336.4 334.9L325.9 330.6L314.8 329.1L303.6 330.6L293.1 334.9L283.8 341.4L275.8 349.4L269.1 358.2L263.8 367.2L259.5 376.2L256.2 384.9L253.6 393.2L251.6 401.2L250.1 408.8L248.9 416.1L248.1 423.1L247.5 429.9L247.2 436.6L247.1 443.2L247.2 449.9L247.5 456.6L248.1 463.4L248.9 470.4L250.1 477.7L251.6 485.3L253.6 493.3L256.2 501.6L259.5 510.3L263.8 519.3L269.1 528.3L275.8 537.1L283.8 545.1L293.1 551.6L303.6 555.9L314.8 557.4L325.9 555.9L336.4 551.6L345.7 545.1L353.7 537.1L360.4 528.3L365.7 519.3L370.0 510.3L373.3 501.6L375.9 493.3L377.9 485.3L379.4 477.7L380.6 470.4L381.4 463.4L382.0 456.6L382.3 449.9Z" fill="#f05900"/>
<path d="M380.9 443.2L380.8 436.8L380.5 430.2L379.9 423.5L379.1 416.7L378.0 409.5L376.5 402.1L374.6 394.3L372.0 386.1L368.8 377.6L364.6 368.8L359.4 360.0L352.9 351.4L345.0 343.7L335.9 337.3L325.6 333.1L314.8 331.6L303.9 333.1L293.6 337.3L284.5 343.7L276.6 351.4L270.1 360.0L264.9 368.8L260.7 377.6L257.5 386.1L254.9 394.3L253.0 402.1L251.5 409.5L250.4 416.7L249.6 423.5L249.0 430.2L248.7 436.8L248.6 443.2L248.7 449.7L249.0 456.3L249.6 463.0L250.4 469.8L251.5 477.0L253.0 484.4L254.9 492.2L257.5 500.4L260.7 508.9L264.9 517.7L270.1 526.5L276.6 535.1L284.5 542.8L293.6 549.2L303.9 553.4L314.8 554.9L325.6 553.4L335.9 549.2L345.0 542.8L352.9 535.1L359.4 526.5L364.6 517.7L368.8 508.9L372.0 500.4L374.6 492.2L376.5 484.4L378.0 477.0L379.1 469.8L379.9 463.0L380.5 456.3L380.8 449.7Z" fill="#f04d00"/>
<path d="M379.4 443.2L379.3 436.9L379.0 430.5L378.4 424.0L377.6 417.3L376.5 410.3L375.1 403.1L373.2 395.4L370.7 387.5L367.5 379.1L363.5 370.5L358.4 361.9L352.0 353.5L344.4 345.9L335.4 339.7L325.4 335.6L314.8 334.2L304.1 335.6L294.1 339.7L285.1 345.9L277.5 353.5L271.1 361.9L266.0 370.5L262.0 379.1L258.8 387.5L256.3 395.4L254.4 403.1L253.0 410.3L251.9 417.3L251.1 424.0L250.5 430.5L250.2 436.9L250.1 443.2L250.2 449.6L250.5 456.0L251.1 462.5L251.9 469.2L253.0 476.2L254.4 483.4L256.3 491.1L258.8 499.0L262.0 507.4L266.0 516.0L271.1 524.6L277.5 533.0L285.1 540.6L294.1 546.8L304.1 550.9L314.8 552.3L325.4 550.9L335.4 546.8L344.4 540.6L352.0 533.0L358.4 524.6L363.5 516.0L367.5 507.4L370.7 499.0L373.2 491.1L375.1 483.4L376.5 476.2L377.6 469.2L378.4 462.5L379.0 456.0L379.3 449.6Z" fill="#f04100"/>
<path d="M377.8 443.2L377.7 437.1L377.4 430.8L376.9 424.5L376.1 417.9L375.0 411.1L373.6 404.0L371.8 396.6L369.4 388.8L366.3 380.7L362.3 372.3L357.3 363.8L351.1 355.6L343.7 348.2L334.9 342.1L325.1 338.1L314.8 336.7L304.4 338.1L294.6 342.1L285.8 348.2L278.4 355.6L272.2 363.8L267.2 372.3L263.2 380.7L260.1 388.8L257.7 396.6L255.9 404.0L254.5 411.1L253.4 417.9L252.6 424.5L252.1 430.8L251.8 437.1L251.7 443.2L251.8 449.4L252.1 455.7L252.6 462.0L253.4 468.6L254.5 475.4L255.9 482.5L257.7 489.9L260.1 497.7L263.2 505.8L267.2 514.2L272.2 522.7L278.4 530.9L285.8 538.3L294.6 544.4L304.4 548.4L314.8 549.8L325.1 548.4L334.9 544.4L343.7 538.3L351.1 530.9L357.3 522.7L362.3 514.2L366.3 505.8L369.4 497.7L371.8 489.9L373.6 482.5L375.0 475.4L376.1 468.6L376.9 462.0L377.4 455.7L377.7 449.4Z" fill="#f03500"/>
<path d="M376.2 443.2L376.1 437.2L375.8 431.1L375.3 424.9L374.5 418.6L373.5 411.9L372.1 405.0L370.3 397.8L368.0 390.2L365.0 382.2L361.1 374.1L356.3 365.8L350.2 357.8L342.9 350.6L334.4 344.6L324.9 340.7L314.8 339.4L304.6 340.7L295.1 344.6L286.6 350.6L279.3 357.8L273.2 365.8L268.4 374.1L264.5 382.2L261.5 390.2L259.2 397.8L257.4 405.0L256.0 411.9L255.0 418.6L254.2 424.9L253.7 431.1L253.4 437.2L253.3 443.2L253.4 449.3L253.7 455.4L254.2 461.6L255.0 467.9L256.0 474.6L257.4 481.5L259.2 488.7L261.5 496.3L264.5 504.3L268.4 512.4L273.2 520.7L279.3 528.7L286.6 535.9L295.1 541.9L304.6 545.8L314.8 547.1L324.9 545.8L334.4 541.9L342.9 535.9L350.2 528.7L356.3 520.7L361.1 512.4L365.0 504.3L368.0 496.3L370.3 488.7L372.1 481.5L373.5 474.6L374.5 467.9L375.3 461.6L375.8 455.4L376.1 449.3Z" fill="#f02900"/>
<path d="M374.5 443.2L374.4 437.4L374.2 431.5L373.7 425.4L372.9 419.2L371.9 412.8L370.6 406.0L368.8 399.0L366.6 391.6L363.6 383.9L359.9 375.9L355.2 367.8L349.3 360.0L342.2 353.0L333.9 347.2L324.6 343.4L314.8 342.1L304.9 343.4L295.6 347.2L287.3 353.0L280.2 360.0L274.3 367.8L269.6 375.9L265.9 383.9L262.9 391.6L260.7 399.0L258.9 406.0L257.6 412.8L256.6 419.2L255.8 425.4L255.3 431.5L255.1 437.4L255.0 443.2L255.1 449.1L255.3 455.0L255.8 461.1L256.6 467.3L257.6 473.7L258.9 480.5L260.7 487.5L262.9 494.9L265.9 502.6L269.6 510.6L274.3 518.7L280.2 526.5L287.3 533.5L295.6 539.3L304.9 543.1L314.8 544.4L324.6 543.1L333.9 539.3L342.2 533.5L349.3 526.5L355.2 518.7L359.9 510.6L363.6 502.6L366.6 494.9L368.8 487.5L370.6 480.5L371.9 473.7L372.9 467.3L373.7 461.1L374.2 455.0L374.4 449.1Z" fill="#f01d00"/>
<path d="M372.8 443.2L372.7 437.6L372.5 431.8L372.0 425.9L371.3 419.9L370.3 413.6L369.0 407.1L367.3 400.2L365.1 393.0L362.3 385.5L358.6 377.8L354.1 369.9L348.4 362.3L341.5 355.4L333.4 349.8L324.3 346.1L314.8 344.8L305.2 346.1L296.1 349.8L288.0 355.4L281.1 362.3L275.4 369.9L270.9 377.8L267.2 385.5L264.4 393.0L262.2 400.2L260.5 407.1L259.2 413.6L258.2 419.9L257.5 425.9L257.0 431.8L256.8 437.6L256.7 443.2L256.8 448.9L257.0 454.7L257.5 460.6L258.2 466.6L259.2 472.9L260.5 479.4L262.2 486.3L264.4 493.5L267.2 501.0L270.9 508.7L275.4 516.6L281.1 524.2L288.0 531.1L296.1 536.7L305.2 540.4L314.8 541.7L324.3 540.4L333.4 536.7L341.5 531.1L348.4 524.2L354.1 516.6L358.6 508.7L362.3 501.0L365.1 493.5L367.3 486.3L369.0 479.4L370.3 472.9L371.3 466.6L372.0 460.6L372.5 454.7L372.7 448.9Z" fill="#f01000"/>
<path d="M371.1 443.2L371.0 437.7L370.7 432.1L370.3 426.5L369.6 420.6L368.6 414.5L367.4 408.2L365.7 401.5L363.6 394.5L360.8 387.2L357.3 379.7L352.9 372.1L347.4 364.7L340.7 358.0L332.9 352.5L324.1 348.9L314.8 347.6L305.4 348.9L296.6 352.5L288.8 358.0L282.1 364.7L276.6 372.1L272.2 379.7L268.7 387.2L265.9 394.5L263.8 401.5L262.1 408.2L260.9 414.5L259.9 420.6L259.2 426.5L258.8 432.1L258.5 437.7L258.4 443.2L258.5 448.8L258.8 454.4L259.2 460.0L259.9 465.9L260.9 472.0L262.1 478.3L263.8 485.0L265.9 492.0L268.7 499.3L272.2 506.8L276.6 514.4L282.1 521.8L288.8 528.5L296.6 534.0L305.4 537.6L314.8 538.9L324.1 537.6L332.9 534.0L340.7 528.5L347.4 521.8L352.9 514.4L357.3 506.8L360.8 499.3L363.6 492.0L365.7 485.0L367.4 478.3L368.6 472.0L369.6 465.9L370.3 460.0L370.7 454.4L371.0 448.8Z" fill="#f00400"/>
<path d="M369.3 443.2L369.2 437.9L368.9 432.5L368.5 427.0L367.8 421.3L366.9 415.4L365.7 409.3L364.1 402.9L362.0 396.1L359.4 389.0L356.0 381.7L351.7 374.3L346.4 367.1L339.9 360.6L332.3 355.3L323.8 351.8L314.8 350.6L305.7 351.8L297.2 355.3L289.6 360.6L283.1 367.1L277.8 374.3L273.5 381.7L270.1 389.0L267.5 396.1L265.4 402.9L263.8 409.3L262.6 415.4L261.7 421.3L261.0 427.0L260.6 432.5L260.3 437.9L260.2 443.2L260.3 448.6L260.6 454.0L261.0 459.5L261.7 465.2L262.6 471.1L263.8 477.2L265.4 483.6L267.5 490.4L270.1 497.5L273.5 504.8L277.8 512.2L283.1 519.4L289.6 525.9L297.2 531.2L305.7 534.7L314.8 535.9L323.8 534.7L332.3 531.2L339.9 525.9L346.4 519.4L351.7 512.2L356.0 504.8L359.4 497.5L362.0 490.4L364.1 483.6L365.7 477.2L366.9 471.1L367.8 465.2L368.5 459.5L368.9 454.0L369.2 448.6Z" fill="#ee0000"/>
<path d="M367.4 443.2L367.3 438.1L367.1 432.9L366.7 427.5L366.0 422.1L365.1 416.4L364.0 410.5L362.4 404.2L360.4 397.7L357.9 390.8L354.6 383.7L350.5 376.6L345.3 369.6L339.1 363.3L331.7 358.2L323.5 354.8L314.8 353.6L306.0 354.8L297.8 358.2L290.4 363.3L284.2 369.6L279.0 376.6L274.9 383.7L271.6 390.8L269.1 397.7L267.1 404.2L265.5 410.5L264.4 416.4L263.5 422.1L262.8 427.5L262.4 432.9L262.2 438.1L262.1 443.2L262.2 448.4L262.4 453.6L262.8 459.0L263.5 464.4L264.4 470.1L265.5 476.0L267.1 482.3L269.1 488.8L271.6 495.7L274.9 502.8L279.0 509.9L284.2 516.9L290.4 523.2L297.8 528.3L306.0 531.7L314.8 532.9L323.5 531.7L331.7 528.3L339.1 523.2L345.3 516.9L350.5 509.9L354.6 502.8L357.9 495.7L360.4 488.8L362.4 482.3L364.0 476.0L365.1 470.1L366.0 464.4L366.7 459.0L367.1 453.6L367.3 448.4Z" fill="#eb0000"/>
<path d="M365.5 443.2L365.4 438.3L365.2 433.2L364.8 428.1L364.1 422.8L363.3 417.4L362.2 411.7L360.7 405.6L358.8 399.3L356.3 392.7L353.2 385.9L349.2 379.0L344.2 372.2L338.2 366.1L331.1 361.1L323.2 357.8L314.8 356.7L306.3 357.8L298.4 361.1L291.3 366.1L285.3 372.2L280.3 379.0L276.3 385.9L273.2 392.7L270.7 399.3L268.8 405.6L267.3 411.7L266.2 417.4L265.4 422.8L264.7 428.1L264.3 433.2L264.1 438.3L264.0 443.2L264.1 448.2L264.3 453.3L264.7 458.4L265.4 463.7L266.2 469.1L267.3 474.8L268.8 480.9L270.7 487.2L273.2 493.8L276.3 500.6L280.3 507.5L285.3 514.3L291.3 520.4L298.4 525.4L306.3 528.7L314.8 529.8L323.2 528.7L331.1 525.4L338.2 520.4L344.2 514.3L349.2 507.5L353.2 500.6L356.3 493.8L358.8 487.2L360.7 480.9L362.2 474.8L363.3 469.1L364.1 463.7L364.8 458.4L365.2 453.3L365.4 448.2Z" fill="#e80000"/>
<path d="M363.5 443.2L363.4 438.5L363.2 433.6L362.8 428.7L362.2 423.7L361.4 418.4L360.3 412.9L358.9 407.1L357.1 401.1L354.7 394.7L351.7 388.1L347.9 381.4L343.1 374.9L337.3 369.0L330.5 364.2L322.9 361.0L314.8 359.9L306.6 361.0L299.0 364.2L292.2 369.0L286.4 374.9L281.6 381.4L277.8 388.1L274.8 394.7L272.4 401.1L270.6 407.1L269.2 412.9L268.1 418.4L267.3 423.7L266.7 428.7L266.3 433.6L266.1 438.5L266.0 443.2L266.1 448.0L266.3 452.9L266.7 457.8L267.3 462.8L268.1 468.1L269.2 473.6L270.6 479.4L272.4 485.4L274.8 491.8L277.8 498.4L281.6 505.1L286.4 511.6L292.2 517.5L299.0 522.3L306.6 525.5L314.8 526.6L322.9 525.5L330.5 522.3L337.3 517.5L343.1 511.6L347.9 505.1L351.7 498.4L354.7 491.8L357.1 485.4L358.9 479.4L360.3 473.6L361.4 468.1L362.2 462.8L362.8 457.8L363.2 452.9L363.4 448.0Z" fill="#e50000"/>
<path d="M361.4 443.2L361.3 438.7L361.1 434.1L360.7 429.3L360.2 424.5L359.4 419.5L358.4 414.2L357.0 408.7L355.3 402.8L353.0 396.7L350.1 390.4L346.5 384.0L341.9 377.8L336.4 372.1L329.9 367.4L322.5 364.4L314.8 363.3L307.0 364.4L299.6 367.4L293.1 372.1L287.6 377.8L283.0 384.0L279.4 390.4L276.5 396.7L274.2 402.8L272.5 408.7L271.1 414.2L270.1 419.5L269.3 424.5L268.8 429.3L268.4 434.1L268.2 438.7L268.1 443.2L268.2 447.8L268.4 452.4L268.8 457.2L269.3 462.0L270.1 467.0L271.1 472.3L272.5 477.8L274.2 483.7L276.5 489.8L279.4 496.1L283.0 502.5L287.6 508.7L293.1 514.4L299.6 519.1L307.0 522.1L314.8 523.2L322.5 522.1L329.9 519.1L336.4 514.4L341.9 508.7L346.5 502.5L350.1 496.1L353.0 489.8L355.3 483.7L357.0 477.8L358.4 472.3L359.4 467.0L360.2 462.0L360.7 457.2L361.1 452.4L361.3 447.8Z" fill="#e20000"/>
<path d="M359.2 443.2L359.1 438.9L358.9 434.5L358.6 430.0L358.0 425.4L357.3 420.6L356.3 415.5L355.0 410.3L353.4 404.7L351.3 398.9L348.5 392.9L345.0 386.7L340.7 380.7L335.4 375.3L329.2 370.8L322.2 367.9L314.8 366.8L307.3 367.9L300.3 370.8L294.1 375.3L288.8 380.7L284.5 386.7L281.0 392.9L278.2 398.9L276.1 404.7L274.5 410.3L273.2 415.5L272.2 420.6L271.5 425.4L270.9 430.0L270.6 434.5L270.4 438.9L270.3 443.2L270.4 447.6L270.6 452.0L270.9 456.5L271.5 461.1L272.2 465.9L273.2 471.0L274.5 476.2L276.1 481.8L278.2 487.6L281.0 493.6L284.5 499.8L288.8 505.8L294.1 511.2L300.3 515.7L307.3 518.6L314.8 519.7L322.2 518.6L329.2 515.7L335.4 511.2L340.7 505.8L345.0 499.8L348.5 493.6L351.3 487.6L353.4 481.8L355.0 476.2L356.3 471.0L357.3 465.9L358.0 461.1L358.6 456.5L358.9 452.0L359.1 447.6Z" fill="#df0000"/>
<path d="M356.9 443.2L356.9 439.1L356.7 434.9L356.3 430.7L355.8 426.3L355.1 421.7L354.2 417.0L353.0 412.0L351.4 406.7L349.4 401.2L346.8 395.4L343.5 389.6L339.4 383.9L334.4 378.7L328.5 374.4L321.8 371.6L314.8 370.6L307.7 371.6L301.0 374.4L295.1 378.7L290.1 383.9L286.0 389.6L282.7 395.4L280.1 401.2L278.1 406.7L276.5 412.0L275.3 417.0L274.4 421.7L273.7 426.3L273.2 430.7L272.8 434.9L272.6 439.1L272.6 443.2L272.6 447.4L272.8 451.6L273.2 455.8L273.7 460.2L274.4 464.8L275.3 469.5L276.5 474.5L278.1 479.8L280.1 485.3L282.7 491.1L286.0 496.9L290.1 502.6L295.1 507.8L301.0 512.1L307.7 514.9L314.8 515.9L321.8 514.9L328.5 512.1L334.4 507.8L339.4 502.6L343.5 496.9L346.8 491.1L349.4 485.3L351.4 479.8L353.0 474.5L354.2 469.5L355.1 464.8L355.8 460.2L356.3 455.8L356.7 451.6L356.9 447.4Z" fill="#dc0000"/>
<path d="M354.5 443.2L354.4 439.4L354.3 435.4L353.9 431.4L353.5 427.3L352.8 423.0L351.9 418.5L350.8 413.8L349.3 408.8L347.4 403.5L345.0 398.1L341.9 392.6L338.0 387.2L333.3 382.2L327.7 378.2L321.4 375.5L314.8 374.6L308.1 375.5L301.8 378.2L296.2 382.2L291.5 387.2L287.6 392.6L284.5 398.1L282.1 403.5L280.2 408.8L278.7 413.8L277.6 418.5L276.7 423.0L276.0 427.3L275.6 431.4L275.2 435.4L275.1 439.4L275.0 443.2L275.1 447.1L275.2 451.1L275.6 455.1L276.0 459.2L276.7 463.5L277.6 468.0L278.7 472.7L280.2 477.7L282.1 483.0L284.5 488.4L287.6 493.9L291.5 499.3L296.2 504.3L301.8 508.3L308.1 511.0L314.8 511.9L321.4 511.0L327.7 508.3L333.3 504.3L338.0 499.3L341.9 493.9L345.0 488.4L347.4 483.0L349.3 477.7L350.8 472.7L351.9 468.0L352.8 463.5L353.5 459.2L353.9 455.1L354.3 451.1L354.4 447.1Z" fill="#d90000"/>
<path d="M351.9 443.2L351.9 439.6L351.7 435.9L351.4 432.2L350.9 428.3L350.3 424.3L349.5 420.1L348.5 415.7L347.1 411.0L345.3 406.1L343.1 401.0L340.2 395.8L336.6 390.7L332.1 386.1L326.9 382.2L321.0 379.7L314.8 378.8L308.5 379.7L302.6 382.2L297.4 386.1L292.9 390.7L289.3 395.8L286.4 401.0L284.2 406.1L282.4 411.0L281.0 415.7L280.0 420.1L279.2 424.3L278.6 428.3L278.1 432.2L277.8 435.9L277.6 439.6L277.6 443.2L277.6 446.9L277.8 450.6L278.1 454.3L278.6 458.2L279.2 462.2L280.0 466.4L281.0 470.8L282.4 475.5L284.2 480.4L286.4 485.5L289.3 490.7L292.9 495.8L297.4 500.4L302.6 504.3L308.5 506.8L314.8 507.7L321.0 506.8L326.9 504.3L332.1 500.4L336.6 495.8L340.2 490.7L343.1 485.5L345.3 480.4L347.1 475.5L348.5 470.8L349.5 466.4L350.3 462.2L350.9 458.2L351.4 454.3L351.7 450.6L351.9 446.9Z" fill="#d60000"/>
<path d="M349.2 443.2L349.1 439.9L348.9 436.5L348.7 433.0L348.3 429.4L347.7 425.7L346.9 421.8L346.0 417.7L344.7 413.4L343.1 408.8L341.0 404.1L338.3 399.3L335.0 394.5L330.9 390.2L326.0 386.6L320.6 384.2L314.8 383.4L308.9 384.2L303.5 386.6L298.6 390.2L294.5 394.5L291.2 399.3L288.5 404.1L286.4 408.8L284.8 413.4L283.5 417.7L282.6 421.8L281.8 425.7L281.2 429.4L280.8 433.0L280.6 436.5L280.4 439.9L280.3 443.2L280.4 446.6L280.6 450.0L280.8 453.5L281.2 457.1L281.8 460.8L282.6 464.7L283.5 468.8L284.8 473.1L286.4 477.7L288.5 482.4L291.2 487.2L294.5 492.0L298.6 496.3L303.5 499.9L308.9 502.3L314.8 503.1L320.6 502.3L326.0 499.9L330.9 496.3L335.0 492.0L338.3 487.2L341.0 482.4L343.1 477.7L344.7 473.1L346.0 468.8L346.9 464.7L347.7 460.8L348.3 457.1L348.7 453.5L348.9 450.0L349.1 446.6Z" fill="#d30000"/>
<path d="M346.2 443.2L346.1 440.2L346.0 437.1L345.7 433.9L345.3 430.6L344.8 427.2L344.1 423.7L343.3 419.9L342.1 416.0L340.6 411.8L338.7 407.5L336.3 403.1L333.2 398.7L329.5 394.7L325.1 391.4L320.1 389.2L314.8 388.4L309.4 389.2L304.4 391.4L300.0 394.7L296.3 398.7L293.2 403.1L290.8 407.5L288.9 411.8L287.4 416.0L286.2 419.9L285.4 423.7L284.7 427.2L284.2 430.6L283.8 433.9L283.5 437.1L283.4 440.2L283.3 443.2L283.4 446.3L283.5 449.4L283.8 452.6L284.2 455.9L284.7 459.3L285.4 462.8L286.2 466.6L287.4 470.5L288.9 474.7L290.8 479.0L293.2 483.4L296.3 487.8L300.0 491.8L304.4 495.1L309.4 497.3L314.8 498.1L320.1 497.3L325.1 495.1L329.5 491.8L333.2 487.8L336.3 483.4L338.7 479.0L340.6 474.7L342.1 470.5L343.3 466.6L344.1 462.8L344.8 459.3L345.3 455.9L345.7 452.6L346.0 449.4L346.1 446.3Z" fill="#cf0000"/>
<path d="M342.8 443.2L342.8 440.5L342.7 437.7L342.4 434.9L342.1 432.0L341.6 428.9L341.0 425.7L340.2 422.4L339.2 418.9L337.9 415.1L336.2 411.2L334.0 407.3L331.3 403.3L328.0 399.7L324.0 396.7L319.5 394.7L314.8 394.0L310.0 394.7L305.5 396.7L301.5 399.7L298.2 403.3L295.5 407.3L293.3 411.2L291.6 415.1L290.3 418.9L289.3 422.4L288.5 425.7L287.9 428.9L287.4 432.0L287.1 434.9L286.8 437.7L286.7 440.5L286.7 443.2L286.7 446.0L286.8 448.8L287.1 451.6L287.4 454.5L287.9 457.6L288.5 460.8L289.3 464.1L290.3 467.6L291.6 471.4L293.3 475.3L295.5 479.2L298.2 483.2L301.5 486.8L305.5 489.8L310.0 491.8L314.8 492.5L319.5 491.8L324.0 489.8L328.0 486.8L331.3 483.2L334.0 479.2L336.2 475.3L337.9 471.4L339.2 467.6L340.2 464.1L341.0 460.8L341.6 457.6L342.1 454.5L342.4 451.6L342.7 448.8L342.8 446.0Z" fill="#cc0000"/>
<path d="M339.1 443.2L339.0 440.9L338.9 438.5L338.7 436.0L338.4 433.5L338.0 430.8L337.5 428.1L336.8 425.2L335.9 422.1L334.8 418.9L333.3 415.5L331.5 412.0L329.1 408.6L326.2 405.5L322.8 402.8L318.9 401.1L314.8 400.5L310.6 401.1L306.7 402.8L303.3 405.5L300.4 408.6L298.0 412.0L296.2 415.5L294.7 418.9L293.6 422.1L292.7 425.2L292.0 428.1L291.5 430.8L291.1 433.5L290.8 436.0L290.6 438.5L290.5 440.9L290.4 443.2L290.5 445.6L290.6 448.0L290.8 450.5L291.1 453.0L291.5 455.7L292.0 458.4L292.7 461.3L293.6 464.4L294.7 467.6L296.2 471.0L298.0 474.5L300.4 477.9L303.3 481.0L306.7 483.7L310.6 485.4L314.8 486.0L318.9 485.4L322.8 483.7L326.2 481.0L329.1 477.9L331.5 474.5L333.3 471.0L334.8 467.6L335.9 464.4L336.8 461.3L337.5 458.4L338.0 455.7L338.4 453.0L338.7 450.5L338.9 448.0L339.0 445.6Z" fill="#c90000"/>
<path d="M334.6 443.2L334.6 441.3L334.5 439.3L334.3 437.3L334.1 435.3L333.8 433.1L333.3 430.9L332.8 428.5L332.1 426.0L331.1 423.3L329.9 420.6L328.4 417.7L326.5 414.9L324.2 412.3L321.4 410.1L318.2 408.7L314.8 408.2L311.3 408.7L308.1 410.1L305.3 412.3L303.0 414.9L301.1 417.7L299.6 420.6L298.4 423.3L297.4 426.0L296.7 428.5L296.2 430.9L295.7 433.1L295.4 435.3L295.2 437.3L295.0 439.3L294.9 441.3L294.9 443.2L294.9 445.2L295.0 447.2L295.2 449.2L295.4 451.2L295.7 453.4L296.2 455.6L296.7 458.0L297.4 460.5L298.4 463.2L299.6 465.9L301.1 468.8L303.0 471.6L305.3 474.2L308.1 476.4L311.3 477.8L314.8 478.3L318.2 477.8L321.4 476.4L324.2 474.2L326.5 471.6L328.4 468.8L329.9 465.9L331.1 463.2L332.1 460.5L332.8 458.0L333.3 455.6L333.8 453.4L334.1 451.2L334.3 449.2L334.5 447.2L334.6 445.2Z" fill="#c50000"/>
<path d="M328.8 443.2L328.8 441.9L328.7 440.5L328.6 439.1L328.4 437.6L328.2 436.1L327.9 434.5L327.5 432.8L327.0 431.0L326.3 429.2L325.5 427.2L324.4 425.2L323.1 423.2L321.4 421.3L319.4 419.7L317.2 418.7L314.8 418.3L312.3 418.7L310.1 419.7L308.1 421.3L306.4 423.2L305.1 425.2L304.0 427.2L303.2 429.2L302.5 431.0L302.0 432.8L301.6 434.5L301.3 436.1L301.1 437.6L300.9 439.1L300.8 440.5L300.7 441.9L300.7 443.2L300.7 444.6L300.8 446.0L300.9 447.4L301.1 448.9L301.3 450.4L301.6 452.0L302.0 453.7L302.5 455.5L303.2 457.3L304.0 459.3L305.1 461.3L306.4 463.3L308.1 465.2L310.1 466.8L312.3 467.8L314.8 468.2L317.2 467.8L319.4 466.8L321.4 465.2L323.1 463.3L324.4 461.3L325.5 459.3L326.3 457.3L327.0 455.5L327.5 453.7L327.9 452.0L328.2 450.4L328.4 448.9L328.6 447.4L328.7 446.0L328.8 444.6Z" fill="#c20000"/>
</g>
<path d="M136.75 265.2V621.9 M135.6 620.75H492" stroke="#000" stroke-width="2.3" fill="none"/>
<path d="M137.9 621.8H148 M482 621.8H492" stroke="#a8a8a8" stroke-width="1.4" fill="none"/>
<path d="M136.2 267V276 M136.2 610V619.5" stroke="#8c8c8c" stroke-width="1.2" fill="none"/>
<path d="M135.5 265.8H492" stroke="#0a0530" stroke-width="1.4" fill="none"/>
<path d="M172.95 620.9V622.2M208.40 620.9V622.2M243.85 620.9V622.2M279.30 620.9V622.2M314.75 620.9V622.2M350.20 620.9V622.2M385.65 620.9V622.2M421.10 620.9V622.2M456.55 620.9V622.2M135.4 301.85H136.6M135.4 337.20H136.6M135.4 372.55H136.6M135.4 407.90H136.6M135.4 443.25H136.6M135.4 478.60H136.6M135.4 513.95H136.6M135.4 549.30H136.6M135.4 584.65H136.6" stroke="#e8e8e8" stroke-opacity="0.85" stroke-width="1" fill="none"/>
<rect x="510.700" y="306.500" width="30.800" height="246" fill="url(#cbg)"/>
<path d="M541.3 306V552.5" stroke="#111" stroke-opacity="0.8" stroke-width="1.4" fill="none"/>
<path d="M511.3 306.5V552.5" stroke="#222" stroke-opacity="0.45" stroke-width="1" fill="none"/>
<path d="M511 306.5H542" stroke="#666" stroke-opacity="0.7" stroke-width="1" fill="none"/>
<g font-family="DejaVu Sans Mono, Liberation Mono, monospace" fill="#262626" font-size="16.8">
<text x="128" y="272.3" text-anchor="end">15.0</text>
<text x="128" y="449.5" text-anchor="end">0</text>
<text x="128" y="626" text-anchor="end">-15.0</text>
<text x="137" y="646" text-anchor="middle">-15.0</text>
<text x="314.5" y="646" text-anchor="middle">0</text>
<text x="492" y="646" text-anchor="middle">15.0</text>
</g>
<g font-family="DejaVu Sans Mono, Liberation Mono, monospace" fill="#262626" font-size="20">
<text x="315" y="671" text-anchor="middle">X-Millimeters</text>
<text transform="translate(47,443) rotate(-90)" text-anchor="middle">Y-Millimeters</text>
</g>
<g font-family="DejaVu Sans Mono, Liberation Mono, monospace" fill="#262626" font-size="17">
<text x="545" y="312.8">0.0208</text>
<text x="545" y="337.4">0.0171</text>
<text x="545" y="361.9">0.0134</text>
<text x="545" y="386.5">0.0097</text>
<text x="545" y="411.0">0.0060</text>
<text x="545" y="435.6">0.0024</text>
<text x="545" y="460.1">-0.0013</text>
<text x="545" y="484.6">-0.0050</text>
<text x="545" y="509.2">-0.0087</text>
<text x="545" y="533.8">-0.0124</text>
<text x="545" y="558.3">-0.0161</text>
</g>
<text x="545" y="585" font-family="DejaVu Sans Mono, Liberation Mono, monospace" fill="#2a2a2a" font-size="13.3">1/mm</text>
</svg>
<!--/PLOT-->
  <div class="abs" id="panel"></div>
  <svg class="abs" style="left:0;top:50px" width="700" height="180" viewBox="0 50 700 180"><rect x="6.450" y="58.950" width="680.800" height="165.550" fill="none" stroke="#161616" stroke-width="1.500"/></svg>


  <!-- toolbar text -->
  <div class="tb" style="left:31px;top:34px;line-height:16px">Settings</div>
  <div class="tb" style="left:445px;top:34.5px;line-height:16px">3 x 4</div>
  <div class="tb" style="left:526px;top:34.5px;line-height:16px">Standard</div>
  <div class="tb" style="left:603px;top:34.5px;line-height:16px">Automatic</div>
  <div class="tsep" style="left:85px"></div>
  <div class="tsep" style="left:192px"></div>
  <div class="tsep" style="left:325px"></div>
  <div class="tsep" style="left:355px"></div>
  <div class="tsep" style="left:517px"></div>
  <div class="tsep" style="left:684px"></div>
  <svg class="abs" style="left:0;top:0" width="800" height="59" viewBox="0 0 800 59">
    <defs>
      <radialGradient id="helpg" cx="0.4" cy="0.3" r="0.8"><stop offset="0" stop-color="#5b7fe0"/><stop offset="0.6" stop-color="#1f3fb0"/><stop offset="1" stop-color="#0c2280"/></radialGradient>
      <linearGradient id="selg" x1="0" y1="0" x2="0" y2="1"><stop offset="0" stop-color="#fdeec6"/><stop offset="1" stop-color="#fbd98a"/></linearGradient>
    </defs>
    <!-- title icon: lens + grip -->
    <path d="M11.500 5.300 C8.800 10 8.800 17 11.500 21.500" fill="none" stroke="#707884" stroke-width="1.900"/>
    <path d="M13 8 C11.600 11.500 11.600 15.500 13.300 19.500" fill="none" stroke="#9aa3b0" stroke-width="1.300"/>
    <circle cx="13.600" cy="9.200" r="1" fill="#5a5f68"/>
    <path d="M23 5 V21" stroke="#8d9db6" stroke-width="2" stroke-dasharray="1.300 1.300"/>
    <!-- window buttons -->
    <path d="M712 11.200 L722 11.200 L717 16.200 Z" fill="#4c4c4c"/>
    <rect x="733" y="13.500" width="10" height="2.200" fill="#4c4c4c"/>
    <rect x="755.500" y="9.800" width="8.600" height="7.600" fill="none" stroke="#555" stroke-width="1.100"/><rect x="755" y="9.200" width="9.600" height="1.800" fill="#555"/>
    <path d="M777.600 9.200 L785.800 17.400 M785.800 9.200 L777.600 17.400" stroke="#555" stroke-width="1.300" fill="none"/>
    <!-- settings chevron circle -->
    <circle cx="17" cy="42.500" r="8.300" fill="#fff" stroke="#a9a9a9" stroke-width="1.400"/>
    <path d="M13 44.600 L17.200 40.500 L21.400 44.600" fill="none" stroke="#5e5e5e" stroke-width="2.100"/>
    <!-- refresh -->
    <path id="rfa" d="M94.200 41.200 C94.800 37 99 35 102.500 36.200 L102.700 33.100 L107 38.100 L102.100 41.500 L102.300 39.200 C99.500 38.300 96.500 39 94.200 41.200 Z" fill="#2496ec"/>
    <path d="M94.200 41.200 C94.800 37 99 35 102.500 36.200 L102.700 33.100 L107 38.100 L102.100 41.500 L102.300 39.200 C99.500 38.300 96.500 39 94.200 41.200 Z" fill="#27a8f5" transform="rotate(180 100.600 42.100)"/>
    <!-- copy -->
    <path d="M118.500 36.500 H125 L128 39.500 V47.500 H118.500 Z" fill="#eef3fb" stroke="#6f8fc4" stroke-width="1"/>
    <path d="M120.500 40.500 H125.500 M120.500 42.500 H124 M120.500 44.500 H124" stroke="#5b7fc0" stroke-width="1"/>
    <path d="M124.500 40.500 H131 L134.500 44 V50.500 H124.500 Z" fill="#4f74c0" stroke="#2f4f9c" stroke-width="1"/>
    <path d="M126.500 44.500 H132 M126.500 46.500 H132 M126.500 48.500 H132" stroke="#dfe8f8" stroke-width="1"/>
    <!-- save (purple floppy + pencil) -->
    <rect x="143.500" y="35" width="16" height="15.500" rx="1" fill="#a45fc0" stroke="#8a48a8" stroke-width="1"/>
    <rect x="146" y="35.500" width="11" height="8" fill="#ece4f3"/>
    <rect x="147.500" y="45.500" width="8" height="5" fill="#cdb5da"/>
    <rect x="149" y="46" width="2" height="4" fill="#7a4a92"/>
    <path d="M151 38.500 L158 48" stroke="#f0a020" stroke-width="3"/>
    <path d="M150.200 36.800 L152.600 38 L150.300 39.700 Z" fill="#6b4a1e"/>
    <path d="M157 46.600 L160 50.500 L155.600 48.300 Z" fill="#d94a38"/>
    <!-- print -->
    <rect x="172.500" y="34" width="10" height="6.500" fill="#fdfdfd" stroke="#a8a8a8" stroke-width="1"/>
    <rect x="168.500" y="39.500" width="18" height="5" rx="1.500" fill="#565a60" stroke="#44474c" stroke-width="1"/>
    <rect x="168.500" y="43.500" width="18" height="4.500" rx="1" fill="#c4c7cc" stroke="#8d9096" stroke-width="1"/>
    <rect x="173" y="45.500" width="9" height="5.500" fill="#fff" stroke="#9a9a9a" stroke-width="0.800"/>
    <rect x="175" y="46.500" width="2" height="3" fill="#2f6fd0"/><rect x="178" y="46.500" width="2" height="3" fill="#3aa655"/>
    <rect x="183.500" y="41" width="1.500" height="1.500" fill="#7be07b"/>
    <!-- pencil -->
    <path d="M204.600 45.800 L212.300 35.200" stroke="#f2a628" stroke-width="2.900"/>
    <path d="M211.200 36.700 L213.200 34 L214.800 35.200 L213.500 37.900 Z" fill="#e0524a"/>
    <path d="M203.500 44.800 L202.600 48.200 L205.700 46.800 Z" fill="#8a6a3a"/>
    <!-- square -->
    <rect x="225.200" y="34.800" width="16.400" height="14.600" fill="#fff" stroke="#111" stroke-width="2"/>
    <!-- arrow -->
    <path d="M250.500 50 L265 36" stroke="#111" stroke-width="1.500"/>
    <path d="M268 33.200 L261.200 35 L266 40 Z" fill="#111"/>
    <!-- dash -->
    <rect x="275" y="40.300" width="18" height="4" fill="#111"/>
    <!-- A -->
    <text x="300.300" y="50" font-family="Liberation Sans, sans-serif" font-weight="bold" font-size="21.500" fill="#111" stroke="#111" stroke-width="0.700" textLength="17" lengthAdjust="spacingAndGlyphs">A</text>
    <!-- lock -->
    <path d="M337.300 43.500 V39 C337.300 33.300 343.300 33.300 343.300 39 V43.500" fill="none" stroke="#c2c4c8" stroke-width="2"/>
    <rect x="335.300" y="42.800" width="10" height="8" rx="1" fill="#deded6" stroke="#a9a99c" stroke-width="0.900"/>
    <rect x="335.800" y="45.600" width="9" height="2.800" fill="#3c3720"/>
    <path d="M337 45.600 l1.800 2.800 M340 45.600 l1.800 2.800 M343 45.600 l1.500 2.400" stroke="#ecc92e" stroke-width="1.300"/>
    <!-- selected button -->
    <rect x="359.300" y="30.300" width="23.800" height="24" rx="2.500" fill="url(#selg)" stroke="#e5a93a" stroke-width="1.400"/>
    <rect x="363" y="34.600" width="16.400" height="16" fill="#fff" stroke="#111" stroke-width="2.200"/>
    <path d="M370 35 H372.400 L371.700 39.800 H370.700 Z M370 50.200 H372.400 L371.700 45.400 H370.700 Z M363.500 41.400 V43.800 L368.300 43.100 V42.100 Z M379 41.400 V43.800 L374.200 43.100 V42.100 Z" fill="#111"/>
    <!-- windows icon -->
    <rect x="390.300" y="34.100" width="15" height="10.500" fill="#f4f6fa" stroke="#a4acba" stroke-width="1"/>
    <rect x="390.800" y="34.600" width="14" height="2.600" fill="#5572c4"/>
    <rect x="392.700" y="40.300" width="15" height="11" fill="#eef0f4" stroke="#a4acba" stroke-width="1"/>
    <rect x="394" y="43.300" width="9.500" height="7" fill="#2c49b2"/>
    <rect x="404" y="43.300" width="3" height="7" fill="#b9bec8"/>
    <rect x="402.500" y="41" width="4" height="1.500" fill="#5572c4"/>
    <!-- layers -->
    <g fill="#fff" stroke="#858585" stroke-width="1.100" stroke-linejoin="round">
      <path d="M418.500 45.500 L426.700 42.200 L435 45.500 L426.700 48.800 Z"/>
      <path d="M418.500 42.200 L426.700 38.900 L435 42.200 L426.700 45.500 Z"/>
      <path d="M418.500 38.900 L426.700 35.600 L435 38.900 L426.700 42.200 Z"/>
    </g>
    <!-- triangles -->
    <path d="M478.500 42 L484 42 L481.250 45 Z" fill="#222"/>
    <path d="M585.500 42 L591 42 L588.250 45 Z" fill="#222"/>
    <path d="M670.500 42 L676 42 L673.250 45 Z" fill="#222"/>
    <!-- black circle icon -->
    <circle cx="502.200" cy="42.300" r="9.400" fill="#050505"/>
    <path d="M500.400 38.700 A4.200 4.200 0 1 0 505.600 40" fill="none" stroke="#fff" stroke-width="1.900"/>
    <path d="M502.800 37.200 L508 38.200 L505.300 41.800 Z" fill="#fff"/>
    <!-- help -->
    <circle cx="699.700" cy="42.500" r="9" fill="url(#helpg)" stroke="#9098a8" stroke-width="1.600"/>
    <text x="699.700" y="48" text-anchor="middle" font-family="Liberation Sans, sans-serif" font-weight="bold" font-size="15" fill="#fff">?</text>
  </svg>
  <!-- settings panel contents -->
  <div class="lbl" style="left:22px;top:78px">Sampling:</div>
  <div class="lbl" style="left:22px;top:108px;letter-spacing:-0.2px">Data:</div>
  <div class="lbl" style="left:22px;top:138px;letter-spacing:-0.4px">Remove:</div>
  <div class="combo" style="left:93px;top:71px;width:144px"><span>129 x 129</span><svg width="9" height="6" viewBox="0 0 9 6"><path d="M1.300 1.200 L4.500 4.300 L7.700 1.200" fill="none" stroke="#666" stroke-width="1.300"/></svg></div>
  <div class="combo" style="left:93px;top:101px;width:144px"><span style="letter-spacing:-0.2px">X Curvature</span><svg width="9" height="6" viewBox="0 0 9 6"><path d="M1.300 1.200 L4.500 4.300 L7.700 1.200" fill="none" stroke="#666" stroke-width="1.300"/></svg></div>
  <div class="combo" style="left:93px;top:131px;width:144px"><span>None</span><svg width="9" height="6" viewBox="0 0 9 6"><path d="M1.300 1.200 L4.500 4.300 L7.700 1.200" fill="none" stroke="#666" stroke-width="1.300"/></svg></div>
  <div class="lbl" style="left:266px;top:78px;letter-spacing:-0.35px">Surface:</div>
  <div class="lbl" style="left:266px;top:108px;letter-spacing:-0.35px">Show As:</div>
  <div class="combo" style="left:350px;top:69px;width:143px;height:26px"><span style="top:4.5px">2</span><svg width="9" height="6" viewBox="0 0 9 6"><path d="M1.300 1.200 L4.500 4.300 L7.700 1.200" fill="none" stroke="#666" stroke-width="1.300"/></svg></div>
  <div class="combo" style="left:350px;top:101px;width:143px"><span style="letter-spacing:-0.33px">False Color</span><svg width="9" height="6" viewBox="0 0 9 6"><path d="M1.300 1.200 L4.500 4.300 L7.700 1.200" fill="none" stroke="#666" stroke-width="1.300"/></svg></div>
  <div class="lbl" style="left:522px;top:78px;letter-spacing:0.09px">Off-Axis Coordinates</div>
  <div class="chk" style="left:661px;top:77px"></div>
  <div class="abs" id="hr"></div>
  <div class="chk" style="left:17px;top:188px"></div>
  <div class="lbl" style="left:39px;top:189px;letter-spacing:0.3px">Auto Apply</div>
  <div class="btn" style="left:110px;top:178px;width:69px">Apply</div>
  <div class="btn" style="left:183px;top:178px;width:68px">OK</div>
  <div class="btn" style="left:255px;top:178px;width:69px">Cancel</div>
  <div class="btn" style="left:422px;top:178px;width:70px">Save</div>
  <div class="btn" style="left:496px;top:178px;width:68px">Load</div>
  <div class="btn" style="left:568px;top:178px;width:68px">Reset</div>

  <!-- bottom info box -->
  <div class="abs" style="left:7px;top:703px;width:787px;height:2px;background:#f3f3f3"></div>
  <div class="abs" style="left:7px;top:722px;width:787px;height:1px;background:#cdcdcd"></div>
  <div class="abs" style="left:6px;top:704px;width:1px;height:118px;background:#7a7a7a"></div>
  <div class="abs" style="left:531px;top:722px;width:1px;height:100px;background:#555"></div>
  <div class="abs" style="left:531px;top:781.5px;width:263px;height:1px;background:#555"></div>
  <div class="abs mono info" style="left:359px;top:704.5px">X Curvature</div>
  <div class="abs mono info" style="left:19px;top:722.6px">Even Asphere Lens:  See System, General, Title/Notes
1/14/2020
Surface 2.
Units are inverse Millimeters.

Width = 30, Decenter x = 0, y = 0 Millimeters.</div>
  <div class="abs mono info" style="left:526px;top:722.6px;width:262px;text-align:center">Zemax
Zemax OpticStudio 20.1</div>
  <div class="abs mono info" style="left:526px;top:782px;width:262px;text-align:center">Even Asphere.zmx
Configuration 1 of 1</div>
  <svg class="abs" style="left:0;top:822px" width="800" height="31" viewBox="0 822 800 31">
    <defs>
      <linearGradient id="ttab" x1="0" y1="0" x2="0" y2="1"><stop offset="0" stop-color="#cbcfd8"/><stop offset="1" stop-color="#b7bcc7"/></linearGradient>
    </defs>
    <rect x="0" y="822" width="800" height="31" fill="#d4d7dd"/>
    <rect x="0" y="822" width="800" height="4.500" fill="#dee1e7"/>
    <rect x="0" y="849.500" width="800" height="2" fill="#e2e4e8"/>
    <!-- area under the curve at left -->
    <path d="M0 826 H3 C14 826 13 849 27 849 H0 Z" fill="#e6e8ec"/>
    <!-- graph tab -->
    <path d="M1 826.200 H3 C14 826.200 13 849 27 849 H86 C90 849 92 847 92 843 V826.200 Z" fill="#dee1e7"/>
    <path d="M1 826.200 H3 C14 826.200 13 849 27 849 H86 C90 849 92 847 92 843 V826.200" fill="none" stroke="#79808d" stroke-width="1.300"/>
    <!-- text tab -->
    <path d="M92.500 826.500 V843 C92.500 846.500 95 848.500 98.500 848.500 H162.500 C164.800 848.500 166 847.200 166 845 V826.500 Z" fill="url(#ttab)" stroke="#79808d" stroke-width="1.300"/>
    <path d="M92 826.700 H799" stroke="#79808d" stroke-width="1.400"/>
    <rect x="0" y="851.500" width="800" height="1.500" fill="#8f8f8f"/>
    <text x="37.500" y="842" font-family="Liberation Sans, sans-serif" font-size="13.500" fill="#1a1a1a">Graph</text>
    <text x="116" y="842" font-family="Liberation Sans, sans-serif" font-size="13.500" fill="#1a1a1a">Text</text>
  </svg>
  <!-- window borders -->
  <div class="abs" style="left:0;top:0;width:800px;height:1px;background:#9b9b9b"></div>
  <div class="abs" style="left:0;top:0;width:2px;height:853px;background:linear-gradient(90deg,#a2a5aa 0%,#a2a5aa 55%,rgba(200,202,206,0.6) 56%,rgba(200,202,206,0.6) 100%)"></div>
  <div class="abs" style="left:798px;top:0;width:2px;height:853px;background:linear-gradient(90deg,#c4c6cb 0%,#c4c6cb 35%,#878a91 36%,#878a91 100%)"></div>
</div>
</body>
</html>
